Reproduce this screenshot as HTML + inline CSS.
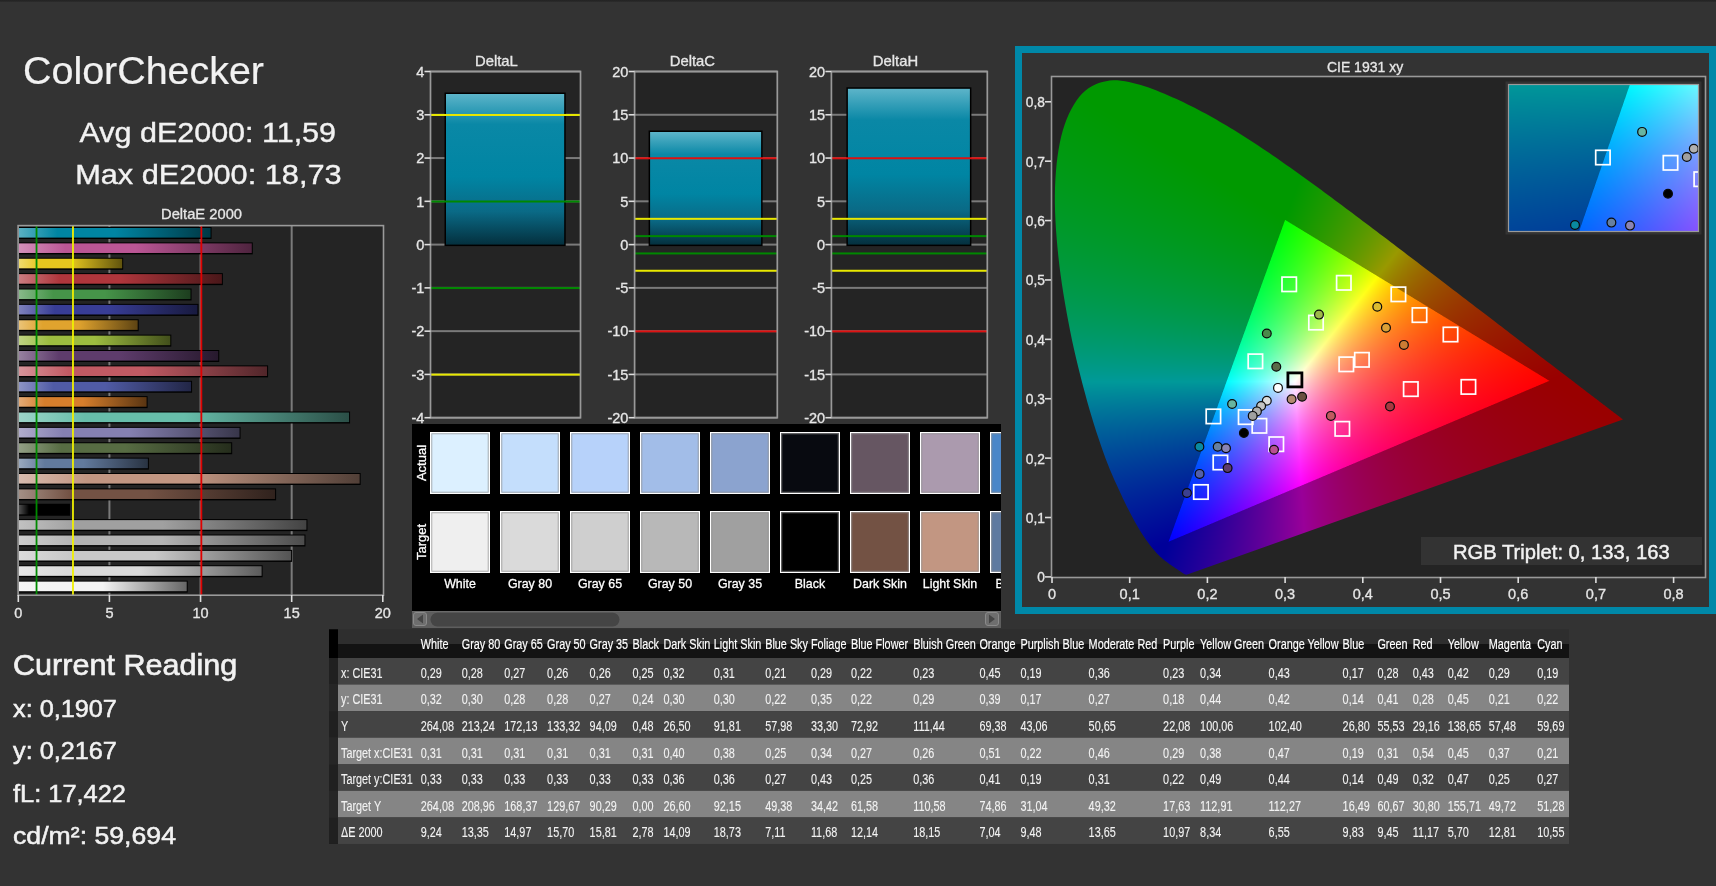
<!DOCTYPE html>
<html><head><meta charset="utf-8">
<style>
html,body{margin:0;padding:0;}
body{width:1716px;height:886px;overflow:hidden;background:#333333;position:relative;font-family:"Liberation Sans",sans-serif;}
#top{position:absolute;left:0;top:0;width:1716px;height:2px;background:linear-gradient(#222,#2c2c2c);}
canvas{position:absolute;display:block;}
#cie{left:1052px;top:77px;width:653px;height:500px;}
#cie2{left:1509px;top:85px;width:189px;height:146px;}
svg{position:absolute;left:0;top:0;}
text{font-family:"Liberation Sans",sans-serif;}
</style></head><body>
<div id="top"></div>
<svg style="position:absolute;left:1052px;top:77px" width="653" height="500"><defs><clipPath id="fbc1052"><path d="M135.3 497.5 L135.3 497.5 L135.2 497.5 L135.2 497.5 L135.2 497.5 L135.2 497.6 L135.1 497.6 L135.1 497.6 L135.0 497.6 L135.0 497.6 L135.0 497.6 L134.9 497.6 L134.9 497.6 L134.8 497.6 L134.8 497.6 L134.7 497.6 L134.7 497.6 L134.6 497.6 L134.5 497.6 L134.5 497.7 L134.4 497.7 L134.4 497.7 L134.3 497.7 L134.2 497.7 L134.1 497.6 L134.0 497.6 L133.9 497.6 L133.8 497.6 L133.7 497.6 L133.5 497.5 L133.4 497.5 L133.3 497.5 L133.2 497.5 L133.1 497.4 L133.0 497.4 L132.9 497.3 L132.8 497.3 L132.7 497.2 L132.5 497.2 L132.4 497.1 L132.3 497.0 L132.2 497.0 L132.1 496.9 L132.0 496.8 L131.8 496.8 L131.7 496.7 L131.5 496.6 L131.4 496.5 L131.2 496.4 L131.1 496.3 L130.9 496.2 L130.7 496.0 L130.5 495.9 L130.3 495.8 L130.1 495.7 L129.9 495.5 L129.7 495.4 L129.5 495.2 L129.2 495.1 L129.0 494.9 L128.8 494.7 L128.5 494.6 L128.3 494.4 L128.0 494.2 L127.7 494.0 L127.5 493.8 L127.2 493.6 L126.9 493.4 L126.5 493.2 L126.2 493.0 L125.9 492.8 L125.5 492.5 L125.2 492.3 L124.8 492.0 L124.4 491.8 L124.0 491.5 L123.5 491.2 L123.1 490.9 L122.6 490.6 L122.2 490.3 L121.7 490.0 L121.2 489.6 L120.7 489.3 L120.2 488.9 L119.6 488.6 L119.1 488.2 L118.5 487.8 L117.9 487.4 L117.3 487.0 L116.7 486.5 L116.1 486.1 L115.4 485.6 L114.7 485.1 L114.1 484.6 L113.4 484.0 L112.6 483.4 L111.9 482.8 L111.1 482.2 L110.4 481.5 L109.6 480.9 L108.8 480.2 L108.0 479.4 L107.1 478.6 L106.2 477.7 L105.3 476.7 L104.3 475.7 L103.3 474.5 L102.2 473.3 L101.1 472.1 L100.0 470.7 L98.9 469.3 L97.7 467.7 L96.4 466.1 L95.2 464.3 L93.8 462.4 L92.5 460.5 L91.1 458.5 L89.7 456.3 L88.2 454.0 L86.7 451.5 L85.2 448.8 L83.5 445.9 L81.9 442.9 L80.2 439.8 L78.4 436.5 L76.6 433.1 L74.8 429.4 L72.9 425.5 L70.9 421.4 L68.9 417.1 L66.8 412.6 L64.6 407.9 L62.4 403.0 L60.2 397.8 L57.9 392.4 L55.6 386.8 L53.4 380.9 L51.1 374.7 L48.9 368.3 L46.6 361.6 L44.3 354.6 L42.0 347.5 L39.7 340.1 L37.5 332.5 L35.3 324.7 L33.1 316.6 L30.8 308.2 L28.6 299.6 L26.4 290.8 L24.2 281.8 L22.1 272.7 L20.1 263.6 L18.3 254.5 L16.5 245.4 L14.7 236.0 L13.1 226.5 L11.5 217.0 L10.0 207.5 L8.6 198.1 L7.4 188.7 L6.4 179.6 L5.5 170.6 L4.7 161.6 L4.0 152.6 L3.5 143.8 L3.1 135.1 L2.9 126.6 L2.9 118.3 L3.0 110.2 L3.4 102.4 L3.9 94.7 L4.6 87.1 L5.5 79.8 L6.5 72.7 L7.8 65.9 L9.2 59.4 L10.8 53.4 L12.6 47.7 L14.6 42.2 L16.9 37.1 L19.3 32.2 L21.8 27.7 L24.5 23.6 L27.3 19.9 L30.2 16.5 L33.3 13.7 L36.4 11.2 L39.8 9.2 L43.3 7.5 L46.8 6.1 L50.4 5.0 L54.1 4.2 L57.7 3.6 L61.4 3.2 L65.2 3.3 L69.1 3.6 L73.0 4.3 L76.9 5.1 L80.9 6.0 L84.8 7.0 L88.7 8.1 L92.7 9.2 L96.6 10.5 L100.6 12.0 L104.6 13.5 L108.5 15.1 L112.4 16.8 L116.3 18.5 L120.2 20.2 L124.0 21.9 L127.8 23.6 L131.5 25.4 L135.2 27.2 L138.9 29.0 L142.6 30.9 L146.2 32.8 L149.9 34.7 L153.5 36.6 L157.1 38.6 L160.7 40.6 L164.2 42.6 L167.8 44.6 L171.3 46.7 L174.9 48.8 L178.4 50.9 L181.9 53.1 L185.5 55.3 L189.0 57.5 L192.5 59.7 L196.0 62.0 L199.5 64.2 L203.0 66.5 L206.5 68.8 L210.0 71.1 L213.5 73.5 L217.0 75.8 L220.5 78.2 L223.9 80.6 L227.4 83.0 L230.9 85.5 L234.3 87.9 L237.8 90.3 L241.3 92.8 L244.7 95.3 L248.2 97.8 L251.7 100.3 L255.1 102.8 L258.6 105.3 L262.1 107.8 L265.6 110.3 L269.0 112.9 L272.5 115.4 L276.0 118.0 L279.5 120.6 L283.0 123.1 L286.4 125.7 L289.9 128.3 L293.4 130.9 L296.8 133.5 L300.3 136.1 L303.8 138.7 L307.2 141.3 L310.7 143.9 L314.1 146.5 L317.6 149.1 L321.0 151.7 L324.5 154.3 L327.9 156.9 L331.4 159.5 L334.8 162.1 L338.2 164.7 L341.7 167.3 L345.1 169.9 L348.5 172.5 L351.9 175.1 L355.3 177.7 L358.6 180.2 L362.0 182.8 L365.4 185.4 L368.7 187.9 L372.0 190.5 L375.3 193.0 L378.7 195.5 L381.9 198.0 L385.2 200.6 L388.5 203.1 L391.8 205.6 L395.0 208.0 L398.2 210.5 L401.4 212.9 L404.6 215.4 L407.8 217.8 L410.9 220.2 L414.1 222.6 L417.2 225.0 L420.2 227.3 L423.3 229.7 L426.3 232.0 L429.4 234.3 L432.4 236.6 L435.3 238.8 L438.3 241.1 L441.2 243.3 L444.1 245.5 L446.9 247.7 L449.7 249.8 L452.5 252.0 L455.3 254.1 L458.0 256.2 L460.7 258.2 L463.3 260.2 L465.9 262.2 L468.5 264.2 L470.9 266.1 L473.4 268.0 L475.8 269.8 L478.1 271.6 L480.4 273.4 L482.7 275.1 L485.0 276.8 L487.2 278.5 L489.4 280.2 L491.5 281.8 L493.6 283.4 L495.7 285.0 L497.8 286.6 L499.8 288.1 L501.7 289.6 L503.7 291.1 L505.5 292.5 L507.3 293.9 L509.1 295.2 L510.8 296.5 L512.5 297.8 L514.2 299.0 L515.8 300.2 L517.3 301.4 L518.9 302.6 L520.3 303.7 L521.8 304.8 L523.2 305.9 L524.5 307.0 L525.9 308.0 L527.2 309.0 L528.4 310.0 L529.7 310.9 L530.9 311.8 L532.0 312.7 L533.1 313.6 L534.2 314.4 L535.3 315.2 L536.3 316.0 L537.3 316.8 L538.3 317.5 L539.2 318.2 L540.1 318.9 L541.0 319.6 L541.9 320.2 L542.7 320.9 L543.6 321.5 L544.4 322.1 L545.2 322.7 L545.9 323.3 L546.6 323.9 L547.3 324.4 L548.0 324.9 L548.7 325.5 L549.4 326.0 L550.0 326.5 L550.7 327.0 L551.3 327.4 L551.9 327.9 L552.5 328.4 L553.1 328.8 L553.7 329.3 L554.2 329.7 L554.8 330.1 L555.3 330.5 L555.8 330.9 L556.3 331.3 L556.8 331.7 L557.3 332.0 L557.8 332.4 L558.2 332.7 L558.7 333.1 L559.1 333.4 L559.5 333.7 L559.9 334.0 L560.3 334.3 L560.7 334.6 L561.1 334.9 L561.4 335.1 L561.8 335.4 L562.1 335.7 L562.4 335.9 L562.7 336.1 L563.0 336.4 L563.3 336.6 L563.6 336.8 L563.8 337.0 L564.1 337.2 L564.4 337.4 L564.6 337.6 L564.8 337.8 L565.1 337.9 L565.3 338.1 L565.5 338.3 L565.7 338.4 L565.9 338.6 L566.1 338.7 L566.2 338.8 L566.4 339.0 L566.6 339.1 L566.7 339.2 L566.9 339.3 L567.0 339.4 L567.2 339.6 L567.4 339.7 L567.6 339.9 L567.8 340.0 L567.9 340.1 L568.1 340.3 L568.3 340.4 L568.5 340.6 L568.8 340.8 L569.0 341.0 L569.3 341.2 L569.6 341.4 L569.9 341.7 L570.2 341.9 L570.5 342.1 L570.7 342.3 L570.9 342.4Z"/></clipPath><clipPath id="fbc1052t"><path d="M497.3 303.8 L233.1 142.9 L116.5 464.7Z"/></clipPath></defs><rect width="653" height="500" fill="#242424"/><g clip-path="url(#fbc1052)"><rect x="40" y="0" width="48" height="8" fill="#009c00"/><rect x="24" y="8" width="88" height="8" fill="#009c00"/><rect x="24" y="16" width="104" height="8" fill="#009c00"/><rect x="16" y="24" width="136" height="8" fill="#009c00"/><rect x="8" y="32" width="8" height="8" fill="#009c0c"/><rect x="16" y="32" width="144" height="8" fill="#009c00"/><rect x="8" y="40" width="16" height="8" fill="#009c0c"/><rect x="24" y="40" width="152" height="8" fill="#009c00"/><rect x="8" y="48" width="32" height="8" fill="#009c0c"/><rect x="40" y="48" width="152" height="8" fill="#009c00"/><rect x="8" y="56" width="48" height="8" fill="#009c0c"/><rect x="56" y="56" width="144" height="8" fill="#009c00"/><rect x="0" y="64" width="72" height="8" fill="#009c0c"/><rect x="72" y="64" width="144" height="8" fill="#009c00"/><rect x="0" y="72" width="88" height="8" fill="#009c0c"/><rect x="88" y="72" width="136" height="8" fill="#009c00"/><rect x="0" y="80" width="16" height="8" fill="#009c18"/><rect x="16" y="80" width="88" height="8" fill="#009c0c"/><rect x="104" y="80" width="136" height="8" fill="#009c00"/><rect x="0" y="88" width="32" height="8" fill="#009c18"/><rect x="32" y="88" width="80" height="8" fill="#009c0c"/><rect x="112" y="88" width="136" height="8" fill="#009c00"/><rect x="0" y="96" width="56" height="8" fill="#009c18"/><rect x="56" y="96" width="72" height="8" fill="#009c0c"/><rect x="128" y="96" width="128" height="8" fill="#009c00"/><rect x="256" y="96" width="8" height="8" fill="#0c9c00"/><rect x="0" y="104" width="72" height="8" fill="#009c18"/><rect x="72" y="104" width="72" height="8" fill="#009c0c"/><rect x="144" y="104" width="112" height="8" fill="#009c00"/><rect x="256" y="104" width="8" height="8" fill="#0c9c00"/><rect x="264" y="104" width="8" height="8" fill="#189c00"/><rect x="0" y="112" width="88" height="8" fill="#009c18"/><rect x="88" y="112" width="72" height="8" fill="#009c0c"/><rect x="160" y="112" width="88" height="8" fill="#009c00"/><rect x="248" y="112" width="16" height="8" fill="#0c9c00"/><rect x="264" y="112" width="16" height="8" fill="#189c00"/><rect x="0" y="120" width="24" height="8" fill="#009c24"/><rect x="24" y="120" width="80" height="8" fill="#009c18"/><rect x="104" y="120" width="72" height="8" fill="#009c0c"/><rect x="176" y="120" width="72" height="8" fill="#009c00"/><rect x="248" y="120" width="16" height="8" fill="#0c9c00"/><rect x="264" y="120" width="8" height="8" fill="#189c00"/><rect x="272" y="120" width="16" height="8" fill="#249c00"/><rect x="288" y="120" width="8" height="8" fill="#309c00"/><rect x="0" y="128" width="48" height="8" fill="#009c24"/><rect x="48" y="128" width="72" height="8" fill="#009c18"/><rect x="120" y="128" width="64" height="8" fill="#009c0c"/><rect x="184" y="128" width="64" height="8" fill="#009c00"/><rect x="248" y="128" width="8" height="8" fill="#0c9c00"/><rect x="256" y="128" width="16" height="8" fill="#189c00"/><rect x="272" y="128" width="8" height="8" fill="#249c00"/><rect x="280" y="128" width="16" height="8" fill="#309c00"/><rect x="296" y="128" width="8" height="8" fill="#3c9c00"/><rect x="0" y="136" width="64" height="8" fill="#009c24"/><rect x="64" y="136" width="72" height="8" fill="#009c18"/><rect x="136" y="136" width="64" height="8" fill="#009c0c"/><rect x="200" y="136" width="40" height="8" fill="#009c00"/><rect x="240" y="136" width="16" height="8" fill="#0c9c00"/><rect x="256" y="136" width="8" height="8" fill="#189c00"/><rect x="264" y="136" width="16" height="8" fill="#249c00"/><rect x="280" y="136" width="8" height="8" fill="#309c00"/><rect x="288" y="136" width="16" height="8" fill="#3c9c00"/><rect x="304" y="136" width="8" height="8" fill="#489c00"/><rect x="0" y="144" width="88" height="8" fill="#009c24"/><rect x="88" y="144" width="72" height="8" fill="#009c18"/><rect x="160" y="144" width="56" height="8" fill="#009c0c"/><rect x="216" y="144" width="24" height="8" fill="#009c00"/><rect x="240" y="144" width="8" height="8" fill="#0c9c00"/><rect x="248" y="144" width="16" height="8" fill="#189c00"/><rect x="264" y="144" width="8" height="8" fill="#249c00"/><rect x="272" y="144" width="16" height="8" fill="#309c00"/><rect x="288" y="144" width="8" height="8" fill="#3c9c00"/><rect x="296" y="144" width="16" height="8" fill="#489c00"/><rect x="312" y="144" width="8" height="8" fill="#549c00"/><rect x="320" y="144" width="8" height="8" fill="#609c00"/><rect x="0" y="152" width="24" height="8" fill="#009c30"/><rect x="24" y="152" width="88" height="8" fill="#009c24"/><rect x="112" y="152" width="64" height="8" fill="#009c18"/><rect x="176" y="152" width="56" height="8" fill="#009c0c"/><rect x="248" y="152" width="8" height="8" fill="#189c00"/><rect x="256" y="152" width="16" height="8" fill="#249c00"/><rect x="272" y="152" width="8" height="8" fill="#309c00"/><rect x="280" y="152" width="16" height="8" fill="#3c9c00"/><rect x="296" y="152" width="8" height="8" fill="#489c00"/><rect x="304" y="152" width="8" height="8" fill="#549c00"/><rect x="312" y="152" width="8" height="8" fill="#609c00"/><rect x="320" y="152" width="16" height="8" fill="#6c9c00"/><rect x="0" y="160" width="56" height="8" fill="#009c30"/><rect x="56" y="160" width="72" height="8" fill="#009c24"/><rect x="128" y="160" width="64" height="8" fill="#009c18"/><rect x="192" y="160" width="40" height="8" fill="#009c0c"/><rect x="264" y="160" width="16" height="8" fill="#309c00"/><rect x="280" y="160" width="8" height="8" fill="#3c9c00"/><rect x="288" y="160" width="8" height="8" fill="#489c00"/><rect x="296" y="160" width="16" height="8" fill="#549c00"/><rect x="312" y="160" width="8" height="8" fill="#609c00"/><rect x="320" y="160" width="8" height="8" fill="#6c9c00"/><rect x="328" y="160" width="8" height="8" fill="#789c00"/><rect x="336" y="160" width="8" height="8" fill="#849c00"/><rect x="0" y="168" width="80" height="8" fill="#009c30"/><rect x="80" y="168" width="72" height="8" fill="#009c24"/><rect x="152" y="168" width="56" height="8" fill="#009c18"/><rect x="208" y="168" width="16" height="8" fill="#009c0c"/><rect x="272" y="168" width="8" height="8" fill="#3c9c00"/><rect x="280" y="168" width="16" height="8" fill="#489c00"/><rect x="296" y="168" width="8" height="8" fill="#549c00"/><rect x="304" y="168" width="8" height="8" fill="#609c00"/><rect x="312" y="168" width="8" height="8" fill="#6c9c00"/><rect x="320" y="168" width="8" height="8" fill="#789c00"/><rect x="328" y="168" width="8" height="8" fill="#849c00"/><rect x="336" y="168" width="8" height="8" fill="#909c00"/><rect x="344" y="168" width="8" height="8" fill="#9c9c00"/><rect x="0" y="176" width="16" height="8" fill="#009c3c"/><rect x="16" y="176" width="88" height="8" fill="#009c30"/><rect x="104" y="176" width="64" height="8" fill="#009c24"/><rect x="168" y="176" width="56" height="8" fill="#009c18"/><rect x="288" y="176" width="8" height="8" fill="#549c00"/><rect x="296" y="176" width="8" height="8" fill="#609c00"/><rect x="304" y="176" width="8" height="8" fill="#6c9c00"/><rect x="312" y="176" width="8" height="8" fill="#789c00"/><rect x="320" y="176" width="8" height="8" fill="#849c00"/><rect x="328" y="176" width="8" height="8" fill="#909c00"/><rect x="336" y="176" width="8" height="8" fill="#9c9c00"/><rect x="344" y="176" width="8" height="8" fill="#9c9000"/><rect x="352" y="176" width="8" height="8" fill="#9c8400"/><rect x="360" y="176" width="8" height="8" fill="#9c7800"/><rect x="0" y="184" width="48" height="8" fill="#009c3c"/><rect x="48" y="184" width="80" height="8" fill="#009c30"/><rect x="128" y="184" width="64" height="8" fill="#009c24"/><rect x="192" y="184" width="32" height="8" fill="#009c18"/><rect x="296" y="184" width="8" height="8" fill="#609c00"/><rect x="304" y="184" width="8" height="8" fill="#6c9c00"/><rect x="312" y="184" width="8" height="8" fill="#789c00"/><rect x="320" y="184" width="8" height="8" fill="#849c00"/><rect x="328" y="184" width="8" height="8" fill="#909c00"/><rect x="336" y="184" width="8" height="8" fill="#9c9000"/><rect x="344" y="184" width="8" height="8" fill="#9c8400"/><rect x="352" y="184" width="16" height="8" fill="#9c7800"/><rect x="368" y="184" width="8" height="8" fill="#9c6c00"/><rect x="0" y="192" width="80" height="8" fill="#009c3c"/><rect x="80" y="192" width="72" height="8" fill="#009c30"/><rect x="152" y="192" width="64" height="8" fill="#009c24"/><rect x="312" y="192" width="8" height="8" fill="#849c00"/><rect x="320" y="192" width="8" height="8" fill="#909c00"/><rect x="328" y="192" width="8" height="8" fill="#9c9000"/><rect x="336" y="192" width="8" height="8" fill="#9c8400"/><rect x="344" y="192" width="16" height="8" fill="#9c7800"/><rect x="360" y="192" width="8" height="8" fill="#9c6c00"/><rect x="368" y="192" width="16" height="8" fill="#9c6000"/><rect x="8" y="200" width="16" height="8" fill="#009c48"/><rect x="24" y="200" width="88" height="8" fill="#009c3c"/><rect x="112" y="200" width="72" height="8" fill="#009c30"/><rect x="184" y="200" width="32" height="8" fill="#009c24"/><rect x="328" y="200" width="16" height="8" fill="#9c8400"/><rect x="344" y="200" width="8" height="8" fill="#9c7800"/><rect x="352" y="200" width="8" height="8" fill="#9c6c00"/><rect x="360" y="200" width="16" height="8" fill="#9c6000"/><rect x="376" y="200" width="16" height="8" fill="#9c5400"/><rect x="392" y="200" width="8" height="8" fill="#9c4800"/><rect x="8" y="208" width="56" height="8" fill="#009c48"/><rect x="64" y="208" width="80" height="8" fill="#009c3c"/><rect x="144" y="208" width="64" height="8" fill="#009c30"/><rect x="208" y="208" width="8" height="8" fill="#009c24"/><rect x="336" y="208" width="8" height="8" fill="#9c7800"/><rect x="344" y="208" width="8" height="8" fill="#9c6c00"/><rect x="352" y="208" width="16" height="8" fill="#9c6000"/><rect x="368" y="208" width="16" height="8" fill="#9c5400"/><rect x="384" y="208" width="16" height="8" fill="#9c4800"/><rect x="400" y="208" width="8" height="8" fill="#9c3c00"/><rect x="8" y="216" width="96" height="8" fill="#009c48"/><rect x="104" y="216" width="72" height="8" fill="#009c3c"/><rect x="176" y="216" width="32" height="8" fill="#009c30"/><rect x="352" y="216" width="8" height="8" fill="#9c6000"/><rect x="360" y="216" width="16" height="8" fill="#9c5400"/><rect x="376" y="216" width="16" height="8" fill="#9c4800"/><rect x="392" y="216" width="24" height="8" fill="#9c3c00"/><rect x="8" y="224" width="40" height="8" fill="#009c54"/><rect x="48" y="224" width="88" height="8" fill="#009c48"/><rect x="136" y="224" width="72" height="8" fill="#009c3c"/><rect x="368" y="224" width="16" height="8" fill="#9c4800"/><rect x="384" y="224" width="24" height="8" fill="#9c3c00"/><rect x="408" y="224" width="24" height="8" fill="#9c3000"/><rect x="8" y="232" width="88" height="8" fill="#009c54"/><rect x="96" y="232" width="80" height="8" fill="#009c48"/><rect x="176" y="232" width="24" height="8" fill="#009c3c"/><rect x="376" y="232" width="24" height="8" fill="#9c3c00"/><rect x="400" y="232" width="24" height="8" fill="#9c3000"/><rect x="424" y="232" width="16" height="8" fill="#9c2400"/><rect x="8" y="240" width="40" height="8" fill="#009c60"/><rect x="48" y="240" width="96" height="8" fill="#009c54"/><rect x="144" y="240" width="56" height="8" fill="#009c48"/><rect x="392" y="240" width="24" height="8" fill="#9c3000"/><rect x="416" y="240" width="32" height="8" fill="#9c2400"/><rect x="16" y="248" width="96" height="8" fill="#009c60"/><rect x="112" y="248" width="80" height="8" fill="#009c54"/><rect x="192" y="248" width="8" height="8" fill="#009c48"/><rect x="408" y="248" width="32" height="8" fill="#9c2400"/><rect x="440" y="248" width="24" height="8" fill="#9c1800"/><rect x="16" y="256" width="48" height="8" fill="#009c6c"/><rect x="64" y="256" width="104" height="8" fill="#009c60"/><rect x="168" y="256" width="24" height="8" fill="#009c54"/><rect x="416" y="256" width="16" height="8" fill="#9c2400"/><rect x="432" y="256" width="40" height="8" fill="#9c1800"/><rect x="16" y="264" width="128" height="8" fill="#009c6c"/><rect x="144" y="264" width="48" height="8" fill="#009c60"/><rect x="432" y="264" width="32" height="8" fill="#9c1800"/><rect x="464" y="264" width="16" height="8" fill="#9c0c00"/><rect x="16" y="272" width="96" height="8" fill="#009c78"/><rect x="112" y="272" width="80" height="8" fill="#009c6c"/><rect x="440" y="272" width="8" height="8" fill="#9c1800"/><rect x="448" y="272" width="48" height="8" fill="#9c0c00"/><rect x="24" y="280" width="48" height="8" fill="#009c84"/><rect x="72" y="280" width="112" height="8" fill="#009c78"/><rect x="456" y="280" width="40" height="8" fill="#9c0c00"/><rect x="496" y="280" width="8" height="8" fill="#9c0000"/><rect x="24" y="288" width="160" height="8" fill="#009c84"/><rect x="472" y="288" width="8" height="8" fill="#9c0c00"/><rect x="480" y="288" width="32" height="8" fill="#9c0000"/><rect x="24" y="296" width="152" height="8" fill="#009c90"/><rect x="176" y="296" width="8" height="8" fill="#0c9c90"/><rect x="480" y="296" width="48" height="8" fill="#9c0000"/><rect x="24" y="304" width="152" height="8" fill="#00909c"/><rect x="472" y="304" width="64" height="8" fill="#9c0000"/><rect x="32" y="312" width="24" height="8" fill="#00909c"/><rect x="56" y="312" width="120" height="8" fill="#00849c"/><rect x="456" y="312" width="16" height="8" fill="#9c000c"/><rect x="472" y="312" width="72" height="8" fill="#9c0000"/><rect x="32" y="320" width="56" height="8" fill="#00849c"/><rect x="88" y="320" width="80" height="8" fill="#00789c"/><rect x="440" y="320" width="48" height="8" fill="#9c000c"/><rect x="488" y="320" width="64" height="8" fill="#9c0000"/><rect x="32" y="328" width="80" height="8" fill="#00789c"/><rect x="112" y="328" width="56" height="8" fill="#006c9c"/><rect x="416" y="328" width="8" height="8" fill="#9c0018"/><rect x="424" y="328" width="72" height="8" fill="#9c000c"/><rect x="496" y="328" width="72" height="8" fill="#9c0000"/><rect x="32" y="336" width="96" height="8" fill="#006c9c"/><rect x="128" y="336" width="40" height="8" fill="#00609c"/><rect x="400" y="336" width="40" height="8" fill="#9c0018"/><rect x="440" y="336" width="64" height="8" fill="#9c000c"/><rect x="504" y="336" width="72" height="8" fill="#9c0000"/><rect x="40" y="344" width="8" height="8" fill="#006c9c"/><rect x="48" y="344" width="96" height="8" fill="#00609c"/><rect x="144" y="344" width="16" height="8" fill="#00549c"/><rect x="384" y="344" width="16" height="8" fill="#9c0024"/><rect x="400" y="344" width="48" height="8" fill="#9c0018"/><rect x="448" y="344" width="72" height="8" fill="#9c000c"/><rect x="520" y="344" width="48" height="8" fill="#9c0000"/><rect x="40" y="352" width="40" height="8" fill="#00609c"/><rect x="80" y="352" width="80" height="8" fill="#00549c"/><rect x="360" y="352" width="8" height="8" fill="#9c0030"/><rect x="368" y="352" width="32" height="8" fill="#9c0024"/><rect x="400" y="352" width="56" height="8" fill="#9c0018"/><rect x="456" y="352" width="72" height="8" fill="#9c000c"/><rect x="528" y="352" width="16" height="8" fill="#9c0000"/><rect x="40" y="360" width="72" height="8" fill="#00549c"/><rect x="112" y="360" width="48" height="8" fill="#00489c"/><rect x="344" y="360" width="24" height="8" fill="#9c0030"/><rect x="368" y="360" width="40" height="8" fill="#9c0024"/><rect x="408" y="360" width="56" height="8" fill="#9c0018"/><rect x="464" y="360" width="56" height="8" fill="#9c000c"/><rect x="48" y="368" width="8" height="8" fill="#00549c"/><rect x="56" y="368" width="80" height="8" fill="#00489c"/><rect x="136" y="368" width="16" height="8" fill="#003c9c"/><rect x="328" y="368" width="24" height="8" fill="#9c003c"/><rect x="352" y="368" width="24" height="8" fill="#9c0030"/><rect x="376" y="368" width="40" height="8" fill="#9c0024"/><rect x="416" y="368" width="56" height="8" fill="#9c0018"/><rect x="472" y="368" width="32" height="8" fill="#9c000c"/><rect x="48" y="376" width="40" height="8" fill="#00489c"/><rect x="88" y="376" width="64" height="8" fill="#003c9c"/><rect x="304" y="376" width="8" height="8" fill="#9c0054"/><rect x="312" y="376" width="16" height="8" fill="#9c0048"/><rect x="328" y="376" width="24" height="8" fill="#9c003c"/><rect x="352" y="376" width="32" height="8" fill="#9c0030"/><rect x="384" y="376" width="40" height="8" fill="#9c0024"/><rect x="424" y="376" width="56" height="8" fill="#9c0018"/><rect x="48" y="384" width="72" height="8" fill="#003c9c"/><rect x="120" y="384" width="32" height="8" fill="#00309c"/><rect x="288" y="384" width="8" height="8" fill="#9c0060"/><rect x="296" y="384" width="16" height="8" fill="#9c0054"/><rect x="312" y="384" width="24" height="8" fill="#9c0048"/><rect x="336" y="384" width="24" height="8" fill="#9c003c"/><rect x="360" y="384" width="24" height="8" fill="#9c0030"/><rect x="384" y="384" width="40" height="8" fill="#9c0024"/><rect x="424" y="384" width="32" height="8" fill="#9c0018"/><rect x="56" y="392" width="24" height="8" fill="#003c9c"/><rect x="80" y="392" width="64" height="8" fill="#00309c"/><rect x="264" y="392" width="8" height="8" fill="#9c0078"/><rect x="272" y="392" width="16" height="8" fill="#9c006c"/><rect x="288" y="392" width="16" height="8" fill="#9c0060"/><rect x="304" y="392" width="16" height="8" fill="#9c0054"/><rect x="320" y="392" width="16" height="8" fill="#9c0048"/><rect x="336" y="392" width="24" height="8" fill="#9c003c"/><rect x="360" y="392" width="32" height="8" fill="#9c0030"/><rect x="392" y="392" width="40" height="8" fill="#9c0024"/><rect x="56" y="400" width="56" height="8" fill="#00309c"/><rect x="112" y="400" width="32" height="8" fill="#00249c"/><rect x="248" y="400" width="8" height="8" fill="#9c0090"/><rect x="256" y="400" width="8" height="8" fill="#9c0084"/><rect x="264" y="400" width="16" height="8" fill="#9c0078"/><rect x="280" y="400" width="8" height="8" fill="#9c006c"/><rect x="288" y="400" width="16" height="8" fill="#9c0060"/><rect x="304" y="400" width="16" height="8" fill="#9c0054"/><rect x="320" y="400" width="16" height="8" fill="#9c0048"/><rect x="336" y="400" width="32" height="8" fill="#9c003c"/><rect x="368" y="400" width="32" height="8" fill="#9c0030"/><rect x="400" y="400" width="8" height="8" fill="#9c0024"/><rect x="64" y="408" width="16" height="8" fill="#00309c"/><rect x="80" y="408" width="56" height="8" fill="#00249c"/><rect x="232" y="408" width="8" height="8" fill="#84009c"/><rect x="240" y="408" width="8" height="8" fill="#90009c"/><rect x="248" y="408" width="8" height="8" fill="#9c0090"/><rect x="256" y="408" width="8" height="8" fill="#9c0084"/><rect x="264" y="408" width="16" height="8" fill="#9c0078"/><rect x="280" y="408" width="8" height="8" fill="#9c006c"/><rect x="288" y="408" width="16" height="8" fill="#9c0060"/><rect x="304" y="408" width="16" height="8" fill="#9c0054"/><rect x="320" y="408" width="24" height="8" fill="#9c0048"/><rect x="344" y="408" width="24" height="8" fill="#9c003c"/><rect x="368" y="408" width="24" height="8" fill="#9c0030"/><rect x="64" y="416" width="48" height="8" fill="#00249c"/><rect x="112" y="416" width="24" height="8" fill="#00189c"/><rect x="208" y="416" width="8" height="8" fill="#60009c"/><rect x="216" y="416" width="8" height="8" fill="#6c009c"/><rect x="224" y="416" width="8" height="8" fill="#78009c"/><rect x="232" y="416" width="8" height="8" fill="#84009c"/><rect x="240" y="416" width="8" height="8" fill="#90009c"/><rect x="248" y="416" width="8" height="8" fill="#9c0090"/><rect x="256" y="416" width="16" height="8" fill="#9c0084"/><rect x="272" y="416" width="8" height="8" fill="#9c0078"/><rect x="280" y="416" width="8" height="8" fill="#9c006c"/><rect x="288" y="416" width="16" height="8" fill="#9c0060"/><rect x="304" y="416" width="16" height="8" fill="#9c0054"/><rect x="320" y="416" width="24" height="8" fill="#9c0048"/><rect x="344" y="416" width="24" height="8" fill="#9c003c"/><rect x="72" y="424" width="8" height="8" fill="#00249c"/><rect x="80" y="424" width="56" height="8" fill="#00189c"/><rect x="192" y="424" width="8" height="8" fill="#48009c"/><rect x="200" y="424" width="8" height="8" fill="#54009c"/><rect x="208" y="424" width="8" height="8" fill="#60009c"/><rect x="216" y="424" width="8" height="8" fill="#6c009c"/><rect x="224" y="424" width="8" height="8" fill="#78009c"/><rect x="232" y="424" width="8" height="8" fill="#84009c"/><rect x="240" y="424" width="8" height="8" fill="#90009c"/><rect x="248" y="424" width="8" height="8" fill="#9c009c"/><rect x="256" y="424" width="8" height="8" fill="#9c0090"/><rect x="264" y="424" width="8" height="8" fill="#9c0084"/><rect x="272" y="424" width="8" height="8" fill="#9c0078"/><rect x="280" y="424" width="16" height="8" fill="#9c006c"/><rect x="296" y="424" width="16" height="8" fill="#9c0060"/><rect x="312" y="424" width="16" height="8" fill="#9c0054"/><rect x="328" y="424" width="16" height="8" fill="#9c0048"/><rect x="72" y="432" width="40" height="8" fill="#00189c"/><rect x="112" y="432" width="16" height="8" fill="#000c9c"/><rect x="176" y="432" width="8" height="8" fill="#3c009c"/><rect x="184" y="432" width="16" height="8" fill="#48009c"/><rect x="200" y="432" width="8" height="8" fill="#54009c"/><rect x="208" y="432" width="8" height="8" fill="#60009c"/><rect x="216" y="432" width="8" height="8" fill="#6c009c"/><rect x="224" y="432" width="8" height="8" fill="#78009c"/><rect x="232" y="432" width="8" height="8" fill="#84009c"/><rect x="240" y="432" width="8" height="8" fill="#90009c"/><rect x="248" y="432" width="8" height="8" fill="#9c009c"/><rect x="256" y="432" width="8" height="8" fill="#9c0090"/><rect x="264" y="432" width="8" height="8" fill="#9c0084"/><rect x="272" y="432" width="8" height="8" fill="#9c0078"/><rect x="280" y="432" width="16" height="8" fill="#9c006c"/><rect x="296" y="432" width="16" height="8" fill="#9c0060"/><rect x="312" y="432" width="8" height="8" fill="#9c0054"/><rect x="80" y="440" width="8" height="8" fill="#00189c"/><rect x="88" y="440" width="40" height="8" fill="#000c9c"/><rect x="152" y="440" width="16" height="8" fill="#24009c"/><rect x="168" y="440" width="8" height="8" fill="#30009c"/><rect x="176" y="440" width="8" height="8" fill="#3c009c"/><rect x="184" y="440" width="16" height="8" fill="#48009c"/><rect x="200" y="440" width="8" height="8" fill="#54009c"/><rect x="208" y="440" width="8" height="8" fill="#60009c"/><rect x="216" y="440" width="8" height="8" fill="#6c009c"/><rect x="224" y="440" width="8" height="8" fill="#78009c"/><rect x="232" y="440" width="8" height="8" fill="#84009c"/><rect x="240" y="440" width="8" height="8" fill="#90009c"/><rect x="248" y="440" width="8" height="8" fill="#9c009c"/><rect x="256" y="440" width="8" height="8" fill="#9c0090"/><rect x="264" y="440" width="8" height="8" fill="#9c0084"/><rect x="272" y="440" width="8" height="8" fill="#9c0078"/><rect x="280" y="440" width="16" height="8" fill="#9c006c"/><rect x="80" y="448" width="40" height="8" fill="#000c9c"/><rect x="120" y="448" width="8" height="8" fill="#00009c"/><rect x="136" y="448" width="8" height="8" fill="#0c009c"/><rect x="144" y="448" width="8" height="8" fill="#18009c"/><rect x="152" y="448" width="8" height="8" fill="#24009c"/><rect x="160" y="448" width="16" height="8" fill="#30009c"/><rect x="176" y="448" width="8" height="8" fill="#3c009c"/><rect x="184" y="448" width="8" height="8" fill="#48009c"/><rect x="192" y="448" width="16" height="8" fill="#54009c"/><rect x="208" y="448" width="8" height="8" fill="#60009c"/><rect x="216" y="448" width="8" height="8" fill="#6c009c"/><rect x="224" y="448" width="8" height="8" fill="#78009c"/><rect x="232" y="448" width="8" height="8" fill="#84009c"/><rect x="240" y="448" width="8" height="8" fill="#90009c"/><rect x="248" y="448" width="8" height="8" fill="#9c009c"/><rect x="256" y="448" width="8" height="8" fill="#9c0090"/><rect x="264" y="448" width="8" height="8" fill="#9c0084"/><rect x="272" y="448" width="8" height="8" fill="#9c0078"/><rect x="88" y="456" width="16" height="8" fill="#000c9c"/><rect x="104" y="456" width="24" height="8" fill="#00009c"/><rect x="128" y="456" width="8" height="8" fill="#0c009c"/><rect x="136" y="456" width="16" height="8" fill="#18009c"/><rect x="152" y="456" width="8" height="8" fill="#24009c"/><rect x="160" y="456" width="16" height="8" fill="#30009c"/><rect x="176" y="456" width="8" height="8" fill="#3c009c"/><rect x="184" y="456" width="8" height="8" fill="#48009c"/><rect x="192" y="456" width="16" height="8" fill="#54009c"/><rect x="208" y="456" width="8" height="8" fill="#60009c"/><rect x="216" y="456" width="8" height="8" fill="#6c009c"/><rect x="224" y="456" width="8" height="8" fill="#78009c"/><rect x="232" y="456" width="8" height="8" fill="#84009c"/><rect x="240" y="456" width="8" height="8" fill="#90009c"/><rect x="248" y="456" width="8" height="8" fill="#9c009c"/><rect x="88" y="464" width="32" height="8" fill="#00009c"/><rect x="120" y="464" width="16" height="8" fill="#0c009c"/><rect x="136" y="464" width="8" height="8" fill="#18009c"/><rect x="144" y="464" width="16" height="8" fill="#24009c"/><rect x="160" y="464" width="8" height="8" fill="#30009c"/><rect x="168" y="464" width="16" height="8" fill="#3c009c"/><rect x="184" y="464" width="8" height="8" fill="#48009c"/><rect x="192" y="464" width="16" height="8" fill="#54009c"/><rect x="208" y="464" width="8" height="8" fill="#60009c"/><rect x="216" y="464" width="8" height="8" fill="#6c009c"/><rect x="224" y="464" width="8" height="8" fill="#78009c"/><rect x="96" y="472" width="24" height="8" fill="#00009c"/><rect x="120" y="472" width="16" height="8" fill="#0c009c"/><rect x="136" y="472" width="8" height="8" fill="#18009c"/><rect x="144" y="472" width="16" height="8" fill="#24009c"/><rect x="160" y="472" width="8" height="8" fill="#30009c"/><rect x="168" y="472" width="16" height="8" fill="#3c009c"/><rect x="184" y="472" width="8" height="8" fill="#48009c"/><rect x="192" y="472" width="8" height="8" fill="#54009c"/><rect x="200" y="472" width="8" height="8" fill="#60009c"/><rect x="104" y="480" width="16" height="8" fill="#00009c"/><rect x="120" y="480" width="8" height="8" fill="#0c009c"/><rect x="128" y="480" width="16" height="8" fill="#18009c"/><rect x="144" y="480" width="16" height="8" fill="#24009c"/><rect x="160" y="480" width="8" height="8" fill="#30009c"/><rect x="168" y="480" width="16" height="8" fill="#3c009c"/><rect x="112" y="488" width="16" height="8" fill="#0c009c"/><rect x="128" y="488" width="16" height="8" fill="#18009c"/><rect x="144" y="488" width="8" height="8" fill="#24009c"/><rect x="152" y="488" width="16" height="8" fill="#30009c"/><rect x="128" y="496" width="8" height="8" fill="#18009c"/><rect x="136" y="496" width="8" height="8" fill="#24009c"/></g><g clip-path="url(#fbc1052t)"><rect x="232" y="136" width="8" height="8" fill="#00fc00"/><rect x="224" y="144" width="8" height="8" fill="#00fc00"/><rect x="232" y="144" width="8" height="8" fill="#0cfc00"/><rect x="240" y="144" width="8" height="8" fill="#18fc00"/><rect x="248" y="144" width="8" height="8" fill="#24fc00"/><rect x="224" y="152" width="8" height="8" fill="#00fc0c"/><rect x="232" y="152" width="8" height="8" fill="#0cfc0c"/><rect x="240" y="152" width="8" height="8" fill="#18fc00"/><rect x="248" y="152" width="8" height="8" fill="#24fc00"/><rect x="256" y="152" width="8" height="8" fill="#30fc00"/><rect x="224" y="160" width="8" height="8" fill="#00fc0c"/><rect x="232" y="160" width="8" height="8" fill="#0cfc0c"/><rect x="240" y="160" width="8" height="8" fill="#18fc0c"/><rect x="248" y="160" width="8" height="8" fill="#30fc0c"/><rect x="256" y="160" width="8" height="8" fill="#3cfc00"/><rect x="264" y="160" width="8" height="8" fill="#48fc00"/><rect x="272" y="160" width="8" height="8" fill="#54fc00"/><rect x="216" y="168" width="8" height="8" fill="#00fc18"/><rect x="224" y="168" width="8" height="8" fill="#0cfc18"/><rect x="232" y="168" width="8" height="8" fill="#18fc18"/><rect x="240" y="168" width="8" height="8" fill="#24fc0c"/><rect x="248" y="168" width="8" height="8" fill="#30fc0c"/><rect x="256" y="168" width="8" height="8" fill="#3cfc0c"/><rect x="264" y="168" width="8" height="8" fill="#54fc0c"/><rect x="272" y="168" width="8" height="8" fill="#60fc00"/><rect x="280" y="168" width="8" height="8" fill="#6cfc00"/><rect x="216" y="176" width="8" height="8" fill="#00fc24"/><rect x="224" y="176" width="8" height="8" fill="#0cfc18"/><rect x="232" y="176" width="8" height="8" fill="#18fc18"/><rect x="240" y="176" width="8" height="8" fill="#30fc18"/><rect x="248" y="176" width="8" height="8" fill="#3cfc18"/><rect x="256" y="176" width="8" height="8" fill="#48fc0c"/><rect x="264" y="176" width="8" height="8" fill="#54fc0c"/><rect x="272" y="176" width="8" height="8" fill="#6cfc0c"/><rect x="280" y="176" width="8" height="8" fill="#78fc00"/><rect x="288" y="176" width="8" height="8" fill="#84fc00"/><rect x="296" y="176" width="8" height="8" fill="#9cfc00"/><rect x="208" y="184" width="8" height="8" fill="#00fc30"/><rect x="216" y="184" width="8" height="8" fill="#00fc24"/><rect x="224" y="184" width="8" height="8" fill="#18fc24"/><rect x="232" y="184" width="8" height="8" fill="#24fc24"/><rect x="240" y="184" width="8" height="8" fill="#30fc24"/><rect x="248" y="184" width="8" height="8" fill="#3cfc18"/><rect x="256" y="184" width="8" height="8" fill="#54fc18"/><rect x="264" y="184" width="8" height="8" fill="#60fc18"/><rect x="272" y="184" width="8" height="8" fill="#6cfc0c"/><rect x="280" y="184" width="8" height="8" fill="#84fc0c"/><rect x="288" y="184" width="8" height="8" fill="#90fc0c"/><rect x="296" y="184" width="8" height="8" fill="#a8fc00"/><rect x="304" y="184" width="8" height="8" fill="#b4fc00"/><rect x="312" y="184" width="8" height="8" fill="#ccfc00"/><rect x="208" y="192" width="8" height="8" fill="#00fc30"/><rect x="216" y="192" width="8" height="8" fill="#0cfc30"/><rect x="224" y="192" width="8" height="8" fill="#18fc30"/><rect x="232" y="192" width="8" height="8" fill="#24fc24"/><rect x="240" y="192" width="8" height="8" fill="#3cfc24"/><rect x="248" y="192" width="8" height="8" fill="#48fc24"/><rect x="256" y="192" width="8" height="8" fill="#54fc24"/><rect x="264" y="192" width="8" height="8" fill="#6cfc18"/><rect x="272" y="192" width="8" height="8" fill="#78fc18"/><rect x="280" y="192" width="8" height="8" fill="#90fc18"/><rect x="288" y="192" width="8" height="8" fill="#9cfc0c"/><rect x="296" y="192" width="8" height="8" fill="#b4fc0c"/><rect x="304" y="192" width="8" height="8" fill="#ccfc0c"/><rect x="312" y="192" width="8" height="8" fill="#d8fc00"/><rect x="320" y="192" width="8" height="8" fill="#f0fc00"/><rect x="208" y="200" width="8" height="8" fill="#00fc3c"/><rect x="216" y="200" width="8" height="8" fill="#0cfc3c"/><rect x="224" y="200" width="8" height="8" fill="#24fc30"/><rect x="232" y="200" width="8" height="8" fill="#30fc30"/><rect x="240" y="200" width="8" height="8" fill="#3cfc30"/><rect x="248" y="200" width="8" height="8" fill="#54fc30"/><rect x="256" y="200" width="8" height="8" fill="#60fc24"/><rect x="264" y="200" width="8" height="8" fill="#78fc24"/><rect x="272" y="200" width="8" height="8" fill="#84fc24"/><rect x="280" y="200" width="8" height="8" fill="#9cfc18"/><rect x="288" y="200" width="8" height="8" fill="#a8fc18"/><rect x="296" y="200" width="8" height="8" fill="#c0fc18"/><rect x="304" y="200" width="8" height="8" fill="#d8fc0c"/><rect x="312" y="200" width="8" height="8" fill="#f0fc0c"/><rect x="320" y="200" width="8" height="8" fill="#fcfc00"/><rect x="328" y="200" width="8" height="8" fill="#fce400"/><rect x="336" y="200" width="8" height="8" fill="#fcd800"/><rect x="200" y="208" width="8" height="8" fill="#00fc48"/><rect x="208" y="208" width="8" height="8" fill="#0cfc48"/><rect x="216" y="208" width="8" height="8" fill="#18fc3c"/><rect x="224" y="208" width="8" height="8" fill="#24fc3c"/><rect x="232" y="208" width="8" height="8" fill="#3cfc3c"/><rect x="240" y="208" width="8" height="8" fill="#48fc3c"/><rect x="248" y="208" width="8" height="8" fill="#54fc30"/><rect x="256" y="208" width="8" height="8" fill="#6cfc30"/><rect x="264" y="208" width="8" height="8" fill="#84fc30"/><rect x="272" y="208" width="8" height="8" fill="#90fc24"/><rect x="280" y="208" width="8" height="8" fill="#a8fc24"/><rect x="288" y="208" width="8" height="8" fill="#c0fc24"/><rect x="296" y="208" width="8" height="8" fill="#ccfc18"/><rect x="304" y="208" width="8" height="8" fill="#e4fc18"/><rect x="312" y="208" width="8" height="8" fill="#fcfc18"/><rect x="320" y="208" width="8" height="8" fill="#fce40c"/><rect x="328" y="208" width="8" height="8" fill="#fcd80c"/><rect x="336" y="208" width="8" height="8" fill="#fcc000"/><rect x="344" y="208" width="8" height="8" fill="#fcb400"/><rect x="352" y="208" width="8" height="8" fill="#fca800"/><rect x="200" y="216" width="8" height="8" fill="#00fc54"/><rect x="208" y="216" width="8" height="8" fill="#0cfc48"/><rect x="216" y="216" width="8" height="8" fill="#18fc48"/><rect x="224" y="216" width="8" height="8" fill="#30fc48"/><rect x="232" y="216" width="8" height="8" fill="#3cfc48"/><rect x="240" y="216" width="8" height="8" fill="#54fc3c"/><rect x="248" y="216" width="8" height="8" fill="#60fc3c"/><rect x="256" y="216" width="8" height="8" fill="#78fc3c"/><rect x="264" y="216" width="8" height="8" fill="#90fc3c"/><rect x="272" y="216" width="8" height="8" fill="#9cfc30"/><rect x="280" y="216" width="8" height="8" fill="#b4fc30"/><rect x="288" y="216" width="8" height="8" fill="#ccfc30"/><rect x="296" y="216" width="8" height="8" fill="#e4fc24"/><rect x="304" y="216" width="8" height="8" fill="#fcfc24"/><rect x="312" y="216" width="8" height="8" fill="#fcf018"/><rect x="320" y="216" width="8" height="8" fill="#fcd818"/><rect x="328" y="216" width="8" height="8" fill="#fcc00c"/><rect x="336" y="216" width="8" height="8" fill="#fcb40c"/><rect x="344" y="216" width="8" height="8" fill="#fca800"/><rect x="352" y="216" width="8" height="8" fill="#fc9c00"/><rect x="360" y="216" width="8" height="8" fill="#fc9000"/><rect x="200" y="224" width="8" height="8" fill="#00fc60"/><rect x="208" y="224" width="8" height="8" fill="#18fc54"/><rect x="216" y="224" width="8" height="8" fill="#24fc54"/><rect x="224" y="224" width="8" height="8" fill="#3cfc54"/><rect x="232" y="224" width="8" height="8" fill="#48fc54"/><rect x="240" y="224" width="8" height="8" fill="#60fc48"/><rect x="248" y="224" width="8" height="8" fill="#6cfc48"/><rect x="256" y="224" width="8" height="8" fill="#84fc48"/><rect x="264" y="224" width="8" height="8" fill="#9cfc3c"/><rect x="272" y="224" width="8" height="8" fill="#a8fc3c"/><rect x="280" y="224" width="8" height="8" fill="#c0fc3c"/><rect x="288" y="224" width="8" height="8" fill="#d8fc30"/><rect x="296" y="224" width="8" height="8" fill="#f0fc30"/><rect x="304" y="224" width="8" height="8" fill="#fcf024"/><rect x="312" y="224" width="8" height="8" fill="#fcd824"/><rect x="320" y="224" width="8" height="8" fill="#fccc18"/><rect x="328" y="224" width="8" height="8" fill="#fcb418"/><rect x="336" y="224" width="8" height="8" fill="#fca80c"/><rect x="344" y="224" width="8" height="8" fill="#fc9c0c"/><rect x="352" y="224" width="8" height="8" fill="#fc900c"/><rect x="360" y="224" width="8" height="8" fill="#fc8400"/><rect x="368" y="224" width="16" height="8" fill="#fc7800"/><rect x="192" y="232" width="8" height="8" fill="#00fc6c"/><rect x="200" y="232" width="8" height="8" fill="#0cfc60"/><rect x="208" y="232" width="8" height="8" fill="#18fc60"/><rect x="216" y="232" width="8" height="8" fill="#30fc60"/><rect x="224" y="232" width="8" height="8" fill="#3cfc60"/><rect x="232" y="232" width="8" height="8" fill="#54fc54"/><rect x="240" y="232" width="8" height="8" fill="#60fc54"/><rect x="248" y="232" width="8" height="8" fill="#78fc54"/><rect x="256" y="232" width="8" height="8" fill="#90fc54"/><rect x="264" y="232" width="8" height="8" fill="#a8fc48"/><rect x="272" y="232" width="8" height="8" fill="#c0fc48"/><rect x="280" y="232" width="8" height="8" fill="#d8fc48"/><rect x="288" y="232" width="8" height="8" fill="#f0fc3c"/><rect x="296" y="232" width="8" height="8" fill="#fcf03c"/><rect x="304" y="232" width="8" height="8" fill="#fcd830"/><rect x="312" y="232" width="8" height="8" fill="#fccc24"/><rect x="320" y="232" width="8" height="8" fill="#fcb424"/><rect x="328" y="232" width="8" height="8" fill="#fca818"/><rect x="336" y="232" width="8" height="8" fill="#fc9c18"/><rect x="344" y="232" width="8" height="8" fill="#fc900c"/><rect x="352" y="232" width="8" height="8" fill="#fc840c"/><rect x="360" y="232" width="8" height="8" fill="#fc780c"/><rect x="368" y="232" width="8" height="8" fill="#fc7800"/><rect x="376" y="232" width="8" height="8" fill="#fc6c00"/><rect x="384" y="232" width="16" height="8" fill="#fc6000"/><rect x="192" y="240" width="8" height="8" fill="#00fc78"/><rect x="200" y="240" width="8" height="8" fill="#0cfc6c"/><rect x="208" y="240" width="8" height="8" fill="#24fc6c"/><rect x="216" y="240" width="8" height="8" fill="#30fc6c"/><rect x="224" y="240" width="8" height="8" fill="#48fc6c"/><rect x="232" y="240" width="8" height="8" fill="#60fc6c"/><rect x="240" y="240" width="8" height="8" fill="#6cfc60"/><rect x="248" y="240" width="8" height="8" fill="#84fc60"/><rect x="256" y="240" width="8" height="8" fill="#9cfc60"/><rect x="264" y="240" width="8" height="8" fill="#b4fc54"/><rect x="272" y="240" width="8" height="8" fill="#ccfc54"/><rect x="280" y="240" width="8" height="8" fill="#e4fc54"/><rect x="288" y="240" width="8" height="8" fill="#fcfc48"/><rect x="296" y="240" width="8" height="8" fill="#fce43c"/><rect x="304" y="240" width="8" height="8" fill="#fccc3c"/><rect x="312" y="240" width="8" height="8" fill="#fcc030"/><rect x="320" y="240" width="8" height="8" fill="#fca824"/><rect x="328" y="240" width="8" height="8" fill="#fc9c24"/><rect x="336" y="240" width="8" height="8" fill="#fc9018"/><rect x="344" y="240" width="8" height="8" fill="#fc8418"/><rect x="352" y="240" width="8" height="8" fill="#fc7818"/><rect x="360" y="240" width="16" height="8" fill="#fc6c0c"/><rect x="376" y="240" width="8" height="8" fill="#fc600c"/><rect x="384" y="240" width="8" height="8" fill="#fc6000"/><rect x="392" y="240" width="16" height="8" fill="#fc5400"/><rect x="192" y="248" width="8" height="8" fill="#00fc84"/><rect x="200" y="248" width="8" height="8" fill="#18fc84"/><rect x="208" y="248" width="8" height="8" fill="#30fc78"/><rect x="216" y="248" width="8" height="8" fill="#3cfc78"/><rect x="224" y="248" width="8" height="8" fill="#54fc78"/><rect x="232" y="248" width="8" height="8" fill="#6cfc78"/><rect x="240" y="248" width="8" height="8" fill="#84fc6c"/><rect x="248" y="248" width="8" height="8" fill="#90fc6c"/><rect x="256" y="248" width="8" height="8" fill="#b4fc6c"/><rect x="264" y="248" width="8" height="8" fill="#ccfc6c"/><rect x="272" y="248" width="8" height="8" fill="#e4fc60"/><rect x="280" y="248" width="8" height="8" fill="#fcfc60"/><rect x="288" y="248" width="8" height="8" fill="#fce454"/><rect x="296" y="248" width="8" height="8" fill="#fccc48"/><rect x="304" y="248" width="8" height="8" fill="#fcc03c"/><rect x="312" y="248" width="8" height="8" fill="#fca830"/><rect x="320" y="248" width="8" height="8" fill="#fc9c30"/><rect x="328" y="248" width="8" height="8" fill="#fc9024"/><rect x="336" y="248" width="8" height="8" fill="#fc8424"/><rect x="344" y="248" width="8" height="8" fill="#fc7818"/><rect x="352" y="248" width="16" height="8" fill="#fc6c18"/><rect x="368" y="248" width="8" height="8" fill="#fc600c"/><rect x="376" y="248" width="16" height="8" fill="#fc540c"/><rect x="392" y="248" width="16" height="8" fill="#fc4800"/><rect x="408" y="248" width="16" height="8" fill="#fc3c00"/><rect x="184" y="256" width="8" height="8" fill="#00fc90"/><rect x="192" y="256" width="8" height="8" fill="#0cfc90"/><rect x="200" y="256" width="8" height="8" fill="#24fc90"/><rect x="208" y="256" width="8" height="8" fill="#30fc90"/><rect x="216" y="256" width="8" height="8" fill="#48fc84"/><rect x="224" y="256" width="8" height="8" fill="#60fc84"/><rect x="232" y="256" width="8" height="8" fill="#78fc84"/><rect x="240" y="256" width="8" height="8" fill="#90fc84"/><rect x="248" y="256" width="8" height="8" fill="#a8fc78"/><rect x="256" y="256" width="8" height="8" fill="#c0fc78"/><rect x="264" y="256" width="8" height="8" fill="#d8fc78"/><rect x="272" y="256" width="8" height="8" fill="#fcfc78"/><rect x="280" y="256" width="8" height="8" fill="#fcf06c"/><rect x="288" y="256" width="8" height="8" fill="#fcd854"/><rect x="296" y="256" width="8" height="8" fill="#fcc054"/><rect x="304" y="256" width="8" height="8" fill="#fca848"/><rect x="312" y="256" width="8" height="8" fill="#fc9c3c"/><rect x="320" y="256" width="8" height="8" fill="#fc9030"/><rect x="328" y="256" width="8" height="8" fill="#fc8430"/><rect x="336" y="256" width="8" height="8" fill="#fc7824"/><rect x="344" y="256" width="8" height="8" fill="#fc6c24"/><rect x="352" y="256" width="8" height="8" fill="#fc6c18"/><rect x="360" y="256" width="8" height="8" fill="#fc6018"/><rect x="368" y="256" width="8" height="8" fill="#fc5418"/><rect x="376" y="256" width="8" height="8" fill="#fc540c"/><rect x="384" y="256" width="16" height="8" fill="#fc480c"/><rect x="400" y="256" width="8" height="8" fill="#fc3c0c"/><rect x="408" y="256" width="16" height="8" fill="#fc3c00"/><rect x="424" y="256" width="8" height="8" fill="#fc3000"/><rect x="184" y="264" width="8" height="8" fill="#00fc9c"/><rect x="192" y="264" width="8" height="8" fill="#18fc9c"/><rect x="200" y="264" width="8" height="8" fill="#24fc9c"/><rect x="208" y="264" width="8" height="8" fill="#3cfc9c"/><rect x="216" y="264" width="8" height="8" fill="#54fc9c"/><rect x="224" y="264" width="8" height="8" fill="#6cfc9c"/><rect x="232" y="264" width="8" height="8" fill="#84fc90"/><rect x="240" y="264" width="8" height="8" fill="#9cfc90"/><rect x="248" y="264" width="8" height="8" fill="#b4fc90"/><rect x="256" y="264" width="8" height="8" fill="#d8fc90"/><rect x="264" y="264" width="8" height="8" fill="#f0fc84"/><rect x="272" y="264" width="8" height="8" fill="#fcf078"/><rect x="280" y="264" width="8" height="8" fill="#fcd86c"/><rect x="288" y="264" width="8" height="8" fill="#fcc060"/><rect x="296" y="264" width="8" height="8" fill="#fca854"/><rect x="304" y="264" width="8" height="8" fill="#fc9c48"/><rect x="312" y="264" width="8" height="8" fill="#fc903c"/><rect x="320" y="264" width="8" height="8" fill="#fc843c"/><rect x="328" y="264" width="8" height="8" fill="#fc7830"/><rect x="336" y="264" width="8" height="8" fill="#fc6c30"/><rect x="344" y="264" width="16" height="8" fill="#fc6024"/><rect x="360" y="264" width="16" height="8" fill="#fc5418"/><rect x="376" y="264" width="8" height="8" fill="#fc4818"/><rect x="384" y="264" width="8" height="8" fill="#fc480c"/><rect x="392" y="264" width="16" height="8" fill="#fc3c0c"/><rect x="408" y="264" width="8" height="8" fill="#fc300c"/><rect x="416" y="264" width="16" height="8" fill="#fc3000"/><rect x="432" y="264" width="16" height="8" fill="#fc2400"/><rect x="176" y="272" width="8" height="8" fill="#00fcb4"/><rect x="184" y="272" width="8" height="8" fill="#0cfcb4"/><rect x="192" y="272" width="8" height="8" fill="#18fcb4"/><rect x="200" y="272" width="8" height="8" fill="#30fcb4"/><rect x="208" y="272" width="8" height="8" fill="#48fca8"/><rect x="216" y="272" width="8" height="8" fill="#60fca8"/><rect x="224" y="272" width="8" height="8" fill="#78fca8"/><rect x="232" y="272" width="8" height="8" fill="#90fca8"/><rect x="240" y="272" width="8" height="8" fill="#b4fca8"/><rect x="248" y="272" width="8" height="8" fill="#ccfca8"/><rect x="256" y="272" width="8" height="8" fill="#e4fc9c"/><rect x="264" y="272" width="8" height="8" fill="#fcf09c"/><rect x="272" y="272" width="8" height="8" fill="#fcd884"/><rect x="280" y="272" width="8" height="8" fill="#fcc078"/><rect x="288" y="272" width="8" height="8" fill="#fcb460"/><rect x="296" y="272" width="8" height="8" fill="#fc9c54"/><rect x="304" y="272" width="8" height="8" fill="#fc9054"/><rect x="312" y="272" width="8" height="8" fill="#fc8448"/><rect x="320" y="272" width="8" height="8" fill="#fc783c"/><rect x="328" y="272" width="8" height="8" fill="#fc6c3c"/><rect x="336" y="272" width="16" height="8" fill="#fc6030"/><rect x="352" y="272" width="8" height="8" fill="#fc5424"/><rect x="360" y="272" width="8" height="8" fill="#fc4824"/><rect x="368" y="272" width="8" height="8" fill="#fc4818"/><rect x="376" y="272" width="16" height="8" fill="#fc3c18"/><rect x="392" y="272" width="8" height="8" fill="#fc3c0c"/><rect x="400" y="272" width="16" height="8" fill="#fc300c"/><rect x="416" y="272" width="16" height="8" fill="#fc240c"/><rect x="432" y="272" width="16" height="8" fill="#fc2400"/><rect x="448" y="272" width="16" height="8" fill="#fc1800"/><rect x="176" y="280" width="8" height="8" fill="#00fcc0"/><rect x="184" y="280" width="8" height="8" fill="#0cfcc0"/><rect x="192" y="280" width="8" height="8" fill="#24fcc0"/><rect x="200" y="280" width="8" height="8" fill="#3cfcc0"/><rect x="208" y="280" width="8" height="8" fill="#54fcc0"/><rect x="216" y="280" width="8" height="8" fill="#6cfcc0"/><rect x="224" y="280" width="8" height="8" fill="#84fcc0"/><rect x="232" y="280" width="8" height="8" fill="#a8fcc0"/><rect x="240" y="280" width="8" height="8" fill="#c0fcb4"/><rect x="248" y="280" width="8" height="8" fill="#e4fcb4"/><rect x="256" y="280" width="8" height="8" fill="#fcfcb4"/><rect x="264" y="280" width="8" height="8" fill="#fcd89c"/><rect x="272" y="280" width="8" height="8" fill="#fcc084"/><rect x="280" y="280" width="8" height="8" fill="#fcb478"/><rect x="288" y="280" width="8" height="8" fill="#fc9c6c"/><rect x="296" y="280" width="8" height="8" fill="#fc9060"/><rect x="304" y="280" width="8" height="8" fill="#fc8454"/><rect x="312" y="280" width="8" height="8" fill="#fc7848"/><rect x="320" y="280" width="8" height="8" fill="#fc6c48"/><rect x="328" y="280" width="8" height="8" fill="#fc603c"/><rect x="336" y="280" width="16" height="8" fill="#fc5430"/><rect x="352" y="280" width="8" height="8" fill="#fc4830"/><rect x="360" y="280" width="8" height="8" fill="#fc4824"/><rect x="368" y="280" width="8" height="8" fill="#fc3c24"/><rect x="376" y="280" width="8" height="8" fill="#fc3c18"/><rect x="384" y="280" width="24" height="8" fill="#fc3018"/><rect x="408" y="280" width="24" height="8" fill="#fc240c"/><rect x="432" y="280" width="8" height="8" fill="#fc180c"/><rect x="440" y="280" width="32" height="8" fill="#fc1800"/><rect x="176" y="288" width="8" height="8" fill="#00fcd8"/><rect x="184" y="288" width="8" height="8" fill="#18fcd8"/><rect x="192" y="288" width="8" height="8" fill="#30fcd8"/><rect x="200" y="288" width="8" height="8" fill="#48fcd8"/><rect x="208" y="288" width="8" height="8" fill="#60fcd8"/><rect x="216" y="288" width="8" height="8" fill="#84fcd8"/><rect x="224" y="288" width="8" height="8" fill="#9cfcd8"/><rect x="232" y="288" width="8" height="8" fill="#b4fcd8"/><rect x="240" y="288" width="8" height="8" fill="#d8fcd8"/><rect x="248" y="288" width="8" height="8" fill="#fcfccc"/><rect x="256" y="288" width="8" height="8" fill="#fce4b4"/><rect x="264" y="288" width="8" height="8" fill="#fccc9c"/><rect x="272" y="288" width="8" height="8" fill="#fcb490"/><rect x="280" y="288" width="8" height="8" fill="#fc9c84"/><rect x="288" y="288" width="8" height="8" fill="#fc906c"/><rect x="296" y="288" width="8" height="8" fill="#fc8460"/><rect x="304" y="288" width="8" height="8" fill="#fc7860"/><rect x="312" y="288" width="8" height="8" fill="#fc6c54"/><rect x="320" y="288" width="8" height="8" fill="#fc6048"/><rect x="328" y="288" width="16" height="8" fill="#fc543c"/><rect x="344" y="288" width="8" height="8" fill="#fc4830"/><rect x="352" y="288" width="16" height="8" fill="#fc3c30"/><rect x="368" y="288" width="8" height="8" fill="#fc3c24"/><rect x="376" y="288" width="8" height="8" fill="#fc3024"/><rect x="384" y="288" width="8" height="8" fill="#fc3018"/><rect x="392" y="288" width="24" height="8" fill="#fc2418"/><rect x="416" y="288" width="8" height="8" fill="#fc240c"/><rect x="424" y="288" width="32" height="8" fill="#fc180c"/><rect x="456" y="288" width="32" height="8" fill="#fc0c00"/><rect x="168" y="296" width="8" height="8" fill="#00fcf0"/><rect x="176" y="296" width="8" height="8" fill="#0cfcf0"/><rect x="184" y="296" width="8" height="8" fill="#24fcf0"/><rect x="192" y="296" width="8" height="8" fill="#3cfcf0"/><rect x="200" y="296" width="8" height="8" fill="#54fcf0"/><rect x="208" y="296" width="8" height="8" fill="#78fcf0"/><rect x="216" y="296" width="8" height="8" fill="#90fcf0"/><rect x="224" y="296" width="8" height="8" fill="#b4fcf0"/><rect x="232" y="296" width="8" height="8" fill="#ccfcf0"/><rect x="240" y="296" width="8" height="8" fill="#f0fcf0"/><rect x="248" y="296" width="8" height="8" fill="#fce4d8"/><rect x="256" y="296" width="8" height="8" fill="#fcccc0"/><rect x="264" y="296" width="8" height="8" fill="#fcb4a8"/><rect x="272" y="296" width="8" height="8" fill="#fc9c90"/><rect x="280" y="296" width="8" height="8" fill="#fc9084"/><rect x="288" y="296" width="8" height="8" fill="#fc8478"/><rect x="296" y="296" width="8" height="8" fill="#fc786c"/><rect x="304" y="296" width="8" height="8" fill="#fc6c60"/><rect x="312" y="296" width="8" height="8" fill="#fc6054"/><rect x="320" y="296" width="8" height="8" fill="#fc5448"/><rect x="328" y="296" width="8" height="8" fill="#fc4848"/><rect x="336" y="296" width="8" height="8" fill="#fc483c"/><rect x="344" y="296" width="8" height="8" fill="#fc3c3c"/><rect x="352" y="296" width="8" height="8" fill="#fc3c30"/><rect x="360" y="296" width="8" height="8" fill="#fc3030"/><rect x="368" y="296" width="16" height="8" fill="#fc3024"/><rect x="384" y="296" width="8" height="8" fill="#fc2424"/><rect x="392" y="296" width="16" height="8" fill="#fc2418"/><rect x="408" y="296" width="16" height="8" fill="#fc1818"/><rect x="424" y="296" width="16" height="8" fill="#fc180c"/><rect x="440" y="296" width="24" height="8" fill="#fc0c0c"/><rect x="464" y="296" width="16" height="8" fill="#fc0c00"/><rect x="480" y="296" width="24" height="8" fill="#fc0000"/><rect x="168" y="304" width="8" height="8" fill="#00f0fc"/><rect x="176" y="304" width="8" height="8" fill="#18f0fc"/><rect x="184" y="304" width="8" height="8" fill="#30f0fc"/><rect x="192" y="304" width="8" height="8" fill="#48f0fc"/><rect x="200" y="304" width="8" height="8" fill="#60f0fc"/><rect x="208" y="304" width="8" height="8" fill="#84f0fc"/><rect x="216" y="304" width="8" height="8" fill="#9cf0fc"/><rect x="224" y="304" width="8" height="8" fill="#c0f0fc"/><rect x="232" y="304" width="8" height="8" fill="#e4f0fc"/><rect x="240" y="304" width="8" height="8" fill="#fcf0fc"/><rect x="248" y="304" width="8" height="8" fill="#fcccd8"/><rect x="256" y="304" width="8" height="8" fill="#fcb4c0"/><rect x="264" y="304" width="8" height="8" fill="#fc9ca8"/><rect x="272" y="304" width="8" height="8" fill="#fc909c"/><rect x="280" y="304" width="8" height="8" fill="#fc8484"/><rect x="288" y="304" width="8" height="8" fill="#fc6c78"/><rect x="296" y="304" width="8" height="8" fill="#fc606c"/><rect x="304" y="304" width="8" height="8" fill="#fc6060"/><rect x="312" y="304" width="8" height="8" fill="#fc5460"/><rect x="320" y="304" width="8" height="8" fill="#fc4854"/><rect x="328" y="304" width="8" height="8" fill="#fc4848"/><rect x="336" y="304" width="8" height="8" fill="#fc3c48"/><rect x="344" y="304" width="8" height="8" fill="#fc3c3c"/><rect x="352" y="304" width="8" height="8" fill="#fc303c"/><rect x="360" y="304" width="8" height="8" fill="#fc3030"/><rect x="368" y="304" width="8" height="8" fill="#fc2430"/><rect x="376" y="304" width="16" height="8" fill="#fc2424"/><rect x="392" y="304" width="8" height="8" fill="#fc1824"/><rect x="400" y="304" width="24" height="8" fill="#fc1818"/><rect x="424" y="304" width="8" height="8" fill="#fc0c18"/><rect x="432" y="304" width="32" height="8" fill="#fc0c0c"/><rect x="464" y="304" width="16" height="8" fill="#fc000c"/><rect x="480" y="304" width="16" height="8" fill="#fc0000"/><rect x="168" y="312" width="8" height="8" fill="#00d8fc"/><rect x="176" y="312" width="8" height="8" fill="#18d8fc"/><rect x="184" y="312" width="8" height="8" fill="#30d8fc"/><rect x="192" y="312" width="8" height="8" fill="#48d8fc"/><rect x="200" y="312" width="8" height="8" fill="#6cd8fc"/><rect x="208" y="312" width="8" height="8" fill="#84d8fc"/><rect x="216" y="312" width="8" height="8" fill="#9cd8fc"/><rect x="224" y="312" width="8" height="8" fill="#c0d8fc"/><rect x="232" y="312" width="8" height="8" fill="#e4d8fc"/><rect x="240" y="312" width="8" height="8" fill="#fcd8fc"/><rect x="248" y="312" width="8" height="8" fill="#fcb4e4"/><rect x="256" y="312" width="8" height="8" fill="#fc9cc0"/><rect x="264" y="312" width="8" height="8" fill="#fc90b4"/><rect x="272" y="312" width="8" height="8" fill="#fc789c"/><rect x="280" y="312" width="8" height="8" fill="#fc6c90"/><rect x="288" y="312" width="8" height="8" fill="#fc6084"/><rect x="296" y="312" width="8" height="8" fill="#fc5478"/><rect x="304" y="312" width="8" height="8" fill="#fc546c"/><rect x="312" y="312" width="8" height="8" fill="#fc4860"/><rect x="320" y="312" width="16" height="8" fill="#fc3c54"/><rect x="336" y="312" width="8" height="8" fill="#fc3048"/><rect x="344" y="312" width="8" height="8" fill="#fc303c"/><rect x="352" y="312" width="16" height="8" fill="#fc243c"/><rect x="368" y="312" width="8" height="8" fill="#fc2430"/><rect x="376" y="312" width="8" height="8" fill="#fc1830"/><rect x="384" y="312" width="24" height="8" fill="#fc1824"/><rect x="408" y="312" width="40" height="8" fill="#fc0c18"/><rect x="448" y="312" width="32" height="8" fill="#fc000c"/><rect x="160" y="320" width="8" height="8" fill="#00ccfc"/><rect x="168" y="320" width="8" height="8" fill="#0cccfc"/><rect x="176" y="320" width="8" height="8" fill="#24c0fc"/><rect x="184" y="320" width="8" height="8" fill="#3cc0fc"/><rect x="192" y="320" width="8" height="8" fill="#54c0fc"/><rect x="200" y="320" width="8" height="8" fill="#6cc0fc"/><rect x="208" y="320" width="8" height="8" fill="#84c0fc"/><rect x="216" y="320" width="8" height="8" fill="#9cc0fc"/><rect x="224" y="320" width="8" height="8" fill="#c0c0fc"/><rect x="232" y="320" width="8" height="8" fill="#d8c0fc"/><rect x="240" y="320" width="8" height="8" fill="#fcb4fc"/><rect x="248" y="320" width="8" height="8" fill="#fc9ce4"/><rect x="256" y="320" width="8" height="8" fill="#fc90cc"/><rect x="264" y="320" width="8" height="8" fill="#fc78b4"/><rect x="272" y="320" width="8" height="8" fill="#fc6c9c"/><rect x="280" y="320" width="8" height="8" fill="#fc6090"/><rect x="288" y="320" width="8" height="8" fill="#fc5484"/><rect x="296" y="320" width="8" height="8" fill="#fc4878"/><rect x="304" y="320" width="8" height="8" fill="#fc486c"/><rect x="312" y="320" width="16" height="8" fill="#fc3c60"/><rect x="328" y="320" width="8" height="8" fill="#fc3054"/><rect x="336" y="320" width="8" height="8" fill="#fc3048"/><rect x="344" y="320" width="8" height="8" fill="#fc2448"/><rect x="352" y="320" width="16" height="8" fill="#fc243c"/><rect x="368" y="320" width="24" height="8" fill="#fc1830"/><rect x="392" y="320" width="24" height="8" fill="#fc0c24"/><rect x="416" y="320" width="8" height="8" fill="#fc0c18"/><rect x="424" y="320" width="32" height="8" fill="#fc0018"/><rect x="456" y="320" width="8" height="8" fill="#fc000c"/><rect x="160" y="328" width="8" height="8" fill="#00b4fc"/><rect x="168" y="328" width="8" height="8" fill="#18b4fc"/><rect x="176" y="328" width="8" height="8" fill="#24b4fc"/><rect x="184" y="328" width="8" height="8" fill="#3cb4fc"/><rect x="192" y="328" width="8" height="8" fill="#54a8fc"/><rect x="200" y="328" width="8" height="8" fill="#6ca8fc"/><rect x="208" y="328" width="8" height="8" fill="#84a8fc"/><rect x="216" y="328" width="8" height="8" fill="#a8a8fc"/><rect x="224" y="328" width="8" height="8" fill="#c0a8fc"/><rect x="232" y="328" width="8" height="8" fill="#d8a8fc"/><rect x="240" y="328" width="8" height="8" fill="#fc9cfc"/><rect x="248" y="328" width="8" height="8" fill="#fc90e4"/><rect x="256" y="328" width="8" height="8" fill="#fc78cc"/><rect x="264" y="328" width="8" height="8" fill="#fc6cb4"/><rect x="272" y="328" width="8" height="8" fill="#fc60a8"/><rect x="280" y="328" width="8" height="8" fill="#fc5490"/><rect x="288" y="328" width="8" height="8" fill="#fc4884"/><rect x="296" y="328" width="8" height="8" fill="#fc4878"/><rect x="304" y="328" width="8" height="8" fill="#fc3c6c"/><rect x="312" y="328" width="8" height="8" fill="#fc306c"/><rect x="320" y="328" width="8" height="8" fill="#fc3060"/><rect x="328" y="328" width="16" height="8" fill="#fc2454"/><rect x="344" y="328" width="8" height="8" fill="#fc2448"/><rect x="352" y="328" width="8" height="8" fill="#fc1848"/><rect x="360" y="328" width="16" height="8" fill="#fc183c"/><rect x="376" y="328" width="24" height="8" fill="#fc0c30"/><rect x="400" y="328" width="8" height="8" fill="#fc0c24"/><rect x="408" y="328" width="16" height="8" fill="#fc0024"/><rect x="424" y="328" width="16" height="8" fill="#fc0018"/><rect x="160" y="336" width="8" height="8" fill="#00a8fc"/><rect x="168" y="336" width="8" height="8" fill="#189cfc"/><rect x="176" y="336" width="8" height="8" fill="#309cfc"/><rect x="184" y="336" width="8" height="8" fill="#489cfc"/><rect x="192" y="336" width="8" height="8" fill="#609cfc"/><rect x="200" y="336" width="8" height="8" fill="#789cfc"/><rect x="208" y="336" width="8" height="8" fill="#9090fc"/><rect x="216" y="336" width="8" height="8" fill="#a890fc"/><rect x="224" y="336" width="8" height="8" fill="#c090fc"/><rect x="232" y="336" width="8" height="8" fill="#d890fc"/><rect x="240" y="336" width="8" height="8" fill="#fc90fc"/><rect x="248" y="336" width="8" height="8" fill="#fc78e4"/><rect x="256" y="336" width="8" height="8" fill="#fc6ccc"/><rect x="264" y="336" width="8" height="8" fill="#fc60b4"/><rect x="272" y="336" width="8" height="8" fill="#fc54a8"/><rect x="280" y="336" width="8" height="8" fill="#fc489c"/><rect x="288" y="336" width="8" height="8" fill="#fc3c90"/><rect x="296" y="336" width="8" height="8" fill="#fc3c84"/><rect x="304" y="336" width="8" height="8" fill="#fc3078"/><rect x="312" y="336" width="8" height="8" fill="#fc306c"/><rect x="320" y="336" width="16" height="8" fill="#fc2460"/><rect x="336" y="336" width="8" height="8" fill="#fc1854"/><rect x="344" y="336" width="16" height="8" fill="#fc1848"/><rect x="360" y="336" width="24" height="8" fill="#fc0c3c"/><rect x="384" y="336" width="8" height="8" fill="#fc0c30"/><rect x="392" y="336" width="16" height="8" fill="#fc0030"/><rect x="408" y="336" width="16" height="8" fill="#fc0024"/><rect x="152" y="344" width="8" height="8" fill="#0090fc"/><rect x="160" y="344" width="8" height="8" fill="#0c90fc"/><rect x="168" y="344" width="8" height="8" fill="#2490fc"/><rect x="176" y="344" width="8" height="8" fill="#3090fc"/><rect x="184" y="344" width="8" height="8" fill="#4890fc"/><rect x="192" y="344" width="8" height="8" fill="#6084fc"/><rect x="200" y="344" width="8" height="8" fill="#7884fc"/><rect x="208" y="344" width="8" height="8" fill="#9084fc"/><rect x="216" y="344" width="8" height="8" fill="#a884fc"/><rect x="224" y="344" width="8" height="8" fill="#c078fc"/><rect x="232" y="344" width="8" height="8" fill="#d878fc"/><rect x="240" y="344" width="8" height="8" fill="#fc78fc"/><rect x="248" y="344" width="8" height="8" fill="#fc6ce4"/><rect x="256" y="344" width="8" height="8" fill="#fc60cc"/><rect x="264" y="344" width="8" height="8" fill="#fc54c0"/><rect x="272" y="344" width="8" height="8" fill="#fc48a8"/><rect x="280" y="344" width="8" height="8" fill="#fc3c9c"/><rect x="288" y="344" width="8" height="8" fill="#fc3090"/><rect x="296" y="344" width="8" height="8" fill="#fc3084"/><rect x="304" y="344" width="8" height="8" fill="#fc2478"/><rect x="312" y="344" width="8" height="8" fill="#fc246c"/><rect x="320" y="344" width="16" height="8" fill="#fc1860"/><rect x="336" y="344" width="8" height="8" fill="#fc1854"/><rect x="344" y="344" width="8" height="8" fill="#fc0c54"/><rect x="352" y="344" width="16" height="8" fill="#fc0c48"/><rect x="368" y="344" width="8" height="8" fill="#fc0c3c"/><rect x="376" y="344" width="16" height="8" fill="#fc003c"/><rect x="392" y="344" width="16" height="8" fill="#fc0030"/><rect x="152" y="352" width="8" height="8" fill="#0084fc"/><rect x="160" y="352" width="8" height="8" fill="#1884fc"/><rect x="168" y="352" width="8" height="8" fill="#2484fc"/><rect x="176" y="352" width="8" height="8" fill="#3c78fc"/><rect x="184" y="352" width="8" height="8" fill="#4878fc"/><rect x="192" y="352" width="8" height="8" fill="#6078fc"/><rect x="200" y="352" width="8" height="8" fill="#7878fc"/><rect x="208" y="352" width="8" height="8" fill="#906cfc"/><rect x="216" y="352" width="8" height="8" fill="#a86cfc"/><rect x="224" y="352" width="8" height="8" fill="#c06cfc"/><rect x="232" y="352" width="8" height="8" fill="#d86cfc"/><rect x="240" y="352" width="8" height="8" fill="#fc60fc"/><rect x="248" y="352" width="8" height="8" fill="#fc54f0"/><rect x="256" y="352" width="8" height="8" fill="#fc48d8"/><rect x="264" y="352" width="8" height="8" fill="#fc3cc0"/><rect x="272" y="352" width="8" height="8" fill="#fc3cb4"/><rect x="280" y="352" width="8" height="8" fill="#fc309c"/><rect x="288" y="352" width="8" height="8" fill="#fc2490"/><rect x="296" y="352" width="8" height="8" fill="#fc2484"/><rect x="304" y="352" width="8" height="8" fill="#fc1878"/><rect x="312" y="352" width="16" height="8" fill="#fc186c"/><rect x="328" y="352" width="16" height="8" fill="#fc0c60"/><rect x="344" y="352" width="8" height="8" fill="#fc0c54"/><rect x="352" y="352" width="8" height="8" fill="#fc0c48"/><rect x="360" y="352" width="16" height="8" fill="#fc0048"/><rect x="376" y="352" width="8" height="8" fill="#fc003c"/><rect x="144" y="360" width="8" height="8" fill="#0078fc"/><rect x="152" y="360" width="8" height="8" fill="#0c78fc"/><rect x="160" y="360" width="8" height="8" fill="#186cfc"/><rect x="168" y="360" width="8" height="8" fill="#306cfc"/><rect x="176" y="360" width="8" height="8" fill="#3c6cfc"/><rect x="184" y="360" width="8" height="8" fill="#546cfc"/><rect x="192" y="360" width="8" height="8" fill="#6c6cfc"/><rect x="200" y="360" width="8" height="8" fill="#7860fc"/><rect x="208" y="360" width="8" height="8" fill="#9060fc"/><rect x="216" y="360" width="8" height="8" fill="#a860fc"/><rect x="224" y="360" width="8" height="8" fill="#c054fc"/><rect x="232" y="360" width="8" height="8" fill="#d854fc"/><rect x="240" y="360" width="8" height="8" fill="#fc54fc"/><rect x="248" y="360" width="8" height="8" fill="#fc48f0"/><rect x="256" y="360" width="8" height="8" fill="#fc3cd8"/><rect x="264" y="360" width="8" height="8" fill="#fc30c0"/><rect x="272" y="360" width="8" height="8" fill="#fc30b4"/><rect x="280" y="360" width="8" height="8" fill="#fc24a8"/><rect x="288" y="360" width="8" height="8" fill="#fc2490"/><rect x="296" y="360" width="16" height="8" fill="#fc1884"/><rect x="312" y="360" width="8" height="8" fill="#fc0c78"/><rect x="320" y="360" width="8" height="8" fill="#fc0c6c"/><rect x="328" y="360" width="8" height="8" fill="#fc0c60"/><rect x="336" y="360" width="8" height="8" fill="#fc0060"/><rect x="344" y="360" width="16" height="8" fill="#fc0054"/><rect x="360" y="360" width="8" height="8" fill="#fc0048"/><rect x="144" y="368" width="8" height="8" fill="#006cfc"/><rect x="152" y="368" width="8" height="8" fill="#0c6cfc"/><rect x="160" y="368" width="8" height="8" fill="#1860fc"/><rect x="168" y="368" width="8" height="8" fill="#3060fc"/><rect x="176" y="368" width="8" height="8" fill="#4860fc"/><rect x="184" y="368" width="8" height="8" fill="#5460fc"/><rect x="192" y="368" width="8" height="8" fill="#6c54fc"/><rect x="200" y="368" width="8" height="8" fill="#8454fc"/><rect x="208" y="368" width="8" height="8" fill="#9054fc"/><rect x="216" y="368" width="8" height="8" fill="#a848fc"/><rect x="224" y="368" width="8" height="8" fill="#c048fc"/><rect x="232" y="368" width="8" height="8" fill="#d848fc"/><rect x="240" y="368" width="8" height="8" fill="#f03cfc"/><rect x="248" y="368" width="8" height="8" fill="#fc3cf0"/><rect x="256" y="368" width="8" height="8" fill="#fc30d8"/><rect x="264" y="368" width="8" height="8" fill="#fc24c0"/><rect x="272" y="368" width="8" height="8" fill="#fc24b4"/><rect x="280" y="368" width="8" height="8" fill="#fc18a8"/><rect x="288" y="368" width="8" height="8" fill="#fc189c"/><rect x="296" y="368" width="8" height="8" fill="#fc0c90"/><rect x="304" y="368" width="8" height="8" fill="#fc0c84"/><rect x="312" y="368" width="8" height="8" fill="#fc0c78"/><rect x="320" y="368" width="16" height="8" fill="#fc006c"/><rect x="336" y="368" width="8" height="8" fill="#fc0060"/><rect x="144" y="376" width="8" height="8" fill="#0060fc"/><rect x="152" y="376" width="8" height="8" fill="#0c54fc"/><rect x="160" y="376" width="8" height="8" fill="#2454fc"/><rect x="168" y="376" width="8" height="8" fill="#3054fc"/><rect x="176" y="376" width="8" height="8" fill="#4854fc"/><rect x="184" y="376" width="8" height="8" fill="#5448fc"/><rect x="192" y="376" width="8" height="8" fill="#6c48fc"/><rect x="200" y="376" width="8" height="8" fill="#8448fc"/><rect x="208" y="376" width="8" height="8" fill="#9c3cfc"/><rect x="216" y="376" width="8" height="8" fill="#a83cfc"/><rect x="224" y="376" width="8" height="8" fill="#c03cfc"/><rect x="232" y="376" width="8" height="8" fill="#d83cfc"/><rect x="240" y="376" width="8" height="8" fill="#f030fc"/><rect x="248" y="376" width="8" height="8" fill="#fc30f0"/><rect x="256" y="376" width="8" height="8" fill="#fc24d8"/><rect x="264" y="376" width="8" height="8" fill="#fc18cc"/><rect x="272" y="376" width="8" height="8" fill="#fc18b4"/><rect x="280" y="376" width="8" height="8" fill="#fc0ca8"/><rect x="288" y="376" width="8" height="8" fill="#fc0c9c"/><rect x="296" y="376" width="8" height="8" fill="#fc0c90"/><rect x="304" y="376" width="8" height="8" fill="#fc0084"/><rect x="312" y="376" width="16" height="8" fill="#fc0078"/><rect x="136" y="384" width="8" height="8" fill="#0054fc"/><rect x="144" y="384" width="8" height="8" fill="#0c54fc"/><rect x="152" y="384" width="8" height="8" fill="#1848fc"/><rect x="160" y="384" width="8" height="8" fill="#2448fc"/><rect x="168" y="384" width="8" height="8" fill="#3c48fc"/><rect x="176" y="384" width="8" height="8" fill="#4848fc"/><rect x="184" y="384" width="8" height="8" fill="#603cfc"/><rect x="192" y="384" width="8" height="8" fill="#6c3cfc"/><rect x="200" y="384" width="8" height="8" fill="#843cfc"/><rect x="208" y="384" width="8" height="8" fill="#9c30fc"/><rect x="216" y="384" width="8" height="8" fill="#a830fc"/><rect x="224" y="384" width="8" height="8" fill="#c030fc"/><rect x="232" y="384" width="8" height="8" fill="#d824fc"/><rect x="240" y="384" width="8" height="8" fill="#f024fc"/><rect x="248" y="384" width="8" height="8" fill="#fc18f0"/><rect x="256" y="384" width="8" height="8" fill="#fc18d8"/><rect x="264" y="384" width="8" height="8" fill="#fc0ccc"/><rect x="272" y="384" width="8" height="8" fill="#fc0cc0"/><rect x="280" y="384" width="8" height="8" fill="#fc0ca8"/><rect x="288" y="384" width="8" height="8" fill="#fc009c"/><rect x="296" y="384" width="8" height="8" fill="#fc0090"/><rect x="304" y="384" width="8" height="8" fill="#fc0084"/><rect x="136" y="392" width="8" height="8" fill="#0048fc"/><rect x="144" y="392" width="8" height="8" fill="#0c48fc"/><rect x="152" y="392" width="8" height="8" fill="#183cfc"/><rect x="160" y="392" width="8" height="8" fill="#303cfc"/><rect x="168" y="392" width="8" height="8" fill="#3c3cfc"/><rect x="176" y="392" width="8" height="8" fill="#543cfc"/><rect x="184" y="392" width="8" height="8" fill="#6030fc"/><rect x="192" y="392" width="8" height="8" fill="#7830fc"/><rect x="200" y="392" width="8" height="8" fill="#8430fc"/><rect x="208" y="392" width="8" height="8" fill="#9c24fc"/><rect x="216" y="392" width="8" height="8" fill="#b424fc"/><rect x="224" y="392" width="8" height="8" fill="#c024fc"/><rect x="232" y="392" width="8" height="8" fill="#d818fc"/><rect x="240" y="392" width="8" height="8" fill="#f018fc"/><rect x="248" y="392" width="8" height="8" fill="#fc0cf0"/><rect x="256" y="392" width="8" height="8" fill="#fc0ce4"/><rect x="264" y="392" width="8" height="8" fill="#fc0ccc"/><rect x="272" y="392" width="8" height="8" fill="#fc00c0"/><rect x="280" y="392" width="8" height="8" fill="#fc00b4"/><rect x="136" y="400" width="8" height="8" fill="#003cfc"/><rect x="144" y="400" width="8" height="8" fill="#0c3cfc"/><rect x="152" y="400" width="8" height="8" fill="#2430fc"/><rect x="160" y="400" width="8" height="8" fill="#3030fc"/><rect x="168" y="400" width="8" height="8" fill="#3c30fc"/><rect x="176" y="400" width="8" height="8" fill="#5430fc"/><rect x="184" y="400" width="8" height="8" fill="#6024fc"/><rect x="192" y="400" width="8" height="8" fill="#7824fc"/><rect x="200" y="400" width="8" height="8" fill="#8424fc"/><rect x="208" y="400" width="8" height="8" fill="#9c18fc"/><rect x="216" y="400" width="8" height="8" fill="#b418fc"/><rect x="224" y="400" width="8" height="8" fill="#c018fc"/><rect x="232" y="400" width="8" height="8" fill="#d80cfc"/><rect x="240" y="400" width="8" height="8" fill="#f00cfc"/><rect x="248" y="400" width="8" height="8" fill="#fc00fc"/><rect x="256" y="400" width="8" height="8" fill="#fc00e4"/><rect x="264" y="400" width="8" height="8" fill="#fc00cc"/><rect x="128" y="408" width="8" height="8" fill="#0030fc"/><rect x="136" y="408" width="8" height="8" fill="#0c30fc"/><rect x="144" y="408" width="8" height="8" fill="#1830fc"/><rect x="152" y="408" width="8" height="8" fill="#2430fc"/><rect x="160" y="408" width="8" height="8" fill="#3024fc"/><rect x="168" y="408" width="8" height="8" fill="#4824fc"/><rect x="176" y="408" width="8" height="8" fill="#5424fc"/><rect x="184" y="408" width="8" height="8" fill="#6c18fc"/><rect x="192" y="408" width="8" height="8" fill="#7818fc"/><rect x="200" y="408" width="8" height="8" fill="#9018fc"/><rect x="208" y="408" width="8" height="8" fill="#9c0cfc"/><rect x="216" y="408" width="8" height="8" fill="#b40cfc"/><rect x="224" y="408" width="8" height="8" fill="#c00cfc"/><rect x="232" y="408" width="8" height="8" fill="#d800fc"/><rect x="240" y="408" width="8" height="8" fill="#f000fc"/><rect x="248" y="408" width="8" height="8" fill="#fc00fc"/><rect x="128" y="416" width="8" height="8" fill="#0024fc"/><rect x="136" y="416" width="8" height="8" fill="#0c24fc"/><rect x="144" y="416" width="8" height="8" fill="#1824fc"/><rect x="152" y="416" width="8" height="8" fill="#2424fc"/><rect x="160" y="416" width="8" height="8" fill="#3c18fc"/><rect x="168" y="416" width="8" height="8" fill="#4818fc"/><rect x="176" y="416" width="8" height="8" fill="#5418fc"/><rect x="184" y="416" width="8" height="8" fill="#6c0cfc"/><rect x="192" y="416" width="8" height="8" fill="#780cfc"/><rect x="200" y="416" width="8" height="8" fill="#900cfc"/><rect x="208" y="416" width="8" height="8" fill="#9c00fc"/><rect x="216" y="416" width="8" height="8" fill="#b400fc"/><rect x="224" y="416" width="8" height="8" fill="#c000fc"/><rect x="128" y="424" width="8" height="8" fill="#0024fc"/><rect x="136" y="424" width="8" height="8" fill="#0c18fc"/><rect x="144" y="424" width="8" height="8" fill="#2418fc"/><rect x="152" y="424" width="8" height="8" fill="#3018fc"/><rect x="160" y="424" width="8" height="8" fill="#3c18fc"/><rect x="168" y="424" width="8" height="8" fill="#480cfc"/><rect x="176" y="424" width="8" height="8" fill="#600cfc"/><rect x="184" y="424" width="8" height="8" fill="#6c0cfc"/><rect x="192" y="424" width="8" height="8" fill="#7800fc"/><rect x="200" y="424" width="8" height="8" fill="#9000fc"/><rect x="208" y="424" width="8" height="8" fill="#9c00fc"/><rect x="120" y="432" width="8" height="8" fill="#0018fc"/><rect x="128" y="432" width="8" height="8" fill="#0c18fc"/><rect x="136" y="432" width="8" height="8" fill="#1818fc"/><rect x="144" y="432" width="8" height="8" fill="#240cfc"/><rect x="152" y="432" width="8" height="8" fill="#300cfc"/><rect x="160" y="432" width="8" height="8" fill="#3c0cfc"/><rect x="168" y="432" width="8" height="8" fill="#5400fc"/><rect x="176" y="432" width="8" height="8" fill="#6000fc"/><rect x="184" y="432" width="8" height="8" fill="#6c00fc"/><rect x="192" y="432" width="8" height="8" fill="#8400fc"/><rect x="120" y="440" width="8" height="8" fill="#000cfc"/><rect x="128" y="440" width="8" height="8" fill="#0c0cfc"/><rect x="136" y="440" width="8" height="8" fill="#180cfc"/><rect x="144" y="440" width="8" height="8" fill="#240cfc"/><rect x="152" y="440" width="8" height="8" fill="#3000fc"/><rect x="160" y="440" width="8" height="8" fill="#4800fc"/><rect x="168" y="440" width="8" height="8" fill="#5400fc"/><rect x="112" y="448" width="16" height="8" fill="#000cfc"/><rect x="128" y="448" width="8" height="8" fill="#0c0cfc"/><rect x="136" y="448" width="8" height="8" fill="#1800fc"/><rect x="144" y="448" width="8" height="8" fill="#3000fc"/><rect x="152" y="448" width="8" height="8" fill="#3c00fc"/><rect x="112" y="456" width="8" height="8" fill="#0000fc"/><rect x="120" y="456" width="8" height="8" fill="#0c00fc"/><rect x="128" y="456" width="8" height="8" fill="#1800fc"/><rect x="112" y="464" width="8" height="8" fill="#0000fc"/></g></svg><svg style="position:absolute;left:1509px;top:85px" width="189" height="146"><defs><clipPath id="fbc1509"><path d="M39.6 420.3 L39.6 420.3 L39.5 420.3 L39.5 420.4 L39.4 420.4 L39.3 420.4 L39.3 420.4 L39.2 420.4 L39.1 420.5 L39.0 420.5 L38.9 420.5 L38.8 420.5 L38.7 420.5 L38.6 420.5 L38.5 420.6 L38.4 420.6 L38.3 420.6 L38.2 420.6 L38.0 420.6 L37.9 420.6 L37.8 420.6 L37.7 420.6 L37.5 420.6 L37.3 420.6 L37.1 420.6 L36.9 420.6 L36.7 420.5 L36.5 420.5 L36.2 420.4 L35.9 420.4 L35.7 420.3 L35.4 420.3 L35.2 420.2 L35.0 420.1 L34.7 420.0 L34.5 419.9 L34.3 419.8 L34.1 419.7 L33.9 419.6 L33.6 419.4 L33.4 419.3 L33.1 419.1 L32.9 419.0 L32.6 418.8 L32.4 418.6 L32.1 418.5 L31.8 418.3 L31.5 418.1 L31.1 417.8 L30.8 417.6 L30.4 417.4 L30.0 417.1 L29.6 416.8 L29.2 416.5 L28.8 416.2 L28.3 415.9 L27.9 415.6 L27.4 415.3 L26.9 414.9 L26.4 414.6 L26.0 414.2 L25.4 413.8 L24.9 413.4 L24.4 413.0 L23.8 412.6 L23.2 412.2 L22.6 411.7 L21.9 411.3 L21.3 410.8 L20.6 410.4 L19.9 409.9 L19.2 409.3 L18.4 408.8 L17.6 408.2 L16.8 407.6 L15.9 407.0 L15.0 406.4 L14.0 405.8 L13.1 405.1 L12.1 404.4 L11.1 403.7 L10.0 403.0 L9.0 402.2 L7.9 401.5 L6.8 400.7 L5.6 399.9 L4.4 399.0 L3.2 398.1 L2.0 397.1 L0.7 396.2 L-0.7 395.1 L-2.1 394.1 L-3.5 393.0 L-4.9 391.8 L-6.4 390.6 L-7.9 389.3 L-9.4 388.0 L-11.0 386.6 L-12.6 385.2 L-14.3 383.7 L-15.9 382.2 L-17.6 380.6 L-19.5 378.8 L-21.3 376.8 L-23.3 374.6 L-25.4 372.3 L-27.5 369.8 L-29.7 367.2 L-32.0 364.5 L-34.3 361.5 L-36.8 358.3 L-39.3 354.9 L-41.9 351.2 L-44.5 347.3 L-47.3 343.2 L-50.1 339.0 L-53.0 334.5 L-56.0 329.7 L-59.0 324.6 L-62.2 319.1 L-65.5 313.2 L-68.9 307.0 L-72.4 300.4 L-75.9 293.6 L-79.6 286.4 L-83.4 278.7 L-87.2 270.7 L-91.2 262.2 L-95.3 253.1 L-99.6 243.6 L-104.0 233.7 L-108.6 223.3 L-113.2 212.6 L-117.9 201.3 L-122.7 189.4 L-127.4 177.0 L-132.1 164.1 L-136.8 150.5 L-141.6 136.3 L-146.4 121.6 L-151.2 106.4 L-156.0 90.7 L-160.7 74.4 L-165.5 57.7 L-170.1 40.6 L-174.7 22.9 L-179.4 4.5 L-184.1 -14.5 L-188.8 -33.9 L-193.3 -53.6 L-197.7 -73.5 L-201.9 -93.5 L-205.8 -113.5 L-209.5 -133.7 L-213.2 -154.2 L-216.7 -175.0 L-220.0 -195.9 L-223.2 -216.8 L-226.0 -237.6 L-228.5 -258.1 L-230.7 -278.1 L-232.6 -297.9 L-234.3 -317.7 L-235.7 -337.4 L-236.8 -356.8 L-237.6 -375.9 L-238.0 -394.6 L-238.1 -412.9 L-237.7 -430.5 L-237.0 -447.8 L-235.9 -464.7 L-234.4 -481.3 L-232.6 -497.5 L-230.4 -513.0 L-227.8 -528.0 L-224.8 -542.1 L-221.4 -555.5 L-217.6 -568.0 L-213.4 -580.0 L-208.7 -591.3 L-203.6 -601.9 L-198.3 -611.8 L-192.6 -620.9 L-186.8 -629.1 L-180.7 -636.4 L-174.3 -642.7 L-167.6 -648.1 L-160.6 -652.6 L-153.4 -656.3 L-145.9 -659.3 L-138.3 -661.7 L-130.7 -663.6 L-123.0 -664.9 L-115.2 -665.6 L-107.3 -665.5 L-99.2 -664.7 L-91.0 -663.4 L-82.8 -661.6 L-74.5 -659.5 L-66.2 -657.3 L-58.0 -655.0 L-49.8 -652.5 L-41.5 -649.6 L-33.2 -646.4 L-24.8 -643.0 L-16.5 -639.5 L-8.3 -635.8 L-0.1 -632.1 L8.0 -628.4 L16.0 -624.7 L23.9 -620.9 L31.7 -617.0 L39.5 -613.1 L47.2 -609.0 L54.9 -604.9 L62.6 -600.8 L70.2 -596.6 L77.8 -592.3 L85.4 -588.0 L92.9 -583.6 L100.3 -579.2 L107.8 -574.7 L115.2 -570.1 L122.6 -565.5 L130.0 -560.8 L137.4 -556.1 L144.8 -551.3 L152.2 -546.5 L159.6 -541.6 L167.0 -536.6 L174.3 -531.6 L181.7 -526.6 L189.0 -521.5 L196.3 -516.4 L203.6 -511.3 L210.9 -506.1 L218.2 -500.9 L225.5 -495.6 L232.8 -490.3 L240.0 -485.0 L247.3 -479.6 L254.6 -474.3 L261.9 -468.9 L269.1 -463.4 L276.4 -458.0 L283.7 -452.5 L290.9 -447.0 L298.2 -441.4 L305.5 -435.9 L312.8 -430.3 L320.1 -424.7 L327.4 -419.1 L334.7 -413.5 L342.0 -407.9 L349.3 -402.2 L356.5 -396.5 L363.8 -390.9 L371.1 -385.2 L378.4 -379.5 L385.6 -373.8 L392.9 -368.1 L400.1 -362.3 L407.4 -356.6 L414.6 -350.9 L421.8 -345.2 L429.1 -339.4 L436.3 -333.7 L443.5 -328.0 L450.8 -322.3 L458.0 -316.6 L465.2 -310.9 L472.4 -305.1 L479.5 -299.5 L486.6 -293.8 L493.8 -288.1 L500.9 -282.4 L508.0 -276.8 L515.0 -271.1 L522.0 -265.5 L529.1 -259.9 L536.0 -254.3 L543.0 -248.7 L549.9 -243.2 L556.8 -237.6 L563.7 -232.1 L570.6 -226.6 L577.4 -221.1 L584.2 -215.7 L591.0 -210.3 L597.7 -204.9 L604.3 -199.6 L611.0 -194.2 L617.6 -188.9 L624.2 -183.7 L630.7 -178.4 L637.2 -173.3 L643.6 -168.1 L649.9 -163.0 L656.3 -158.0 L662.6 -153.0 L668.8 -148.0 L675.0 -143.1 L681.1 -138.2 L687.1 -133.4 L693.1 -128.6 L699.0 -123.9 L704.8 -119.2 L710.6 -114.5 L716.3 -109.9 L721.9 -105.4 L727.5 -101.0 L732.9 -96.6 L738.2 -92.3 L743.5 -88.1 L748.6 -84.0 L753.6 -80.0 L758.5 -76.1 L763.4 -72.2 L768.2 -68.4 L772.9 -64.6 L777.5 -60.9 L782.1 -57.2 L786.6 -53.6 L791.1 -50.0 L795.4 -46.5 L799.7 -43.1 L803.9 -39.7 L808.0 -36.5 L812.0 -33.3 L815.9 -30.2 L819.8 -27.1 L823.5 -24.2 L827.1 -21.3 L830.6 -18.5 L834.1 -15.8 L837.4 -13.1 L840.7 -10.5 L843.9 -7.9 L847.0 -5.4 L850.1 -3.0 L853.0 -0.6 L855.9 1.7 L858.7 3.9 L861.4 6.1 L864.0 8.2 L866.6 10.3 L869.1 12.3 L871.5 14.3 L873.8 16.1 L876.1 18.0 L878.3 19.8 L880.5 21.5 L882.6 23.2 L884.7 24.8 L886.6 26.4 L888.6 27.9 L890.4 29.4 L892.2 30.8 L894.0 32.3 L895.7 33.6 L897.4 35.0 L899.1 36.3 L900.7 37.5 L902.2 38.8 L903.7 40.0 L905.1 41.2 L906.5 42.3 L907.9 43.4 L909.3 44.5 L910.7 45.6 L912.0 46.7 L913.3 47.7 L914.5 48.7 L915.8 49.7 L916.9 50.6 L918.1 51.6 L919.3 52.5 L920.4 53.4 L921.5 54.3 L922.5 55.1 L923.5 56.0 L924.6 56.8 L925.5 57.5 L926.5 58.3 L927.4 59.1 L928.3 59.8 L929.2 60.5 L930.0 61.1 L930.9 61.8 L931.7 62.4 L932.4 63.0 L933.2 63.6 L933.9 64.2 L934.6 64.7 L935.3 65.2 L935.9 65.8 L936.5 66.3 L937.1 66.7 L937.7 67.2 L938.3 67.6 L938.8 68.1 L939.3 68.5 L939.9 68.9 L940.3 69.3 L940.8 69.7 L941.3 70.1 L941.7 70.4 L942.1 70.8 L942.6 71.1 L942.9 71.4 L943.3 71.7 L943.6 72.0 L944.0 72.2 L944.3 72.5 L944.6 72.8 L945.0 73.0 L945.3 73.3 L945.7 73.6 L946.1 73.9 L946.5 74.2 L946.9 74.6 L947.3 74.9 L947.7 75.2 L948.1 75.6 L948.6 75.9 L949.1 76.4 L949.7 76.8 L950.3 77.4 L951.0 77.9 L951.6 78.4 L952.2 78.8 L952.6 79.2 L953.0 79.5Z"/></clipPath><clipPath id="fbc1509t"><path d="M798.7 -5.2 L244.7 -358.8 L0.3 348.3Z"/></clipPath></defs><rect width="189" height="146" fill="#242424"/><g clip-path="url(#fbc1509)"><rect x="0" y="0" width="120" height="8" fill="#00909c"/><rect x="0" y="8" width="120" height="8" fill="#00909c"/><rect x="0" y="16" width="120" height="8" fill="#00849c"/><rect x="0" y="24" width="112" height="8" fill="#00849c"/><rect x="0" y="32" width="8" height="8" fill="#00849c"/><rect x="8" y="32" width="104" height="8" fill="#00789c"/><rect x="0" y="40" width="112" height="8" fill="#00789c"/><rect x="0" y="48" width="56" height="8" fill="#00789c"/><rect x="56" y="48" width="48" height="8" fill="#006c9c"/><rect x="0" y="56" width="104" height="8" fill="#006c9c"/><rect x="0" y="64" width="88" height="8" fill="#006c9c"/><rect x="88" y="64" width="16" height="8" fill="#00609c"/><rect x="0" y="72" width="8" height="8" fill="#006c9c"/><rect x="8" y="72" width="88" height="8" fill="#00609c"/><rect x="0" y="80" width="96" height="8" fill="#00609c"/><rect x="0" y="88" width="56" height="8" fill="#00609c"/><rect x="56" y="88" width="40" height="8" fill="#00549c"/><rect x="0" y="96" width="88" height="8" fill="#00549c"/><rect x="0" y="104" width="88" height="8" fill="#00549c"/><rect x="0" y="112" width="48" height="8" fill="#00549c"/><rect x="48" y="112" width="40" height="8" fill="#00489c"/><rect x="0" y="120" width="80" height="8" fill="#00489c"/><rect x="0" y="128" width="80" height="8" fill="#00489c"/><rect x="0" y="136" width="56" height="8" fill="#00489c"/><rect x="56" y="136" width="24" height="8" fill="#003c9c"/><rect x="0" y="144" width="16" height="8" fill="#00489c"/><rect x="16" y="144" width="56" height="8" fill="#003c9c"/></g><g clip-path="url(#fbc1509t)"><rect x="112" y="0" width="8" height="8" fill="#00f0fc"/><rect x="120" y="0" width="16" height="8" fill="#0cf0fc"/><rect x="136" y="0" width="8" height="8" fill="#18f0fc"/><rect x="144" y="0" width="8" height="8" fill="#24f0fc"/><rect x="152" y="0" width="8" height="8" fill="#30f0fc"/><rect x="160" y="0" width="8" height="8" fill="#3cf0fc"/><rect x="168" y="0" width="8" height="8" fill="#54f0fc"/><rect x="176" y="0" width="8" height="8" fill="#60f0fc"/><rect x="184" y="0" width="8" height="8" fill="#6cf0fc"/><rect x="112" y="8" width="8" height="8" fill="#00e4fc"/><rect x="120" y="8" width="8" height="8" fill="#0ce4fc"/><rect x="128" y="8" width="8" height="8" fill="#18e4fc"/><rect x="136" y="8" width="8" height="8" fill="#24e4fc"/><rect x="144" y="8" width="8" height="8" fill="#30e4fc"/><rect x="152" y="8" width="8" height="8" fill="#3ce4fc"/><rect x="160" y="8" width="8" height="8" fill="#48e4fc"/><rect x="168" y="8" width="8" height="8" fill="#54e4fc"/><rect x="176" y="8" width="8" height="8" fill="#60e4fc"/><rect x="184" y="8" width="8" height="8" fill="#6ce4fc"/><rect x="112" y="16" width="8" height="8" fill="#00e4fc"/><rect x="120" y="16" width="8" height="8" fill="#0ce4fc"/><rect x="128" y="16" width="8" height="8" fill="#18e4fc"/><rect x="136" y="16" width="8" height="8" fill="#24d8fc"/><rect x="144" y="16" width="8" height="8" fill="#30d8fc"/><rect x="152" y="16" width="8" height="8" fill="#3cd8fc"/><rect x="160" y="16" width="8" height="8" fill="#48d8fc"/><rect x="168" y="16" width="8" height="8" fill="#54d8fc"/><rect x="176" y="16" width="8" height="8" fill="#60d8fc"/><rect x="184" y="16" width="8" height="8" fill="#6cd8fc"/><rect x="104" y="24" width="8" height="8" fill="#00d8fc"/><rect x="112" y="24" width="16" height="8" fill="#0cd8fc"/><rect x="128" y="24" width="8" height="8" fill="#18d8fc"/><rect x="136" y="24" width="8" height="8" fill="#24d8fc"/><rect x="144" y="24" width="8" height="8" fill="#30d8fc"/><rect x="152" y="24" width="8" height="8" fill="#3cd8fc"/><rect x="160" y="24" width="8" height="8" fill="#48ccfc"/><rect x="168" y="24" width="8" height="8" fill="#54ccfc"/><rect x="176" y="24" width="8" height="8" fill="#60ccfc"/><rect x="184" y="24" width="8" height="8" fill="#6cccfc"/><rect x="104" y="32" width="8" height="8" fill="#00ccfc"/><rect x="112" y="32" width="8" height="8" fill="#0cccfc"/><rect x="120" y="32" width="8" height="8" fill="#18ccfc"/><rect x="128" y="32" width="16" height="8" fill="#24ccfc"/><rect x="144" y="32" width="8" height="8" fill="#30ccfc"/><rect x="152" y="32" width="8" height="8" fill="#3cccfc"/><rect x="160" y="32" width="8" height="8" fill="#48ccfc"/><rect x="168" y="32" width="8" height="8" fill="#54ccfc"/><rect x="176" y="32" width="8" height="8" fill="#60c0fc"/><rect x="184" y="32" width="8" height="8" fill="#6cc0fc"/><rect x="104" y="40" width="8" height="8" fill="#00c0fc"/><rect x="112" y="40" width="8" height="8" fill="#0cc0fc"/><rect x="120" y="40" width="8" height="8" fill="#18c0fc"/><rect x="128" y="40" width="8" height="8" fill="#24c0fc"/><rect x="136" y="40" width="8" height="8" fill="#30c0fc"/><rect x="144" y="40" width="8" height="8" fill="#3cc0fc"/><rect x="152" y="40" width="8" height="8" fill="#48c0fc"/><rect x="160" y="40" width="16" height="8" fill="#54c0fc"/><rect x="176" y="40" width="8" height="8" fill="#60c0fc"/><rect x="184" y="40" width="8" height="8" fill="#78c0fc"/><rect x="96" y="48" width="8" height="8" fill="#00b4fc"/><rect x="104" y="48" width="16" height="8" fill="#0cb4fc"/><rect x="120" y="48" width="8" height="8" fill="#18b4fc"/><rect x="128" y="48" width="8" height="8" fill="#24b4fc"/><rect x="136" y="48" width="8" height="8" fill="#30b4fc"/><rect x="144" y="48" width="8" height="8" fill="#3cb4fc"/><rect x="152" y="48" width="8" height="8" fill="#48b4fc"/><rect x="160" y="48" width="8" height="8" fill="#54b4fc"/><rect x="168" y="48" width="8" height="8" fill="#60b4fc"/><rect x="176" y="48" width="8" height="8" fill="#6cb4fc"/><rect x="184" y="48" width="8" height="8" fill="#78b4fc"/><rect x="96" y="56" width="8" height="8" fill="#00b4fc"/><rect x="104" y="56" width="8" height="8" fill="#0cb4fc"/><rect x="112" y="56" width="16" height="8" fill="#18b4fc"/><rect x="128" y="56" width="8" height="8" fill="#24a8fc"/><rect x="136" y="56" width="8" height="8" fill="#30a8fc"/><rect x="144" y="56" width="8" height="8" fill="#3ca8fc"/><rect x="152" y="56" width="8" height="8" fill="#48a8fc"/><rect x="160" y="56" width="8" height="8" fill="#54a8fc"/><rect x="168" y="56" width="8" height="8" fill="#60a8fc"/><rect x="176" y="56" width="8" height="8" fill="#6ca8fc"/><rect x="184" y="56" width="8" height="8" fill="#78a8fc"/><rect x="96" y="64" width="8" height="8" fill="#00a8fc"/><rect x="104" y="64" width="8" height="8" fill="#0ca8fc"/><rect x="112" y="64" width="8" height="8" fill="#18a8fc"/><rect x="120" y="64" width="8" height="8" fill="#24a8fc"/><rect x="128" y="64" width="16" height="8" fill="#30a8fc"/><rect x="144" y="64" width="8" height="8" fill="#3ca8fc"/><rect x="152" y="64" width="8" height="8" fill="#48a8fc"/><rect x="160" y="64" width="8" height="8" fill="#549cfc"/><rect x="168" y="64" width="8" height="8" fill="#609cfc"/><rect x="176" y="64" width="8" height="8" fill="#6c9cfc"/><rect x="184" y="64" width="8" height="8" fill="#789cfc"/><rect x="88" y="72" width="8" height="8" fill="#009cfc"/><rect x="96" y="72" width="16" height="8" fill="#0c9cfc"/><rect x="112" y="72" width="8" height="8" fill="#189cfc"/><rect x="120" y="72" width="8" height="8" fill="#249cfc"/><rect x="128" y="72" width="8" height="8" fill="#309cfc"/><rect x="136" y="72" width="16" height="8" fill="#3c9cfc"/><rect x="152" y="72" width="8" height="8" fill="#489cfc"/><rect x="160" y="72" width="8" height="8" fill="#549cfc"/><rect x="168" y="72" width="8" height="8" fill="#609cfc"/><rect x="176" y="72" width="8" height="8" fill="#6c9cfc"/><rect x="184" y="72" width="8" height="8" fill="#7890fc"/><rect x="88" y="80" width="8" height="8" fill="#009cfc"/><rect x="96" y="80" width="8" height="8" fill="#0c9cfc"/><rect x="104" y="80" width="16" height="8" fill="#189cfc"/><rect x="120" y="80" width="8" height="8" fill="#2490fc"/><rect x="128" y="80" width="8" height="8" fill="#3090fc"/><rect x="136" y="80" width="8" height="8" fill="#3c90fc"/><rect x="144" y="80" width="8" height="8" fill="#4890fc"/><rect x="152" y="80" width="16" height="8" fill="#5490fc"/><rect x="168" y="80" width="8" height="8" fill="#6090fc"/><rect x="176" y="80" width="8" height="8" fill="#6c90fc"/><rect x="184" y="80" width="8" height="8" fill="#7890fc"/><rect x="80" y="88" width="16" height="8" fill="#0090fc"/><rect x="96" y="88" width="8" height="8" fill="#0c90fc"/><rect x="104" y="88" width="8" height="8" fill="#1890fc"/><rect x="112" y="88" width="16" height="8" fill="#2490fc"/><rect x="128" y="88" width="8" height="8" fill="#3090fc"/><rect x="136" y="88" width="8" height="8" fill="#3c90fc"/><rect x="144" y="88" width="8" height="8" fill="#4890fc"/><rect x="152" y="88" width="8" height="8" fill="#5484fc"/><rect x="160" y="88" width="16" height="8" fill="#6084fc"/><rect x="176" y="88" width="8" height="8" fill="#6c84fc"/><rect x="184" y="88" width="8" height="8" fill="#7884fc"/><rect x="80" y="96" width="8" height="8" fill="#0090fc"/><rect x="88" y="96" width="8" height="8" fill="#0c90fc"/><rect x="96" y="96" width="8" height="8" fill="#0c84fc"/><rect x="104" y="96" width="8" height="8" fill="#1884fc"/><rect x="112" y="96" width="8" height="8" fill="#2484fc"/><rect x="120" y="96" width="16" height="8" fill="#3084fc"/><rect x="136" y="96" width="8" height="8" fill="#3c84fc"/><rect x="144" y="96" width="8" height="8" fill="#4884fc"/><rect x="152" y="96" width="8" height="8" fill="#5484fc"/><rect x="160" y="96" width="8" height="8" fill="#6084fc"/><rect x="168" y="96" width="8" height="8" fill="#6c84fc"/><rect x="176" y="96" width="16" height="8" fill="#7878fc"/><rect x="80" y="104" width="8" height="8" fill="#0084fc"/><rect x="88" y="104" width="8" height="8" fill="#0c84fc"/><rect x="96" y="104" width="16" height="8" fill="#1884fc"/><rect x="112" y="104" width="8" height="8" fill="#2484fc"/><rect x="120" y="104" width="8" height="8" fill="#3084fc"/><rect x="128" y="104" width="16" height="8" fill="#3c78fc"/><rect x="144" y="104" width="8" height="8" fill="#4878fc"/><rect x="152" y="104" width="8" height="8" fill="#5478fc"/><rect x="160" y="104" width="8" height="8" fill="#6078fc"/><rect x="168" y="104" width="8" height="8" fill="#6c78fc"/><rect x="176" y="104" width="8" height="8" fill="#7878fc"/><rect x="184" y="104" width="8" height="8" fill="#8478fc"/><rect x="72" y="112" width="8" height="8" fill="#0084fc"/><rect x="80" y="112" width="8" height="8" fill="#0078fc"/><rect x="88" y="112" width="8" height="8" fill="#0c78fc"/><rect x="96" y="112" width="16" height="8" fill="#1878fc"/><rect x="112" y="112" width="8" height="8" fill="#2478fc"/><rect x="120" y="112" width="8" height="8" fill="#3078fc"/><rect x="128" y="112" width="8" height="8" fill="#3c78fc"/><rect x="136" y="112" width="16" height="8" fill="#4878fc"/><rect x="152" y="112" width="8" height="8" fill="#5478fc"/><rect x="160" y="112" width="8" height="8" fill="#606cfc"/><rect x="168" y="112" width="8" height="8" fill="#6c6cfc"/><rect x="176" y="112" width="8" height="8" fill="#786cfc"/><rect x="184" y="112" width="8" height="8" fill="#846cfc"/><rect x="72" y="120" width="8" height="8" fill="#0078fc"/><rect x="80" y="120" width="16" height="8" fill="#0c78fc"/><rect x="96" y="120" width="8" height="8" fill="#1878fc"/><rect x="104" y="120" width="8" height="8" fill="#2478fc"/><rect x="112" y="120" width="8" height="8" fill="#246cfc"/><rect x="120" y="120" width="8" height="8" fill="#306cfc"/><rect x="128" y="120" width="8" height="8" fill="#3c6cfc"/><rect x="136" y="120" width="8" height="8" fill="#486cfc"/><rect x="144" y="120" width="16" height="8" fill="#546cfc"/><rect x="160" y="120" width="8" height="8" fill="#606cfc"/><rect x="168" y="120" width="8" height="8" fill="#6c6cfc"/><rect x="176" y="120" width="8" height="8" fill="#786cfc"/><rect x="184" y="120" width="8" height="8" fill="#8460fc"/><rect x="72" y="128" width="8" height="8" fill="#006cfc"/><rect x="80" y="128" width="16" height="8" fill="#0c6cfc"/><rect x="96" y="128" width="8" height="8" fill="#186cfc"/><rect x="104" y="128" width="8" height="8" fill="#246cfc"/><rect x="112" y="128" width="16" height="8" fill="#306cfc"/><rect x="128" y="128" width="8" height="8" fill="#3c6cfc"/><rect x="136" y="128" width="8" height="8" fill="#486cfc"/><rect x="144" y="128" width="16" height="8" fill="#5460fc"/><rect x="160" y="128" width="8" height="8" fill="#6060fc"/><rect x="168" y="128" width="8" height="8" fill="#6c60fc"/><rect x="176" y="128" width="8" height="8" fill="#7860fc"/><rect x="184" y="128" width="8" height="8" fill="#8460fc"/><rect x="64" y="136" width="16" height="8" fill="#006cfc"/><rect x="80" y="136" width="8" height="8" fill="#0c6cfc"/><rect x="88" y="136" width="16" height="8" fill="#186cfc"/><rect x="104" y="136" width="8" height="8" fill="#2460fc"/><rect x="112" y="136" width="8" height="8" fill="#3060fc"/><rect x="120" y="136" width="16" height="8" fill="#3c60fc"/><rect x="136" y="136" width="8" height="8" fill="#4860fc"/><rect x="144" y="136" width="8" height="8" fill="#5460fc"/><rect x="152" y="136" width="16" height="8" fill="#6060fc"/><rect x="168" y="136" width="8" height="8" fill="#6c60fc"/><rect x="176" y="136" width="8" height="8" fill="#7854fc"/><rect x="184" y="136" width="8" height="8" fill="#8454fc"/><rect x="64" y="144" width="8" height="8" fill="#0060fc"/><rect x="72" y="144" width="16" height="8" fill="#0c60fc"/><rect x="88" y="144" width="8" height="8" fill="#1860fc"/><rect x="96" y="144" width="16" height="8" fill="#2460fc"/><rect x="112" y="144" width="8" height="8" fill="#3060fc"/><rect x="120" y="144" width="16" height="8" fill="#3c60fc"/><rect x="136" y="144" width="8" height="8" fill="#4854fc"/><rect x="144" y="144" width="8" height="8" fill="#5454fc"/><rect x="152" y="144" width="8" height="8" fill="#6054fc"/><rect x="160" y="144" width="16" height="8" fill="#6c54fc"/><rect x="176" y="144" width="8" height="8" fill="#7854fc"/><rect x="184" y="144" width="8" height="8" fill="#8454fc"/></g></svg>
<canvas id="cie" width="653" height="500"></canvas>
<canvas id="cie2" width="189" height="146"></canvas>
<svg width="1716" height="886" viewBox="0 0 1716 886">
<defs><linearGradient id="bg0" x1="0" x2="1" y1="0" y2="0"><stop offset="0" stop-color="#59b0c3"/><stop offset="0.2" stop-color="#0085a3"/><stop offset="0.5" stop-color="#0085a3"/><stop offset="1" stop-color="#003844"/></linearGradient>
<linearGradient id="bg1" x1="0" x2="1" y1="0" y2="0"><stop offset="0" stop-color="#d391ba"/><stop offset="0.2" stop-color="#bb5695"/><stop offset="0.5" stop-color="#bb5695"/><stop offset="1" stop-color="#4f243f"/></linearGradient>
<linearGradient id="bg2" x1="0" x2="1" y1="0" y2="0"><stop offset="0" stop-color="#efdb6d"/><stop offset="0.2" stop-color="#e7c71f"/><stop offset="0.5" stop-color="#e7c71f"/><stop offset="1" stop-color="#61540d"/></linearGradient>
<linearGradient id="bg3" x1="0" x2="1" y1="0" y2="0"><stop offset="0" stop-color="#cb7c80"/><stop offset="0.2" stop-color="#af363c"/><stop offset="0.5" stop-color="#af363c"/><stop offset="1" stop-color="#4a1719"/></linearGradient>
<linearGradient id="bg4" x1="0" x2="1" y1="0" y2="0"><stop offset="0" stop-color="#87b989"/><stop offset="0.2" stop-color="#469449"/><stop offset="0.5" stop-color="#469449"/><stop offset="1" stop-color="#1d3e1f"/></linearGradient>
<linearGradient id="bg5" x1="0" x2="1" y1="0" y2="0"><stop offset="0" stop-color="#7e81bb"/><stop offset="0.2" stop-color="#383d96"/><stop offset="0.5" stop-color="#383d96"/><stop offset="1" stop-color="#181a3f"/></linearGradient>
<linearGradient id="bg6" x1="0" x2="1" y1="0" y2="0"><stop offset="0" stop-color="#ebc377"/><stop offset="0.2" stop-color="#e0a32e"/><stop offset="0.5" stop-color="#e0a32e"/><stop offset="1" stop-color="#5e4413"/></linearGradient>
<linearGradient id="bg7" x1="0" x2="1" y1="0" y2="0"><stop offset="0" stop-color="#bfd383"/><stop offset="0.2" stop-color="#9dbc40"/><stop offset="0.5" stop-color="#9dbc40"/><stop offset="1" stop-color="#424f1b"/></linearGradient>
<linearGradient id="bg8" x1="0" x2="1" y1="0" y2="0"><stop offset="0" stop-color="#96809f"/><stop offset="0.2" stop-color="#5e3c6c"/><stop offset="0.5" stop-color="#5e3c6c"/><stop offset="1" stop-color="#27192d"/></linearGradient>
<linearGradient id="bg9" x1="0" x2="1" y1="0" y2="0"><stop offset="0" stop-color="#d7949a"/><stop offset="0.2" stop-color="#c15a63"/><stop offset="0.5" stop-color="#c15a63"/><stop offset="1" stop-color="#51262a"/></linearGradient>
<linearGradient id="bg10" x1="0" x2="1" y1="0" y2="0"><stop offset="0" stop-color="#8d94c5"/><stop offset="0.2" stop-color="#505ba6"/><stop offset="0.5" stop-color="#505ba6"/><stop offset="1" stop-color="#222646"/></linearGradient>
<linearGradient id="bg11" x1="0" x2="1" y1="0" y2="0"><stop offset="0" stop-color="#e4ab76"/><stop offset="0.2" stop-color="#d67e2c"/><stop offset="0.5" stop-color="#d67e2c"/><stop offset="1" stop-color="#5a3512"/></linearGradient>
<linearGradient id="bg12" x1="0" x2="1" y1="0" y2="0"><stop offset="0" stop-color="#9cd4c8"/><stop offset="0.2" stop-color="#67bdaa"/><stop offset="0.5" stop-color="#67bdaa"/><stop offset="1" stop-color="#2b4f47"/></linearGradient>
<linearGradient id="bg13" x1="0" x2="1" y1="0" y2="0"><stop offset="0" stop-color="#b0accc"/><stop offset="0.2" stop-color="#8580b1"/><stop offset="0.5" stop-color="#8580b1"/><stop offset="1" stop-color="#38364a"/></linearGradient>
<linearGradient id="bg14" x1="0" x2="1" y1="0" y2="0"><stop offset="0" stop-color="#929f85"/><stop offset="0.2" stop-color="#576c43"/><stop offset="0.5" stop-color="#576c43"/><stop offset="1" stop-color="#252d1c"/></linearGradient>
<linearGradient id="bg15" x1="0" x2="1" y1="0" y2="0"><stop offset="0" stop-color="#99a9bf"/><stop offset="0.2" stop-color="#627a9d"/><stop offset="0.5" stop-color="#627a9d"/><stop offset="1" stop-color="#293342"/></linearGradient>
<linearGradient id="bg16" x1="0" x2="1" y1="0" y2="0"><stop offset="0" stop-color="#d7bbae"/><stop offset="0.2" stop-color="#c29682"/><stop offset="0.5" stop-color="#c29682"/><stop offset="1" stop-color="#513f37"/></linearGradient>
<linearGradient id="bg17" x1="0" x2="1" y1="0" y2="0"><stop offset="0" stop-color="#a48f85"/><stop offset="0.2" stop-color="#735244"/><stop offset="0.5" stop-color="#735244"/><stop offset="1" stop-color="#30221d"/></linearGradient>
<linearGradient id="bg18" x1="0" x2="1" y1="0" y2="0"><stop offset="0" stop-color="#505050"/><stop offset="0.2" stop-color="#000000"/><stop offset="0.5" stop-color="#000000"/><stop offset="1" stop-color="#000000"/></linearGradient>
<linearGradient id="bg19" x1="0" x2="1" y1="0" y2="0"><stop offset="0" stop-color="#c1c1c1"/><stop offset="0.2" stop-color="#a0a0a0"/><stop offset="0.5" stop-color="#a0a0a0"/><stop offset="1" stop-color="#434343"/></linearGradient>
<linearGradient id="bg20" x1="0" x2="1" y1="0" y2="0"><stop offset="0" stop-color="#cecece"/><stop offset="0.2" stop-color="#b4b4b4"/><stop offset="0.5" stop-color="#b4b4b4"/><stop offset="1" stop-color="#4c4c4c"/></linearGradient>
<linearGradient id="bg21" x1="0" x2="1" y1="0" y2="0"><stop offset="0" stop-color="#dbdbdb"/><stop offset="0.2" stop-color="#c8c8c8"/><stop offset="0.5" stop-color="#c8c8c8"/><stop offset="1" stop-color="#545454"/></linearGradient>
<linearGradient id="bg22" x1="0" x2="1" y1="0" y2="0"><stop offset="0" stop-color="#e7e7e7"/><stop offset="0.2" stop-color="#dadada"/><stop offset="0.5" stop-color="#dadada"/><stop offset="1" stop-color="#5c5c5c"/></linearGradient>
<linearGradient id="bg23" x1="0" x2="1" y1="0" y2="0"><stop offset="0" stop-color="#f7f7f7"/><stop offset="0.2" stop-color="#f3f3f3"/><stop offset="0.5" stop-color="#f3f3f3"/><stop offset="1" stop-color="#666666"/></linearGradient>
<linearGradient id="dbar" x1="0" x2="0" y1="0" y2="1"><stop offset="0" stop-color="#5cb4c9"/><stop offset="0.2" stop-color="#0a88a6"/><stop offset="0.55" stop-color="#0085a3"/><stop offset="0.78" stop-color="#0a6a86"/><stop offset="1" stop-color="#04303e"/></linearGradient></defs>
<text transform="translate(23.00 83.50) scale(1.0240 1)" font-size="38.50" fill="#f2f2f2" stroke="#f2f2f2" stroke-width="0.23">ColorChecker</text>
<text transform="translate(79.50 141.50) scale(1.0703 1)" font-size="28.50" fill="#f2f2f2" stroke="#f2f2f2" stroke-width="0.40">Avg dE2000: 11,59</text>
<text transform="translate(75.20 183.80) scale(1.0782 1)" font-size="28.50" fill="#f2f2f2" stroke="#f2f2f2" stroke-width="0.40">Max dE2000: 18,73</text>
<text transform="translate(201.50 218.50) scale(1.0512 1)" font-size="14.00" fill="#e6e6e6" stroke="#e6e6e6" stroke-width="0.31" text-anchor="middle">DeltaE 2000</text>
<rect x="19" y="226" width="364" height="369" fill="#242424"/>
<rect x="108.42" y="226" width="2" height="369" fill="#7a7a7a"/>
<rect x="199.55" y="226" width="2" height="369" fill="#7a7a7a"/>
<rect x="290.68" y="226" width="2" height="369" fill="#7a7a7a"/>
<rect x="19" y="227.00" width="192.57" height="12" fill="#000"/>
<rect x="19" y="228.00" width="191.57" height="9.6" fill="url(#bg0)"/>
<rect x="19" y="242.38" width="233.76" height="12" fill="#000"/>
<rect x="19" y="243.38" width="232.76" height="9.6" fill="url(#bg1)"/>
<rect x="19" y="257.75" width="104.18" height="12" fill="#000"/>
<rect x="19" y="258.75" width="103.18" height="9.6" fill="url(#bg2)"/>
<rect x="19" y="273.12" width="203.87" height="12" fill="#000"/>
<rect x="19" y="274.12" width="202.87" height="9.6" fill="url(#bg3)"/>
<rect x="19" y="288.50" width="172.53" height="12" fill="#000"/>
<rect x="19" y="289.50" width="171.53" height="9.6" fill="url(#bg4)"/>
<rect x="19" y="303.88" width="179.45" height="12" fill="#000"/>
<rect x="19" y="304.88" width="178.45" height="9.6" fill="url(#bg5)"/>
<rect x="19" y="319.25" width="119.67" height="12" fill="#000"/>
<rect x="19" y="320.25" width="118.67" height="9.6" fill="url(#bg6)"/>
<rect x="19" y="334.62" width="152.30" height="12" fill="#000"/>
<rect x="19" y="335.62" width="151.30" height="9.6" fill="url(#bg7)"/>
<rect x="19" y="350.00" width="200.23" height="12" fill="#000"/>
<rect x="19" y="351.00" width="199.23" height="9.6" fill="url(#bg8)"/>
<rect x="19" y="365.38" width="249.07" height="12" fill="#000"/>
<rect x="19" y="366.38" width="248.07" height="9.6" fill="url(#bg9)"/>
<rect x="19" y="380.75" width="173.07" height="12" fill="#000"/>
<rect x="19" y="381.75" width="172.07" height="9.6" fill="url(#bg10)"/>
<rect x="19" y="396.12" width="128.60" height="12" fill="#000"/>
<rect x="19" y="397.12" width="127.60" height="9.6" fill="url(#bg11)"/>
<rect x="19" y="411.50" width="331.08" height="12" fill="#000"/>
<rect x="19" y="412.50" width="330.08" height="9.6" fill="url(#bg12)"/>
<rect x="19" y="426.88" width="221.55" height="12" fill="#000"/>
<rect x="19" y="427.88" width="220.55" height="9.6" fill="url(#bg13)"/>
<rect x="19" y="442.25" width="213.17" height="12" fill="#000"/>
<rect x="19" y="443.25" width="212.17" height="9.6" fill="url(#bg14)"/>
<rect x="19" y="457.62" width="129.88" height="12" fill="#000"/>
<rect x="19" y="458.62" width="128.88" height="9.6" fill="url(#bg15)"/>
<rect x="19" y="473.00" width="341.65" height="12" fill="#000"/>
<rect x="19" y="474.00" width="340.65" height="9.6" fill="url(#bg16)"/>
<rect x="19" y="488.38" width="257.09" height="12" fill="#000"/>
<rect x="19" y="489.38" width="256.09" height="9.6" fill="url(#bg17)"/>
<rect x="19" y="503.75" width="50.97" height="12" fill="#000"/>
<rect x="19" y="504.75" width="49.97" height="9.6" fill="url(#bg18)"/>
<rect x="19" y="519.12" width="288.44" height="12" fill="#000"/>
<rect x="19" y="520.12" width="287.44" height="9.6" fill="url(#bg19)"/>
<rect x="19" y="534.50" width="286.43" height="12" fill="#000"/>
<rect x="19" y="535.50" width="285.43" height="9.6" fill="url(#bg20)"/>
<rect x="19" y="549.88" width="273.13" height="12" fill="#000"/>
<rect x="19" y="550.88" width="272.13" height="9.6" fill="url(#bg21)"/>
<rect x="19" y="565.25" width="243.60" height="12" fill="#000"/>
<rect x="19" y="566.25" width="242.60" height="9.6" fill="url(#bg22)"/>
<rect x="19" y="580.62" width="168.70" height="12" fill="#000"/>
<rect x="19" y="581.62" width="167.70" height="9.6" fill="url(#bg23)"/>
<rect x="35.63" y="225" width="1.8" height="371" fill="#008a00"/>
<rect x="72.08" y="225" width="1.8" height="371" fill="#f0f000"/>
<rect x="200.45" y="225" width="1.8" height="371" fill="#e00000"/>
<rect x="18.1" y="225.6" width="365.4" height="369.6" fill="none" stroke="#9a9a9a" stroke-width="1.6"/>
<rect x="17.50" y="595" width="1.6" height="7" fill="#dddddd"/>
<text transform="translate(18.30 618.00) scale(1.0000 1)" font-size="14.50" fill="#e6e6e6" stroke="#e6e6e6" stroke-width="0.32" text-anchor="middle">0</text>
<rect x="108.62" y="595" width="1.6" height="7" fill="#dddddd"/>
<text transform="translate(109.42 618.00) scale(1.0000 1)" font-size="14.50" fill="#e6e6e6" stroke="#e6e6e6" stroke-width="0.32" text-anchor="middle">5</text>
<rect x="199.75" y="595" width="1.6" height="7" fill="#dddddd"/>
<text transform="translate(200.55 618.00) scale(1.0000 1)" font-size="14.50" fill="#e6e6e6" stroke="#e6e6e6" stroke-width="0.32" text-anchor="middle">10</text>
<rect x="290.88" y="595" width="1.6" height="7" fill="#dddddd"/>
<text transform="translate(291.68 618.00) scale(1.0000 1)" font-size="14.50" fill="#e6e6e6" stroke="#e6e6e6" stroke-width="0.32" text-anchor="middle">15</text>
<rect x="382.00" y="595" width="1.6" height="7" fill="#dddddd"/>
<text transform="translate(382.80 618.00) scale(1.0000 1)" font-size="14.50" fill="#e6e6e6" stroke="#e6e6e6" stroke-width="0.32" text-anchor="middle">20</text>
<rect x="430.50" y="71.50" width="150.00" height="346.20" fill="#242424"/>
<rect x="430.50" y="70.50" width="150.00" height="2" fill="#7a7a7a"/>
<rect x="430.50" y="113.78" width="150.00" height="2" fill="#7a7a7a"/>
<rect x="430.50" y="157.05" width="150.00" height="2" fill="#7a7a7a"/>
<rect x="430.50" y="200.32" width="150.00" height="2" fill="#7a7a7a"/>
<rect x="430.50" y="243.60" width="150.00" height="2" fill="#7a7a7a"/>
<rect x="430.50" y="286.88" width="150.00" height="2" fill="#7a7a7a"/>
<rect x="430.50" y="330.15" width="150.00" height="2" fill="#7a7a7a"/>
<rect x="430.50" y="373.42" width="150.00" height="2" fill="#7a7a7a"/>
<rect x="430.50" y="416.70" width="150.00" height="2" fill="#7a7a7a"/>
<rect x="444.50" y="92.50" width="121.20" height="153.60" fill="#000"/>
<rect x="446.00" y="94.00" width="118.20" height="150.60" fill="url(#dbar)"/>
<rect x="430.00" y="113.98" width="151.00" height="2" fill="#e8e800"/>
<rect x="430.00" y="200.52" width="151.00" height="2" fill="#008800"/>
<rect x="430.00" y="287.07" width="151.00" height="2" fill="#008800"/>
<rect x="430.00" y="373.62" width="151.00" height="2" fill="#e8e800"/>
<rect x="430.50" y="71.50" width="150.00" height="346.20" fill="none" stroke="#999999" stroke-width="1.7"/>
<rect x="424.50" y="70.70" width="6" height="1.6" fill="#dddddd"/>
<text transform="translate(424.30 76.70) scale(1.0000 1)" font-size="14.50" fill="#e6e6e6" stroke="#e6e6e6" stroke-width="0.32" text-anchor="end">4</text>
<rect x="424.50" y="113.98" width="6" height="1.6" fill="#dddddd"/>
<text transform="translate(424.30 119.98) scale(1.0000 1)" font-size="14.50" fill="#e6e6e6" stroke="#e6e6e6" stroke-width="0.32" text-anchor="end">3</text>
<rect x="424.50" y="157.25" width="6" height="1.6" fill="#dddddd"/>
<text transform="translate(424.30 163.25) scale(1.0000 1)" font-size="14.50" fill="#e6e6e6" stroke="#e6e6e6" stroke-width="0.32" text-anchor="end">2</text>
<rect x="424.50" y="200.52" width="6" height="1.6" fill="#dddddd"/>
<text transform="translate(424.30 206.52) scale(1.0000 1)" font-size="14.50" fill="#e6e6e6" stroke="#e6e6e6" stroke-width="0.32" text-anchor="end">1</text>
<rect x="424.50" y="243.80" width="6" height="1.6" fill="#dddddd"/>
<text transform="translate(424.30 249.80) scale(1.0000 1)" font-size="14.50" fill="#e6e6e6" stroke="#e6e6e6" stroke-width="0.32" text-anchor="end">0</text>
<rect x="424.50" y="287.07" width="6" height="1.6" fill="#dddddd"/>
<text transform="translate(424.30 293.07) scale(1.0000 1)" font-size="14.50" fill="#e6e6e6" stroke="#e6e6e6" stroke-width="0.32" text-anchor="end">-1</text>
<rect x="424.50" y="330.35" width="6" height="1.6" fill="#dddddd"/>
<text transform="translate(424.30 336.35) scale(1.0000 1)" font-size="14.50" fill="#e6e6e6" stroke="#e6e6e6" stroke-width="0.32" text-anchor="end">-2</text>
<rect x="424.50" y="373.62" width="6" height="1.6" fill="#dddddd"/>
<text transform="translate(424.30 379.62) scale(1.0000 1)" font-size="14.50" fill="#e6e6e6" stroke="#e6e6e6" stroke-width="0.32" text-anchor="end">-3</text>
<rect x="424.50" y="416.90" width="6" height="1.6" fill="#dddddd"/>
<text transform="translate(424.30 422.90) scale(1.0000 1)" font-size="14.50" fill="#e6e6e6" stroke="#e6e6e6" stroke-width="0.32" text-anchor="end">-4</text>
<text transform="translate(496.40 66.00) scale(1.0600 1)" font-size="14.00" fill="#e6e6e6" stroke="#e6e6e6" stroke-width="0.31" text-anchor="middle">DeltaL</text>
<rect x="634.60" y="71.50" width="142.70" height="346.20" fill="#242424"/>
<rect x="634.60" y="70.50" width="142.70" height="2" fill="#7a7a7a"/>
<rect x="634.60" y="113.78" width="142.70" height="2" fill="#7a7a7a"/>
<rect x="634.60" y="157.05" width="142.70" height="2" fill="#7a7a7a"/>
<rect x="634.60" y="200.32" width="142.70" height="2" fill="#7a7a7a"/>
<rect x="634.60" y="243.60" width="142.70" height="2" fill="#7a7a7a"/>
<rect x="634.60" y="286.88" width="142.70" height="2" fill="#7a7a7a"/>
<rect x="634.60" y="330.15" width="142.70" height="2" fill="#7a7a7a"/>
<rect x="634.60" y="373.42" width="142.70" height="2" fill="#7a7a7a"/>
<rect x="634.60" y="416.70" width="142.70" height="2" fill="#7a7a7a"/>
<rect x="648.60" y="130.50" width="114.00" height="115.60" fill="#000"/>
<rect x="650.10" y="132.00" width="111.00" height="112.60" fill="url(#dbar)"/>
<rect x="634.10" y="157.25" width="143.70" height="2" fill="#dd1111"/>
<rect x="634.10" y="217.83" width="143.70" height="2" fill="#e8e800"/>
<rect x="634.10" y="235.14" width="143.70" height="2" fill="#008800"/>
<rect x="634.10" y="252.45" width="143.70" height="2" fill="#008800"/>
<rect x="634.10" y="269.76" width="143.70" height="2" fill="#e8e800"/>
<rect x="634.10" y="330.35" width="143.70" height="2" fill="#dd1111"/>
<rect x="634.60" y="71.50" width="142.70" height="346.20" fill="none" stroke="#999999" stroke-width="1.7"/>
<rect x="628.60" y="70.70" width="6" height="1.6" fill="#dddddd"/>
<text transform="translate(628.40 76.70) scale(1.0000 1)" font-size="14.50" fill="#e6e6e6" stroke="#e6e6e6" stroke-width="0.32" text-anchor="end">20</text>
<rect x="628.60" y="113.98" width="6" height="1.6" fill="#dddddd"/>
<text transform="translate(628.40 119.98) scale(1.0000 1)" font-size="14.50" fill="#e6e6e6" stroke="#e6e6e6" stroke-width="0.32" text-anchor="end">15</text>
<rect x="628.60" y="157.25" width="6" height="1.6" fill="#dddddd"/>
<text transform="translate(628.40 163.25) scale(1.0000 1)" font-size="14.50" fill="#e6e6e6" stroke="#e6e6e6" stroke-width="0.32" text-anchor="end">10</text>
<rect x="628.60" y="200.52" width="6" height="1.6" fill="#dddddd"/>
<text transform="translate(628.40 206.52) scale(1.0000 1)" font-size="14.50" fill="#e6e6e6" stroke="#e6e6e6" stroke-width="0.32" text-anchor="end">5</text>
<rect x="628.60" y="243.80" width="6" height="1.6" fill="#dddddd"/>
<text transform="translate(628.40 249.80) scale(1.0000 1)" font-size="14.50" fill="#e6e6e6" stroke="#e6e6e6" stroke-width="0.32" text-anchor="end">0</text>
<rect x="628.60" y="287.07" width="6" height="1.6" fill="#dddddd"/>
<text transform="translate(628.40 293.07) scale(1.0000 1)" font-size="14.50" fill="#e6e6e6" stroke="#e6e6e6" stroke-width="0.32" text-anchor="end">-5</text>
<rect x="628.60" y="330.35" width="6" height="1.6" fill="#dddddd"/>
<text transform="translate(628.40 336.35) scale(1.0000 1)" font-size="14.50" fill="#e6e6e6" stroke="#e6e6e6" stroke-width="0.32" text-anchor="end">-10</text>
<rect x="628.60" y="373.62" width="6" height="1.6" fill="#dddddd"/>
<text transform="translate(628.40 379.62) scale(1.0000 1)" font-size="14.50" fill="#e6e6e6" stroke="#e6e6e6" stroke-width="0.32" text-anchor="end">-15</text>
<rect x="628.60" y="416.90" width="6" height="1.6" fill="#dddddd"/>
<text transform="translate(628.40 422.90) scale(1.0000 1)" font-size="14.50" fill="#e6e6e6" stroke="#e6e6e6" stroke-width="0.32" text-anchor="end">-20</text>
<text transform="translate(692.40 66.00) scale(1.0600 1)" font-size="14.00" fill="#e6e6e6" stroke="#e6e6e6" stroke-width="0.31" text-anchor="middle">DeltaC</text>
<rect x="831.40" y="71.50" width="155.90" height="346.20" fill="#242424"/>
<rect x="831.40" y="70.50" width="155.90" height="2" fill="#7a7a7a"/>
<rect x="831.40" y="113.78" width="155.90" height="2" fill="#7a7a7a"/>
<rect x="831.40" y="157.05" width="155.90" height="2" fill="#7a7a7a"/>
<rect x="831.40" y="200.32" width="155.90" height="2" fill="#7a7a7a"/>
<rect x="831.40" y="243.60" width="155.90" height="2" fill="#7a7a7a"/>
<rect x="831.40" y="286.88" width="155.90" height="2" fill="#7a7a7a"/>
<rect x="831.40" y="330.15" width="155.90" height="2" fill="#7a7a7a"/>
<rect x="831.40" y="373.42" width="155.90" height="2" fill="#7a7a7a"/>
<rect x="831.40" y="416.70" width="155.90" height="2" fill="#7a7a7a"/>
<rect x="846.40" y="87.30" width="125.00" height="158.80" fill="#000"/>
<rect x="847.90" y="88.80" width="122.00" height="155.80" fill="url(#dbar)"/>
<rect x="830.90" y="157.25" width="156.90" height="2" fill="#dd1111"/>
<rect x="830.90" y="217.83" width="156.90" height="2" fill="#e8e800"/>
<rect x="830.90" y="235.14" width="156.90" height="2" fill="#008800"/>
<rect x="830.90" y="252.45" width="156.90" height="2" fill="#008800"/>
<rect x="830.90" y="269.76" width="156.90" height="2" fill="#e8e800"/>
<rect x="830.90" y="330.35" width="156.90" height="2" fill="#dd1111"/>
<rect x="831.40" y="71.50" width="155.90" height="346.20" fill="none" stroke="#999999" stroke-width="1.7"/>
<rect x="825.40" y="70.70" width="6" height="1.6" fill="#dddddd"/>
<text transform="translate(825.20 76.70) scale(1.0000 1)" font-size="14.50" fill="#e6e6e6" stroke="#e6e6e6" stroke-width="0.32" text-anchor="end">20</text>
<rect x="825.40" y="113.98" width="6" height="1.6" fill="#dddddd"/>
<text transform="translate(825.20 119.98) scale(1.0000 1)" font-size="14.50" fill="#e6e6e6" stroke="#e6e6e6" stroke-width="0.32" text-anchor="end">15</text>
<rect x="825.40" y="157.25" width="6" height="1.6" fill="#dddddd"/>
<text transform="translate(825.20 163.25) scale(1.0000 1)" font-size="14.50" fill="#e6e6e6" stroke="#e6e6e6" stroke-width="0.32" text-anchor="end">10</text>
<rect x="825.40" y="200.52" width="6" height="1.6" fill="#dddddd"/>
<text transform="translate(825.20 206.52) scale(1.0000 1)" font-size="14.50" fill="#e6e6e6" stroke="#e6e6e6" stroke-width="0.32" text-anchor="end">5</text>
<rect x="825.40" y="243.80" width="6" height="1.6" fill="#dddddd"/>
<text transform="translate(825.20 249.80) scale(1.0000 1)" font-size="14.50" fill="#e6e6e6" stroke="#e6e6e6" stroke-width="0.32" text-anchor="end">0</text>
<rect x="825.40" y="287.07" width="6" height="1.6" fill="#dddddd"/>
<text transform="translate(825.20 293.07) scale(1.0000 1)" font-size="14.50" fill="#e6e6e6" stroke="#e6e6e6" stroke-width="0.32" text-anchor="end">-5</text>
<rect x="825.40" y="330.35" width="6" height="1.6" fill="#dddddd"/>
<text transform="translate(825.20 336.35) scale(1.0000 1)" font-size="14.50" fill="#e6e6e6" stroke="#e6e6e6" stroke-width="0.32" text-anchor="end">-10</text>
<rect x="825.40" y="373.62" width="6" height="1.6" fill="#dddddd"/>
<text transform="translate(825.20 379.62) scale(1.0000 1)" font-size="14.50" fill="#e6e6e6" stroke="#e6e6e6" stroke-width="0.32" text-anchor="end">-15</text>
<rect x="825.40" y="416.90" width="6" height="1.6" fill="#dddddd"/>
<text transform="translate(825.20 422.90) scale(1.0000 1)" font-size="14.50" fill="#e6e6e6" stroke="#e6e6e6" stroke-width="0.32" text-anchor="end">-20</text>
<text transform="translate(895.50 66.00) scale(1.0600 1)" font-size="14.00" fill="#e6e6e6" stroke="#e6e6e6" stroke-width="0.31" text-anchor="middle">DeltaH</text>
<rect x="412" y="424" width="589" height="187" fill="#000"/>
<clipPath id="pclip"><rect x="412" y="424" width="589" height="187"/></clipPath>
<g clip-path="url(#pclip)">
<rect x="430.60" y="432.60" width="58.8" height="60.8" fill="#dcf0ff" stroke="#ffffff" stroke-width="1.2"/>
<rect x="431.80" y="433.80" width="56.4" height="58.4" fill="none" stroke="rgba(140,140,140,0.75)" stroke-width="0.9"/>
<rect x="430.60" y="511.60" width="58.8" height="60.8" fill="#efefef" stroke="#ffffff" stroke-width="1.2"/>
<rect x="431.80" y="512.80" width="56.4" height="58.4" fill="none" stroke="rgba(140,140,140,0.75)" stroke-width="0.9"/>
<text transform="translate(460.00 588.00) scale(0.9200 1)" font-size="13.50" fill="#ffffff" stroke="#ffffff" stroke-width="0.30" text-anchor="middle">White</text>
<rect x="500.60" y="432.60" width="58.8" height="60.8" fill="#c4defc" stroke="#ffffff" stroke-width="1.2"/>
<rect x="501.80" y="433.80" width="56.4" height="58.4" fill="none" stroke="rgba(140,140,140,0.75)" stroke-width="0.9"/>
<rect x="500.60" y="511.60" width="58.8" height="60.8" fill="#dadada" stroke="#ffffff" stroke-width="1.2"/>
<rect x="501.80" y="512.80" width="56.4" height="58.4" fill="none" stroke="rgba(140,140,140,0.75)" stroke-width="0.9"/>
<text transform="translate(530.00 588.00) scale(0.9200 1)" font-size="13.50" fill="#ffffff" stroke="#ffffff" stroke-width="0.30" text-anchor="middle">Gray 80</text>
<rect x="570.60" y="432.60" width="58.8" height="60.8" fill="#b7d2fa" stroke="#ffffff" stroke-width="1.2"/>
<rect x="571.80" y="433.80" width="56.4" height="58.4" fill="none" stroke="rgba(140,140,140,0.75)" stroke-width="0.9"/>
<rect x="570.60" y="511.60" width="58.8" height="60.8" fill="#cfcfcf" stroke="#ffffff" stroke-width="1.2"/>
<rect x="571.80" y="512.80" width="56.4" height="58.4" fill="none" stroke="rgba(140,140,140,0.75)" stroke-width="0.9"/>
<text transform="translate(600.00 588.00) scale(0.9200 1)" font-size="13.50" fill="#ffffff" stroke="#ffffff" stroke-width="0.30" text-anchor="middle">Gray 65</text>
<rect x="640.60" y="432.60" width="58.8" height="60.8" fill="#a2bde8" stroke="#ffffff" stroke-width="1.2"/>
<rect x="641.80" y="433.80" width="56.4" height="58.4" fill="none" stroke="rgba(140,140,140,0.75)" stroke-width="0.9"/>
<rect x="640.60" y="511.60" width="58.8" height="60.8" fill="#b8b8b8" stroke="#ffffff" stroke-width="1.2"/>
<rect x="641.80" y="512.80" width="56.4" height="58.4" fill="none" stroke="rgba(140,140,140,0.75)" stroke-width="0.9"/>
<text transform="translate(670.00 588.00) scale(0.9200 1)" font-size="13.50" fill="#ffffff" stroke="#ffffff" stroke-width="0.30" text-anchor="middle">Gray 50</text>
<rect x="710.60" y="432.60" width="58.8" height="60.8" fill="#8ba3cf" stroke="#ffffff" stroke-width="1.2"/>
<rect x="711.80" y="433.80" width="56.4" height="58.4" fill="none" stroke="rgba(140,140,140,0.75)" stroke-width="0.9"/>
<rect x="710.60" y="511.60" width="58.8" height="60.8" fill="#a0a0a0" stroke="#ffffff" stroke-width="1.2"/>
<rect x="711.80" y="512.80" width="56.4" height="58.4" fill="none" stroke="rgba(140,140,140,0.75)" stroke-width="0.9"/>
<text transform="translate(740.00 588.00) scale(0.9200 1)" font-size="13.50" fill="#ffffff" stroke="#ffffff" stroke-width="0.30" text-anchor="middle">Gray 35</text>
<rect x="780.60" y="432.60" width="58.8" height="60.8" fill="#080a10" stroke="#ffffff" stroke-width="1.2"/>
<rect x="781.80" y="433.80" width="56.4" height="58.4" fill="none" stroke="rgba(140,140,140,0.75)" stroke-width="0.9"/>
<rect x="780.60" y="511.60" width="58.8" height="60.8" fill="#000000" stroke="#ffffff" stroke-width="1.2"/>
<rect x="781.80" y="512.80" width="56.4" height="58.4" fill="none" stroke="rgba(140,140,140,0.75)" stroke-width="0.9"/>
<text transform="translate(810.00 588.00) scale(0.9200 1)" font-size="13.50" fill="#ffffff" stroke="#ffffff" stroke-width="0.30" text-anchor="middle">Black</text>
<rect x="850.60" y="432.60" width="58.8" height="60.8" fill="#665662" stroke="#ffffff" stroke-width="1.2"/>
<rect x="851.80" y="433.80" width="56.4" height="58.4" fill="none" stroke="rgba(140,140,140,0.75)" stroke-width="0.9"/>
<rect x="850.60" y="511.60" width="58.8" height="60.8" fill="#735244" stroke="#ffffff" stroke-width="1.2"/>
<rect x="851.80" y="512.80" width="56.4" height="58.4" fill="none" stroke="rgba(140,140,140,0.75)" stroke-width="0.9"/>
<text transform="translate(880.00 588.00) scale(0.9200 1)" font-size="13.50" fill="#ffffff" stroke="#ffffff" stroke-width="0.30" text-anchor="middle">Dark Skin</text>
<rect x="920.60" y="432.60" width="58.8" height="60.8" fill="#ab9aae" stroke="#ffffff" stroke-width="1.2"/>
<rect x="921.80" y="433.80" width="56.4" height="58.4" fill="none" stroke="rgba(140,140,140,0.75)" stroke-width="0.9"/>
<rect x="920.60" y="511.60" width="58.8" height="60.8" fill="#c29682" stroke="#ffffff" stroke-width="1.2"/>
<rect x="921.80" y="512.80" width="56.4" height="58.4" fill="none" stroke="rgba(140,140,140,0.75)" stroke-width="0.9"/>
<text transform="translate(950.00 588.00) scale(0.9200 1)" font-size="13.50" fill="#ffffff" stroke="#ffffff" stroke-width="0.30" text-anchor="middle">Light Skin</text>
<rect x="990.60" y="432.60" width="58.8" height="60.8" fill="#4a86c8" stroke="#ffffff" stroke-width="1.2"/>
<rect x="991.80" y="433.80" width="56.4" height="58.4" fill="none" stroke="rgba(140,140,140,0.75)" stroke-width="0.9"/>
<rect x="990.60" y="511.60" width="58.8" height="60.8" fill="#5f7aa0" stroke="#ffffff" stroke-width="1.2"/>
<rect x="991.80" y="512.80" width="56.4" height="58.4" fill="none" stroke="rgba(140,140,140,0.75)" stroke-width="0.9"/>
<text transform="translate(1020.00 588.00) scale(0.9200 1)" font-size="13.50" fill="#ffffff" stroke="#ffffff" stroke-width="0.30" text-anchor="middle">Blue Sky</text>
</g>
<text transform="translate(425.6 463) rotate(-90)" font-size="13" fill="#fff" stroke="#fff" stroke-width="0.3" text-anchor="middle">Actual</text>
<text transform="translate(425.6 542) rotate(-90)" font-size="13" fill="#fff" stroke="#fff" stroke-width="0.3" text-anchor="middle">Target</text>
<rect x="412" y="611" width="589" height="17" fill="#5e5e5e"/>
<rect x="412" y="611" width="589" height="1" fill="#6a6a6a"/>
<rect x="413.5" y="612.5" width="13" height="13" rx="2.5" fill="#6e6e6e" stroke="#8a8a8a" stroke-width="1"/>
<path d="M417 619 L423 614.5 L423 623.5 Z" fill="#454545"/>
<rect x="985.5" y="612.5" width="13" height="13" rx="2.5" fill="#6e6e6e" stroke="#8a8a8a" stroke-width="1"/>
<path d="M995 619 L989 614.5 L989 623.5 Z" fill="#454545"/>
<rect x="430.5" y="612.8" width="189" height="13.6" rx="6.8" fill="#454545"/>
<rect x="329" y="629.30" width="1240" height="14.70" fill="#2e2e2e"/>
<rect x="329" y="644" width="1240" height="14.00" fill="#131313"/>
<rect x="329" y="629.30" width="9" height="28.70" fill="#000"/>
<rect x="338" y="658.00" width="1231" height="26.57" fill="#444444"/>
<rect x="329" y="658.00" width="9" height="26.57" fill="#202020"/>
<rect x="338" y="684.57" width="1231" height="26.57" fill="#858585"/>
<rect x="329" y="684.57" width="9" height="26.57" fill="#262626"/>
<rect x="338" y="711.14" width="1231" height="26.57" fill="#444444"/>
<rect x="329" y="711.14" width="9" height="26.57" fill="#202020"/>
<rect x="338" y="737.71" width="1231" height="26.57" fill="#858585"/>
<rect x="329" y="737.71" width="9" height="26.57" fill="#262626"/>
<rect x="338" y="764.28" width="1231" height="26.57" fill="#444444"/>
<rect x="329" y="764.28" width="9" height="26.57" fill="#202020"/>
<rect x="338" y="790.85" width="1231" height="26.57" fill="#858585"/>
<rect x="329" y="790.85" width="9" height="26.57" fill="#262626"/>
<rect x="338" y="817.42" width="1231" height="26.57" fill="#444444"/>
<rect x="329" y="817.42" width="9" height="26.57" fill="#202020"/>
<text transform="translate(420.80 649.30) scale(0.7000 1)" font-size="15.50" fill="#ffffff" stroke="#ffffff" stroke-width="0.19">White</text>
<text transform="translate(461.70 649.30) scale(0.7000 1)" font-size="15.50" fill="#ffffff" stroke="#ffffff" stroke-width="0.19">Gray 80</text>
<text transform="translate(504.30 649.30) scale(0.7000 1)" font-size="15.50" fill="#ffffff" stroke="#ffffff" stroke-width="0.19">Gray 65</text>
<text transform="translate(547.10 649.30) scale(0.7000 1)" font-size="15.50" fill="#ffffff" stroke="#ffffff" stroke-width="0.19">Gray 50</text>
<text transform="translate(589.60 649.30) scale(0.7000 1)" font-size="15.50" fill="#ffffff" stroke="#ffffff" stroke-width="0.19">Gray 35</text>
<text transform="translate(632.50 649.30) scale(0.7000 1)" font-size="15.50" fill="#ffffff" stroke="#ffffff" stroke-width="0.19">Black</text>
<text transform="translate(663.40 649.30) scale(0.7000 1)" font-size="15.50" fill="#ffffff" stroke="#ffffff" stroke-width="0.19">Dark Skin</text>
<text transform="translate(713.80 649.30) scale(0.7000 1)" font-size="15.50" fill="#ffffff" stroke="#ffffff" stroke-width="0.19">Light Skin</text>
<text transform="translate(765.20 649.30) scale(0.7000 1)" font-size="15.50" fill="#ffffff" stroke="#ffffff" stroke-width="0.19">Blue Sky</text>
<text transform="translate(810.90 649.30) scale(0.7000 1)" font-size="15.50" fill="#ffffff" stroke="#ffffff" stroke-width="0.19">Foliage</text>
<text transform="translate(850.90 649.30) scale(0.7000 1)" font-size="15.50" fill="#ffffff" stroke="#ffffff" stroke-width="0.19">Blue Flower</text>
<text transform="translate(913.20 649.30) scale(0.7000 1)" font-size="15.50" fill="#ffffff" stroke="#ffffff" stroke-width="0.19">Bluish Green</text>
<text transform="translate(979.40 649.30) scale(0.7000 1)" font-size="15.50" fill="#ffffff" stroke="#ffffff" stroke-width="0.19">Orange</text>
<text transform="translate(1020.40 649.30) scale(0.7000 1)" font-size="15.50" fill="#ffffff" stroke="#ffffff" stroke-width="0.19">Purplish Blue</text>
<text transform="translate(1088.60 649.30) scale(0.7000 1)" font-size="15.50" fill="#ffffff" stroke="#ffffff" stroke-width="0.19">Moderate Red</text>
<text transform="translate(1163.10 649.30) scale(0.7000 1)" font-size="15.50" fill="#ffffff" stroke="#ffffff" stroke-width="0.19">Purple</text>
<text transform="translate(1200.10 649.30) scale(0.7000 1)" font-size="15.50" fill="#ffffff" stroke="#ffffff" stroke-width="0.19">Yellow Green</text>
<text transform="translate(1268.60 649.30) scale(0.7000 1)" font-size="15.50" fill="#ffffff" stroke="#ffffff" stroke-width="0.19">Orange Yellow</text>
<text transform="translate(1342.60 649.30) scale(0.7000 1)" font-size="15.50" fill="#ffffff" stroke="#ffffff" stroke-width="0.19">Blue</text>
<text transform="translate(1377.40 649.30) scale(0.7000 1)" font-size="15.50" fill="#ffffff" stroke="#ffffff" stroke-width="0.19">Green</text>
<text transform="translate(1412.70 649.30) scale(0.7000 1)" font-size="15.50" fill="#ffffff" stroke="#ffffff" stroke-width="0.19">Red</text>
<text transform="translate(1447.80 649.30) scale(0.7000 1)" font-size="15.50" fill="#ffffff" stroke="#ffffff" stroke-width="0.19">Yellow</text>
<text transform="translate(1488.80 649.30) scale(0.7000 1)" font-size="15.50" fill="#ffffff" stroke="#ffffff" stroke-width="0.19">Magenta</text>
<text transform="translate(1537.30 649.30) scale(0.7000 1)" font-size="15.50" fill="#ffffff" stroke="#ffffff" stroke-width="0.19">Cyan</text>
<text transform="translate(341.00 677.90) scale(0.7000 1)" font-size="15.50" fill="#f2f2f2" stroke="#f2f2f2" stroke-width="0.12">x: CIE31</text>
<text transform="translate(420.80 677.90) scale(0.7000 1)" font-size="15.50" fill="#f2f2f2" stroke="#f2f2f2" stroke-width="0.12">0,29</text>
<text transform="translate(461.70 677.90) scale(0.7000 1)" font-size="15.50" fill="#f2f2f2" stroke="#f2f2f2" stroke-width="0.12">0,28</text>
<text transform="translate(504.30 677.90) scale(0.7000 1)" font-size="15.50" fill="#f2f2f2" stroke="#f2f2f2" stroke-width="0.12">0,27</text>
<text transform="translate(547.10 677.90) scale(0.7000 1)" font-size="15.50" fill="#f2f2f2" stroke="#f2f2f2" stroke-width="0.12">0,26</text>
<text transform="translate(589.60 677.90) scale(0.7000 1)" font-size="15.50" fill="#f2f2f2" stroke="#f2f2f2" stroke-width="0.12">0,26</text>
<text transform="translate(632.50 677.90) scale(0.7000 1)" font-size="15.50" fill="#f2f2f2" stroke="#f2f2f2" stroke-width="0.12">0,25</text>
<text transform="translate(663.40 677.90) scale(0.7000 1)" font-size="15.50" fill="#f2f2f2" stroke="#f2f2f2" stroke-width="0.12">0,32</text>
<text transform="translate(713.80 677.90) scale(0.7000 1)" font-size="15.50" fill="#f2f2f2" stroke="#f2f2f2" stroke-width="0.12">0,31</text>
<text transform="translate(765.20 677.90) scale(0.7000 1)" font-size="15.50" fill="#f2f2f2" stroke="#f2f2f2" stroke-width="0.12">0,21</text>
<text transform="translate(810.90 677.90) scale(0.7000 1)" font-size="15.50" fill="#f2f2f2" stroke="#f2f2f2" stroke-width="0.12">0,29</text>
<text transform="translate(850.90 677.90) scale(0.7000 1)" font-size="15.50" fill="#f2f2f2" stroke="#f2f2f2" stroke-width="0.12">0,22</text>
<text transform="translate(913.20 677.90) scale(0.7000 1)" font-size="15.50" fill="#f2f2f2" stroke="#f2f2f2" stroke-width="0.12">0,23</text>
<text transform="translate(979.40 677.90) scale(0.7000 1)" font-size="15.50" fill="#f2f2f2" stroke="#f2f2f2" stroke-width="0.12">0,45</text>
<text transform="translate(1020.40 677.90) scale(0.7000 1)" font-size="15.50" fill="#f2f2f2" stroke="#f2f2f2" stroke-width="0.12">0,19</text>
<text transform="translate(1088.60 677.90) scale(0.7000 1)" font-size="15.50" fill="#f2f2f2" stroke="#f2f2f2" stroke-width="0.12">0,36</text>
<text transform="translate(1163.10 677.90) scale(0.7000 1)" font-size="15.50" fill="#f2f2f2" stroke="#f2f2f2" stroke-width="0.12">0,23</text>
<text transform="translate(1200.10 677.90) scale(0.7000 1)" font-size="15.50" fill="#f2f2f2" stroke="#f2f2f2" stroke-width="0.12">0,34</text>
<text transform="translate(1268.60 677.90) scale(0.7000 1)" font-size="15.50" fill="#f2f2f2" stroke="#f2f2f2" stroke-width="0.12">0,43</text>
<text transform="translate(1342.60 677.90) scale(0.7000 1)" font-size="15.50" fill="#f2f2f2" stroke="#f2f2f2" stroke-width="0.12">0,17</text>
<text transform="translate(1377.40 677.90) scale(0.7000 1)" font-size="15.50" fill="#f2f2f2" stroke="#f2f2f2" stroke-width="0.12">0,28</text>
<text transform="translate(1412.70 677.90) scale(0.7000 1)" font-size="15.50" fill="#f2f2f2" stroke="#f2f2f2" stroke-width="0.12">0,43</text>
<text transform="translate(1447.80 677.90) scale(0.7000 1)" font-size="15.50" fill="#f2f2f2" stroke="#f2f2f2" stroke-width="0.12">0,42</text>
<text transform="translate(1488.80 677.90) scale(0.7000 1)" font-size="15.50" fill="#f2f2f2" stroke="#f2f2f2" stroke-width="0.12">0,29</text>
<text transform="translate(1537.30 677.90) scale(0.7000 1)" font-size="15.50" fill="#f2f2f2" stroke="#f2f2f2" stroke-width="0.12">0,19</text>
<text transform="translate(341.00 704.47) scale(0.7000 1)" font-size="15.50" fill="#f2f2f2" stroke="#f2f2f2" stroke-width="0.12">y: CIE31</text>
<text transform="translate(420.80 704.47) scale(0.7000 1)" font-size="15.50" fill="#f2f2f2" stroke="#f2f2f2" stroke-width="0.12">0,32</text>
<text transform="translate(461.70 704.47) scale(0.7000 1)" font-size="15.50" fill="#f2f2f2" stroke="#f2f2f2" stroke-width="0.12">0,30</text>
<text transform="translate(504.30 704.47) scale(0.7000 1)" font-size="15.50" fill="#f2f2f2" stroke="#f2f2f2" stroke-width="0.12">0,28</text>
<text transform="translate(547.10 704.47) scale(0.7000 1)" font-size="15.50" fill="#f2f2f2" stroke="#f2f2f2" stroke-width="0.12">0,28</text>
<text transform="translate(589.60 704.47) scale(0.7000 1)" font-size="15.50" fill="#f2f2f2" stroke="#f2f2f2" stroke-width="0.12">0,27</text>
<text transform="translate(632.50 704.47) scale(0.7000 1)" font-size="15.50" fill="#f2f2f2" stroke="#f2f2f2" stroke-width="0.12">0,24</text>
<text transform="translate(663.40 704.47) scale(0.7000 1)" font-size="15.50" fill="#f2f2f2" stroke="#f2f2f2" stroke-width="0.12">0,30</text>
<text transform="translate(713.80 704.47) scale(0.7000 1)" font-size="15.50" fill="#f2f2f2" stroke="#f2f2f2" stroke-width="0.12">0,30</text>
<text transform="translate(765.20 704.47) scale(0.7000 1)" font-size="15.50" fill="#f2f2f2" stroke="#f2f2f2" stroke-width="0.12">0,22</text>
<text transform="translate(810.90 704.47) scale(0.7000 1)" font-size="15.50" fill="#f2f2f2" stroke="#f2f2f2" stroke-width="0.12">0,35</text>
<text transform="translate(850.90 704.47) scale(0.7000 1)" font-size="15.50" fill="#f2f2f2" stroke="#f2f2f2" stroke-width="0.12">0,22</text>
<text transform="translate(913.20 704.47) scale(0.7000 1)" font-size="15.50" fill="#f2f2f2" stroke="#f2f2f2" stroke-width="0.12">0,29</text>
<text transform="translate(979.40 704.47) scale(0.7000 1)" font-size="15.50" fill="#f2f2f2" stroke="#f2f2f2" stroke-width="0.12">0,39</text>
<text transform="translate(1020.40 704.47) scale(0.7000 1)" font-size="15.50" fill="#f2f2f2" stroke="#f2f2f2" stroke-width="0.12">0,17</text>
<text transform="translate(1088.60 704.47) scale(0.7000 1)" font-size="15.50" fill="#f2f2f2" stroke="#f2f2f2" stroke-width="0.12">0,27</text>
<text transform="translate(1163.10 704.47) scale(0.7000 1)" font-size="15.50" fill="#f2f2f2" stroke="#f2f2f2" stroke-width="0.12">0,18</text>
<text transform="translate(1200.10 704.47) scale(0.7000 1)" font-size="15.50" fill="#f2f2f2" stroke="#f2f2f2" stroke-width="0.12">0,44</text>
<text transform="translate(1268.60 704.47) scale(0.7000 1)" font-size="15.50" fill="#f2f2f2" stroke="#f2f2f2" stroke-width="0.12">0,42</text>
<text transform="translate(1342.60 704.47) scale(0.7000 1)" font-size="15.50" fill="#f2f2f2" stroke="#f2f2f2" stroke-width="0.12">0,14</text>
<text transform="translate(1377.40 704.47) scale(0.7000 1)" font-size="15.50" fill="#f2f2f2" stroke="#f2f2f2" stroke-width="0.12">0,41</text>
<text transform="translate(1412.70 704.47) scale(0.7000 1)" font-size="15.50" fill="#f2f2f2" stroke="#f2f2f2" stroke-width="0.12">0,28</text>
<text transform="translate(1447.80 704.47) scale(0.7000 1)" font-size="15.50" fill="#f2f2f2" stroke="#f2f2f2" stroke-width="0.12">0,45</text>
<text transform="translate(1488.80 704.47) scale(0.7000 1)" font-size="15.50" fill="#f2f2f2" stroke="#f2f2f2" stroke-width="0.12">0,21</text>
<text transform="translate(1537.30 704.47) scale(0.7000 1)" font-size="15.50" fill="#f2f2f2" stroke="#f2f2f2" stroke-width="0.12">0,22</text>
<text transform="translate(341.00 731.04) scale(0.7000 1)" font-size="15.50" fill="#f2f2f2" stroke="#f2f2f2" stroke-width="0.12">Y</text>
<text transform="translate(420.80 731.04) scale(0.7000 1)" font-size="15.50" fill="#f2f2f2" stroke="#f2f2f2" stroke-width="0.12">264,08</text>
<text transform="translate(461.70 731.04) scale(0.7000 1)" font-size="15.50" fill="#f2f2f2" stroke="#f2f2f2" stroke-width="0.12">213,24</text>
<text transform="translate(504.30 731.04) scale(0.7000 1)" font-size="15.50" fill="#f2f2f2" stroke="#f2f2f2" stroke-width="0.12">172,13</text>
<text transform="translate(547.10 731.04) scale(0.7000 1)" font-size="15.50" fill="#f2f2f2" stroke="#f2f2f2" stroke-width="0.12">133,32</text>
<text transform="translate(589.60 731.04) scale(0.7000 1)" font-size="15.50" fill="#f2f2f2" stroke="#f2f2f2" stroke-width="0.12">94,09</text>
<text transform="translate(632.50 731.04) scale(0.7000 1)" font-size="15.50" fill="#f2f2f2" stroke="#f2f2f2" stroke-width="0.12">0,48</text>
<text transform="translate(663.40 731.04) scale(0.7000 1)" font-size="15.50" fill="#f2f2f2" stroke="#f2f2f2" stroke-width="0.12">26,50</text>
<text transform="translate(713.80 731.04) scale(0.7000 1)" font-size="15.50" fill="#f2f2f2" stroke="#f2f2f2" stroke-width="0.12">91,81</text>
<text transform="translate(765.20 731.04) scale(0.7000 1)" font-size="15.50" fill="#f2f2f2" stroke="#f2f2f2" stroke-width="0.12">57,98</text>
<text transform="translate(810.90 731.04) scale(0.7000 1)" font-size="15.50" fill="#f2f2f2" stroke="#f2f2f2" stroke-width="0.12">33,30</text>
<text transform="translate(850.90 731.04) scale(0.7000 1)" font-size="15.50" fill="#f2f2f2" stroke="#f2f2f2" stroke-width="0.12">72,92</text>
<text transform="translate(913.20 731.04) scale(0.7000 1)" font-size="15.50" fill="#f2f2f2" stroke="#f2f2f2" stroke-width="0.12">111,44</text>
<text transform="translate(979.40 731.04) scale(0.7000 1)" font-size="15.50" fill="#f2f2f2" stroke="#f2f2f2" stroke-width="0.12">69,38</text>
<text transform="translate(1020.40 731.04) scale(0.7000 1)" font-size="15.50" fill="#f2f2f2" stroke="#f2f2f2" stroke-width="0.12">43,06</text>
<text transform="translate(1088.60 731.04) scale(0.7000 1)" font-size="15.50" fill="#f2f2f2" stroke="#f2f2f2" stroke-width="0.12">50,65</text>
<text transform="translate(1163.10 731.04) scale(0.7000 1)" font-size="15.50" fill="#f2f2f2" stroke="#f2f2f2" stroke-width="0.12">22,08</text>
<text transform="translate(1200.10 731.04) scale(0.7000 1)" font-size="15.50" fill="#f2f2f2" stroke="#f2f2f2" stroke-width="0.12">100,06</text>
<text transform="translate(1268.60 731.04) scale(0.7000 1)" font-size="15.50" fill="#f2f2f2" stroke="#f2f2f2" stroke-width="0.12">102,40</text>
<text transform="translate(1342.60 731.04) scale(0.7000 1)" font-size="15.50" fill="#f2f2f2" stroke="#f2f2f2" stroke-width="0.12">26,80</text>
<text transform="translate(1377.40 731.04) scale(0.7000 1)" font-size="15.50" fill="#f2f2f2" stroke="#f2f2f2" stroke-width="0.12">55,53</text>
<text transform="translate(1412.70 731.04) scale(0.7000 1)" font-size="15.50" fill="#f2f2f2" stroke="#f2f2f2" stroke-width="0.12">29,16</text>
<text transform="translate(1447.80 731.04) scale(0.7000 1)" font-size="15.50" fill="#f2f2f2" stroke="#f2f2f2" stroke-width="0.12">138,65</text>
<text transform="translate(1488.80 731.04) scale(0.7000 1)" font-size="15.50" fill="#f2f2f2" stroke="#f2f2f2" stroke-width="0.12">57,48</text>
<text transform="translate(1537.30 731.04) scale(0.7000 1)" font-size="15.50" fill="#f2f2f2" stroke="#f2f2f2" stroke-width="0.12">59,69</text>
<text transform="translate(341.00 757.61) scale(0.7000 1)" font-size="15.50" fill="#f2f2f2" stroke="#f2f2f2" stroke-width="0.12">Target x:CIE31</text>
<text transform="translate(420.80 757.61) scale(0.7000 1)" font-size="15.50" fill="#f2f2f2" stroke="#f2f2f2" stroke-width="0.12">0,31</text>
<text transform="translate(461.70 757.61) scale(0.7000 1)" font-size="15.50" fill="#f2f2f2" stroke="#f2f2f2" stroke-width="0.12">0,31</text>
<text transform="translate(504.30 757.61) scale(0.7000 1)" font-size="15.50" fill="#f2f2f2" stroke="#f2f2f2" stroke-width="0.12">0,31</text>
<text transform="translate(547.10 757.61) scale(0.7000 1)" font-size="15.50" fill="#f2f2f2" stroke="#f2f2f2" stroke-width="0.12">0,31</text>
<text transform="translate(589.60 757.61) scale(0.7000 1)" font-size="15.50" fill="#f2f2f2" stroke="#f2f2f2" stroke-width="0.12">0,31</text>
<text transform="translate(632.50 757.61) scale(0.7000 1)" font-size="15.50" fill="#f2f2f2" stroke="#f2f2f2" stroke-width="0.12">0,31</text>
<text transform="translate(663.40 757.61) scale(0.7000 1)" font-size="15.50" fill="#f2f2f2" stroke="#f2f2f2" stroke-width="0.12">0,40</text>
<text transform="translate(713.80 757.61) scale(0.7000 1)" font-size="15.50" fill="#f2f2f2" stroke="#f2f2f2" stroke-width="0.12">0,38</text>
<text transform="translate(765.20 757.61) scale(0.7000 1)" font-size="15.50" fill="#f2f2f2" stroke="#f2f2f2" stroke-width="0.12">0,25</text>
<text transform="translate(810.90 757.61) scale(0.7000 1)" font-size="15.50" fill="#f2f2f2" stroke="#f2f2f2" stroke-width="0.12">0,34</text>
<text transform="translate(850.90 757.61) scale(0.7000 1)" font-size="15.50" fill="#f2f2f2" stroke="#f2f2f2" stroke-width="0.12">0,27</text>
<text transform="translate(913.20 757.61) scale(0.7000 1)" font-size="15.50" fill="#f2f2f2" stroke="#f2f2f2" stroke-width="0.12">0,26</text>
<text transform="translate(979.40 757.61) scale(0.7000 1)" font-size="15.50" fill="#f2f2f2" stroke="#f2f2f2" stroke-width="0.12">0,51</text>
<text transform="translate(1020.40 757.61) scale(0.7000 1)" font-size="15.50" fill="#f2f2f2" stroke="#f2f2f2" stroke-width="0.12">0,22</text>
<text transform="translate(1088.60 757.61) scale(0.7000 1)" font-size="15.50" fill="#f2f2f2" stroke="#f2f2f2" stroke-width="0.12">0,46</text>
<text transform="translate(1163.10 757.61) scale(0.7000 1)" font-size="15.50" fill="#f2f2f2" stroke="#f2f2f2" stroke-width="0.12">0,29</text>
<text transform="translate(1200.10 757.61) scale(0.7000 1)" font-size="15.50" fill="#f2f2f2" stroke="#f2f2f2" stroke-width="0.12">0,38</text>
<text transform="translate(1268.60 757.61) scale(0.7000 1)" font-size="15.50" fill="#f2f2f2" stroke="#f2f2f2" stroke-width="0.12">0,47</text>
<text transform="translate(1342.60 757.61) scale(0.7000 1)" font-size="15.50" fill="#f2f2f2" stroke="#f2f2f2" stroke-width="0.12">0,19</text>
<text transform="translate(1377.40 757.61) scale(0.7000 1)" font-size="15.50" fill="#f2f2f2" stroke="#f2f2f2" stroke-width="0.12">0,31</text>
<text transform="translate(1412.70 757.61) scale(0.7000 1)" font-size="15.50" fill="#f2f2f2" stroke="#f2f2f2" stroke-width="0.12">0,54</text>
<text transform="translate(1447.80 757.61) scale(0.7000 1)" font-size="15.50" fill="#f2f2f2" stroke="#f2f2f2" stroke-width="0.12">0,45</text>
<text transform="translate(1488.80 757.61) scale(0.7000 1)" font-size="15.50" fill="#f2f2f2" stroke="#f2f2f2" stroke-width="0.12">0,37</text>
<text transform="translate(1537.30 757.61) scale(0.7000 1)" font-size="15.50" fill="#f2f2f2" stroke="#f2f2f2" stroke-width="0.12">0,21</text>
<text transform="translate(341.00 784.18) scale(0.7000 1)" font-size="15.50" fill="#f2f2f2" stroke="#f2f2f2" stroke-width="0.12">Target y:CIE31</text>
<text transform="translate(420.80 784.18) scale(0.7000 1)" font-size="15.50" fill="#f2f2f2" stroke="#f2f2f2" stroke-width="0.12">0,33</text>
<text transform="translate(461.70 784.18) scale(0.7000 1)" font-size="15.50" fill="#f2f2f2" stroke="#f2f2f2" stroke-width="0.12">0,33</text>
<text transform="translate(504.30 784.18) scale(0.7000 1)" font-size="15.50" fill="#f2f2f2" stroke="#f2f2f2" stroke-width="0.12">0,33</text>
<text transform="translate(547.10 784.18) scale(0.7000 1)" font-size="15.50" fill="#f2f2f2" stroke="#f2f2f2" stroke-width="0.12">0,33</text>
<text transform="translate(589.60 784.18) scale(0.7000 1)" font-size="15.50" fill="#f2f2f2" stroke="#f2f2f2" stroke-width="0.12">0,33</text>
<text transform="translate(632.50 784.18) scale(0.7000 1)" font-size="15.50" fill="#f2f2f2" stroke="#f2f2f2" stroke-width="0.12">0,33</text>
<text transform="translate(663.40 784.18) scale(0.7000 1)" font-size="15.50" fill="#f2f2f2" stroke="#f2f2f2" stroke-width="0.12">0,36</text>
<text transform="translate(713.80 784.18) scale(0.7000 1)" font-size="15.50" fill="#f2f2f2" stroke="#f2f2f2" stroke-width="0.12">0,36</text>
<text transform="translate(765.20 784.18) scale(0.7000 1)" font-size="15.50" fill="#f2f2f2" stroke="#f2f2f2" stroke-width="0.12">0,27</text>
<text transform="translate(810.90 784.18) scale(0.7000 1)" font-size="15.50" fill="#f2f2f2" stroke="#f2f2f2" stroke-width="0.12">0,43</text>
<text transform="translate(850.90 784.18) scale(0.7000 1)" font-size="15.50" fill="#f2f2f2" stroke="#f2f2f2" stroke-width="0.12">0,25</text>
<text transform="translate(913.20 784.18) scale(0.7000 1)" font-size="15.50" fill="#f2f2f2" stroke="#f2f2f2" stroke-width="0.12">0,36</text>
<text transform="translate(979.40 784.18) scale(0.7000 1)" font-size="15.50" fill="#f2f2f2" stroke="#f2f2f2" stroke-width="0.12">0,41</text>
<text transform="translate(1020.40 784.18) scale(0.7000 1)" font-size="15.50" fill="#f2f2f2" stroke="#f2f2f2" stroke-width="0.12">0,19</text>
<text transform="translate(1088.60 784.18) scale(0.7000 1)" font-size="15.50" fill="#f2f2f2" stroke="#f2f2f2" stroke-width="0.12">0,31</text>
<text transform="translate(1163.10 784.18) scale(0.7000 1)" font-size="15.50" fill="#f2f2f2" stroke="#f2f2f2" stroke-width="0.12">0,22</text>
<text transform="translate(1200.10 784.18) scale(0.7000 1)" font-size="15.50" fill="#f2f2f2" stroke="#f2f2f2" stroke-width="0.12">0,49</text>
<text transform="translate(1268.60 784.18) scale(0.7000 1)" font-size="15.50" fill="#f2f2f2" stroke="#f2f2f2" stroke-width="0.12">0,44</text>
<text transform="translate(1342.60 784.18) scale(0.7000 1)" font-size="15.50" fill="#f2f2f2" stroke="#f2f2f2" stroke-width="0.12">0,14</text>
<text transform="translate(1377.40 784.18) scale(0.7000 1)" font-size="15.50" fill="#f2f2f2" stroke="#f2f2f2" stroke-width="0.12">0,49</text>
<text transform="translate(1412.70 784.18) scale(0.7000 1)" font-size="15.50" fill="#f2f2f2" stroke="#f2f2f2" stroke-width="0.12">0,32</text>
<text transform="translate(1447.80 784.18) scale(0.7000 1)" font-size="15.50" fill="#f2f2f2" stroke="#f2f2f2" stroke-width="0.12">0,47</text>
<text transform="translate(1488.80 784.18) scale(0.7000 1)" font-size="15.50" fill="#f2f2f2" stroke="#f2f2f2" stroke-width="0.12">0,25</text>
<text transform="translate(1537.30 784.18) scale(0.7000 1)" font-size="15.50" fill="#f2f2f2" stroke="#f2f2f2" stroke-width="0.12">0,27</text>
<text transform="translate(341.00 810.75) scale(0.7000 1)" font-size="15.50" fill="#f2f2f2" stroke="#f2f2f2" stroke-width="0.12">Target Y</text>
<text transform="translate(420.80 810.75) scale(0.7000 1)" font-size="15.50" fill="#f2f2f2" stroke="#f2f2f2" stroke-width="0.12">264,08</text>
<text transform="translate(461.70 810.75) scale(0.7000 1)" font-size="15.50" fill="#f2f2f2" stroke="#f2f2f2" stroke-width="0.12">208,96</text>
<text transform="translate(504.30 810.75) scale(0.7000 1)" font-size="15.50" fill="#f2f2f2" stroke="#f2f2f2" stroke-width="0.12">168,37</text>
<text transform="translate(547.10 810.75) scale(0.7000 1)" font-size="15.50" fill="#f2f2f2" stroke="#f2f2f2" stroke-width="0.12">129,67</text>
<text transform="translate(589.60 810.75) scale(0.7000 1)" font-size="15.50" fill="#f2f2f2" stroke="#f2f2f2" stroke-width="0.12">90,29</text>
<text transform="translate(632.50 810.75) scale(0.7000 1)" font-size="15.50" fill="#f2f2f2" stroke="#f2f2f2" stroke-width="0.12">0,00</text>
<text transform="translate(663.40 810.75) scale(0.7000 1)" font-size="15.50" fill="#f2f2f2" stroke="#f2f2f2" stroke-width="0.12">26,60</text>
<text transform="translate(713.80 810.75) scale(0.7000 1)" font-size="15.50" fill="#f2f2f2" stroke="#f2f2f2" stroke-width="0.12">92,15</text>
<text transform="translate(765.20 810.75) scale(0.7000 1)" font-size="15.50" fill="#f2f2f2" stroke="#f2f2f2" stroke-width="0.12">49,38</text>
<text transform="translate(810.90 810.75) scale(0.7000 1)" font-size="15.50" fill="#f2f2f2" stroke="#f2f2f2" stroke-width="0.12">34,42</text>
<text transform="translate(850.90 810.75) scale(0.7000 1)" font-size="15.50" fill="#f2f2f2" stroke="#f2f2f2" stroke-width="0.12">61,58</text>
<text transform="translate(913.20 810.75) scale(0.7000 1)" font-size="15.50" fill="#f2f2f2" stroke="#f2f2f2" stroke-width="0.12">110,58</text>
<text transform="translate(979.40 810.75) scale(0.7000 1)" font-size="15.50" fill="#f2f2f2" stroke="#f2f2f2" stroke-width="0.12">74,86</text>
<text transform="translate(1020.40 810.75) scale(0.7000 1)" font-size="15.50" fill="#f2f2f2" stroke="#f2f2f2" stroke-width="0.12">31,04</text>
<text transform="translate(1088.60 810.75) scale(0.7000 1)" font-size="15.50" fill="#f2f2f2" stroke="#f2f2f2" stroke-width="0.12">49,32</text>
<text transform="translate(1163.10 810.75) scale(0.7000 1)" font-size="15.50" fill="#f2f2f2" stroke="#f2f2f2" stroke-width="0.12">17,63</text>
<text transform="translate(1200.10 810.75) scale(0.7000 1)" font-size="15.50" fill="#f2f2f2" stroke="#f2f2f2" stroke-width="0.12">112,91</text>
<text transform="translate(1268.60 810.75) scale(0.7000 1)" font-size="15.50" fill="#f2f2f2" stroke="#f2f2f2" stroke-width="0.12">112,27</text>
<text transform="translate(1342.60 810.75) scale(0.7000 1)" font-size="15.50" fill="#f2f2f2" stroke="#f2f2f2" stroke-width="0.12">16,49</text>
<text transform="translate(1377.40 810.75) scale(0.7000 1)" font-size="15.50" fill="#f2f2f2" stroke="#f2f2f2" stroke-width="0.12">60,67</text>
<text transform="translate(1412.70 810.75) scale(0.7000 1)" font-size="15.50" fill="#f2f2f2" stroke="#f2f2f2" stroke-width="0.12">30,80</text>
<text transform="translate(1447.80 810.75) scale(0.7000 1)" font-size="15.50" fill="#f2f2f2" stroke="#f2f2f2" stroke-width="0.12">155,71</text>
<text transform="translate(1488.80 810.75) scale(0.7000 1)" font-size="15.50" fill="#f2f2f2" stroke="#f2f2f2" stroke-width="0.12">49,72</text>
<text transform="translate(1537.30 810.75) scale(0.7000 1)" font-size="15.50" fill="#f2f2f2" stroke="#f2f2f2" stroke-width="0.12">51,28</text>
<text transform="translate(341.00 837.32) scale(0.7000 1)" font-size="15.50" fill="#f2f2f2" stroke="#f2f2f2" stroke-width="0.12">ΔE 2000</text>
<text transform="translate(420.80 837.32) scale(0.7000 1)" font-size="15.50" fill="#f2f2f2" stroke="#f2f2f2" stroke-width="0.12">9,24</text>
<text transform="translate(461.70 837.32) scale(0.7000 1)" font-size="15.50" fill="#f2f2f2" stroke="#f2f2f2" stroke-width="0.12">13,35</text>
<text transform="translate(504.30 837.32) scale(0.7000 1)" font-size="15.50" fill="#f2f2f2" stroke="#f2f2f2" stroke-width="0.12">14,97</text>
<text transform="translate(547.10 837.32) scale(0.7000 1)" font-size="15.50" fill="#f2f2f2" stroke="#f2f2f2" stroke-width="0.12">15,70</text>
<text transform="translate(589.60 837.32) scale(0.7000 1)" font-size="15.50" fill="#f2f2f2" stroke="#f2f2f2" stroke-width="0.12">15,81</text>
<text transform="translate(632.50 837.32) scale(0.7000 1)" font-size="15.50" fill="#f2f2f2" stroke="#f2f2f2" stroke-width="0.12">2,78</text>
<text transform="translate(663.40 837.32) scale(0.7000 1)" font-size="15.50" fill="#f2f2f2" stroke="#f2f2f2" stroke-width="0.12">14,09</text>
<text transform="translate(713.80 837.32) scale(0.7000 1)" font-size="15.50" fill="#f2f2f2" stroke="#f2f2f2" stroke-width="0.12">18,73</text>
<text transform="translate(765.20 837.32) scale(0.7000 1)" font-size="15.50" fill="#f2f2f2" stroke="#f2f2f2" stroke-width="0.12">7,11</text>
<text transform="translate(810.90 837.32) scale(0.7000 1)" font-size="15.50" fill="#f2f2f2" stroke="#f2f2f2" stroke-width="0.12">11,68</text>
<text transform="translate(850.90 837.32) scale(0.7000 1)" font-size="15.50" fill="#f2f2f2" stroke="#f2f2f2" stroke-width="0.12">12,14</text>
<text transform="translate(913.20 837.32) scale(0.7000 1)" font-size="15.50" fill="#f2f2f2" stroke="#f2f2f2" stroke-width="0.12">18,15</text>
<text transform="translate(979.40 837.32) scale(0.7000 1)" font-size="15.50" fill="#f2f2f2" stroke="#f2f2f2" stroke-width="0.12">7,04</text>
<text transform="translate(1020.40 837.32) scale(0.7000 1)" font-size="15.50" fill="#f2f2f2" stroke="#f2f2f2" stroke-width="0.12">9,48</text>
<text transform="translate(1088.60 837.32) scale(0.7000 1)" font-size="15.50" fill="#f2f2f2" stroke="#f2f2f2" stroke-width="0.12">13,65</text>
<text transform="translate(1163.10 837.32) scale(0.7000 1)" font-size="15.50" fill="#f2f2f2" stroke="#f2f2f2" stroke-width="0.12">10,97</text>
<text transform="translate(1200.10 837.32) scale(0.7000 1)" font-size="15.50" fill="#f2f2f2" stroke="#f2f2f2" stroke-width="0.12">8,34</text>
<text transform="translate(1268.60 837.32) scale(0.7000 1)" font-size="15.50" fill="#f2f2f2" stroke="#f2f2f2" stroke-width="0.12">6,55</text>
<text transform="translate(1342.60 837.32) scale(0.7000 1)" font-size="15.50" fill="#f2f2f2" stroke="#f2f2f2" stroke-width="0.12">9,83</text>
<text transform="translate(1377.40 837.32) scale(0.7000 1)" font-size="15.50" fill="#f2f2f2" stroke="#f2f2f2" stroke-width="0.12">9,45</text>
<text transform="translate(1412.70 837.32) scale(0.7000 1)" font-size="15.50" fill="#f2f2f2" stroke="#f2f2f2" stroke-width="0.12">11,17</text>
<text transform="translate(1447.80 837.32) scale(0.7000 1)" font-size="15.50" fill="#f2f2f2" stroke="#f2f2f2" stroke-width="0.12">5,70</text>
<text transform="translate(1488.80 837.32) scale(0.7000 1)" font-size="15.50" fill="#f2f2f2" stroke="#f2f2f2" stroke-width="0.12">12,81</text>
<text transform="translate(1537.30 837.32) scale(0.7000 1)" font-size="15.50" fill="#f2f2f2" stroke="#f2f2f2" stroke-width="0.12">10,55</text>
<text transform="translate(13.00 674.80) scale(1.0546 1)" font-size="29.00" fill="#f2f2f2" stroke="#f2f2f2" stroke-width="0.64">Current Reading</text>
<text transform="translate(13.00 717.20) scale(1.0532 1)" font-size="24.00" fill="#f2f2f2" stroke="#f2f2f2" stroke-width="0.53">x: 0,1907</text>
<text transform="translate(13.00 758.50) scale(1.0532 1)" font-size="24.00" fill="#f2f2f2" stroke="#f2f2f2" stroke-width="0.53">y: 0,2167</text>
<text transform="translate(13.00 801.80) scale(1.0585 1)" font-size="24.00" fill="#f2f2f2" stroke="#f2f2f2" stroke-width="0.53">fL: 17,422</text>
<text transform="translate(13.00 843.70) scale(1.1108 1)" font-size="24.00" fill="#f2f2f2" stroke="#f2f2f2" stroke-width="0.53">cd/m²: 59,694</text>
<rect x="1018.5" y="49.5" width="694" height="561" fill="none" stroke="#0088a8" stroke-width="7"/>
<rect x="1051.5" y="76.5" width="654" height="501" fill="none" stroke="#999999" stroke-width="1.6"/>
<text transform="translate(1365.00 72.00) scale(1.0000 1)" font-size="14.00" fill="#e6e6e6" stroke="#e6e6e6" stroke-width="0.31" text-anchor="middle">CIE 1931 xy</text>
<rect x="1051.20" y="577" width="1.6" height="6" fill="#dddddd"/>
<text transform="translate(1052.00 599.00) scale(1.0000 1)" font-size="14.50" fill="#e6e6e6" stroke="#e6e6e6" stroke-width="0.32" text-anchor="middle">0</text>
<rect x="1045" y="576.10" width="6" height="1.6" fill="#dddddd"/>
<text transform="translate(1045.00 582.40) scale(0.9500 1)" font-size="14.50" fill="#e6e6e6" stroke="#e6e6e6" stroke-width="0.32" text-anchor="end">0</text>
<rect x="1128.90" y="577" width="1.6" height="6" fill="#dddddd"/>
<text transform="translate(1129.70 599.00) scale(1.0000 1)" font-size="14.50" fill="#e6e6e6" stroke="#e6e6e6" stroke-width="0.32" text-anchor="middle">0,1</text>
<rect x="1045" y="516.71" width="6" height="1.6" fill="#dddddd"/>
<text transform="translate(1045.00 523.01) scale(0.9500 1)" font-size="14.50" fill="#e6e6e6" stroke="#e6e6e6" stroke-width="0.32" text-anchor="end">0,1</text>
<rect x="1206.60" y="577" width="1.6" height="6" fill="#dddddd"/>
<text transform="translate(1207.40 599.00) scale(1.0000 1)" font-size="14.50" fill="#e6e6e6" stroke="#e6e6e6" stroke-width="0.32" text-anchor="middle">0,2</text>
<rect x="1045" y="457.32" width="6" height="1.6" fill="#dddddd"/>
<text transform="translate(1045.00 463.62) scale(0.9500 1)" font-size="14.50" fill="#e6e6e6" stroke="#e6e6e6" stroke-width="0.32" text-anchor="end">0,2</text>
<rect x="1284.30" y="577" width="1.6" height="6" fill="#dddddd"/>
<text transform="translate(1285.10 599.00) scale(1.0000 1)" font-size="14.50" fill="#e6e6e6" stroke="#e6e6e6" stroke-width="0.32" text-anchor="middle">0,3</text>
<rect x="1045" y="397.93" width="6" height="1.6" fill="#dddddd"/>
<text transform="translate(1045.00 404.23) scale(0.9500 1)" font-size="14.50" fill="#e6e6e6" stroke="#e6e6e6" stroke-width="0.32" text-anchor="end">0,3</text>
<rect x="1362.00" y="577" width="1.6" height="6" fill="#dddddd"/>
<text transform="translate(1362.80 599.00) scale(1.0000 1)" font-size="14.50" fill="#e6e6e6" stroke="#e6e6e6" stroke-width="0.32" text-anchor="middle">0,4</text>
<rect x="1045" y="338.54" width="6" height="1.6" fill="#dddddd"/>
<text transform="translate(1045.00 344.84) scale(0.9500 1)" font-size="14.50" fill="#e6e6e6" stroke="#e6e6e6" stroke-width="0.32" text-anchor="end">0,4</text>
<rect x="1439.70" y="577" width="1.6" height="6" fill="#dddddd"/>
<text transform="translate(1440.50 599.00) scale(1.0000 1)" font-size="14.50" fill="#e6e6e6" stroke="#e6e6e6" stroke-width="0.32" text-anchor="middle">0,5</text>
<rect x="1045" y="279.15" width="6" height="1.6" fill="#dddddd"/>
<text transform="translate(1045.00 285.45) scale(0.9500 1)" font-size="14.50" fill="#e6e6e6" stroke="#e6e6e6" stroke-width="0.32" text-anchor="end">0,5</text>
<rect x="1517.40" y="577" width="1.6" height="6" fill="#dddddd"/>
<text transform="translate(1518.20 599.00) scale(1.0000 1)" font-size="14.50" fill="#e6e6e6" stroke="#e6e6e6" stroke-width="0.32" text-anchor="middle">0,6</text>
<rect x="1045" y="219.76" width="6" height="1.6" fill="#dddddd"/>
<text transform="translate(1045.00 226.06) scale(0.9500 1)" font-size="14.50" fill="#e6e6e6" stroke="#e6e6e6" stroke-width="0.32" text-anchor="end">0,6</text>
<rect x="1595.10" y="577" width="1.6" height="6" fill="#dddddd"/>
<text transform="translate(1595.90 599.00) scale(1.0000 1)" font-size="14.50" fill="#e6e6e6" stroke="#e6e6e6" stroke-width="0.32" text-anchor="middle">0,7</text>
<rect x="1045" y="160.37" width="6" height="1.6" fill="#dddddd"/>
<text transform="translate(1045.00 166.67) scale(0.9500 1)" font-size="14.50" fill="#e6e6e6" stroke="#e6e6e6" stroke-width="0.32" text-anchor="end">0,7</text>
<rect x="1672.80" y="577" width="1.6" height="6" fill="#dddddd"/>
<text transform="translate(1673.60 599.00) scale(1.0000 1)" font-size="14.50" fill="#e6e6e6" stroke="#e6e6e6" stroke-width="0.32" text-anchor="middle">0,8</text>
<rect x="1045" y="100.98" width="6" height="1.6" fill="#dddddd"/>
<text transform="translate(1045.00 107.28) scale(0.9500 1)" font-size="14.50" fill="#e6e6e6" stroke="#e6e6e6" stroke-width="0.32" text-anchor="end">0,8</text>
<rect x="1282.00" y="277.10" width="14.4" height="14.4" fill="none" stroke="#fff" stroke-width="1.7"/>
<rect x="1336.60" y="275.60" width="14.4" height="14.4" fill="none" stroke="#fff" stroke-width="1.7"/>
<rect x="1391.20" y="287.10" width="14.4" height="14.4" fill="none" stroke="#fff" stroke-width="1.7"/>
<rect x="1308.80" y="315.40" width="14.4" height="14.4" fill="none" stroke="#fff" stroke-width="1.7"/>
<rect x="1412.30" y="307.90" width="14.4" height="14.4" fill="none" stroke="#fff" stroke-width="1.7"/>
<rect x="1443.30" y="327.30" width="14.4" height="14.4" fill="none" stroke="#fff" stroke-width="1.7"/>
<rect x="1248.20" y="354.10" width="14.4" height="14.4" fill="none" stroke="#fff" stroke-width="1.7"/>
<rect x="1339.10" y="357.10" width="14.4" height="14.4" fill="none" stroke="#fff" stroke-width="1.7"/>
<rect x="1354.70" y="352.60" width="14.4" height="14.4" fill="none" stroke="#fff" stroke-width="1.7"/>
<rect x="1403.60" y="381.90" width="14.4" height="14.4" fill="none" stroke="#fff" stroke-width="1.7"/>
<rect x="1461.20" y="379.70" width="14.4" height="14.4" fill="none" stroke="#fff" stroke-width="1.7"/>
<rect x="1206.20" y="409.20" width="14.4" height="14.4" fill="none" stroke="#fff" stroke-width="1.7"/>
<rect x="1238.50" y="409.90" width="14.4" height="14.4" fill="none" stroke="#fff" stroke-width="1.7"/>
<rect x="1252.20" y="418.60" width="14.4" height="14.4" fill="none" stroke="#fff" stroke-width="1.7"/>
<rect x="1335.10" y="421.60" width="14.4" height="14.4" fill="none" stroke="#fff" stroke-width="1.7"/>
<rect x="1269.10" y="437.00" width="14.4" height="14.4" fill="none" stroke="#fff" stroke-width="1.7"/>
<rect x="1213.20" y="455.30" width="14.4" height="14.4" fill="none" stroke="#fff" stroke-width="1.7"/>
<rect x="1193.70" y="484.80" width="14.4" height="14.4" fill="none" stroke="#fff" stroke-width="1.7"/>
<rect x="1287.90" y="372.90" width="14" height="14" fill="none" stroke="#000" stroke-width="2.8"/>
<circle cx="1319.00" cy="314.60" r="4.4" fill="#9db84a" stroke="#0a0a0a" stroke-width="1.2"/>
<circle cx="1377.30" cy="306.70" r="4.4" fill="#dcbc30" stroke="#0a0a0a" stroke-width="1.2"/>
<circle cx="1386.00" cy="327.80" r="4.4" fill="#dca036" stroke="#0a0a0a" stroke-width="1.2"/>
<circle cx="1403.90" cy="344.90" r="4.4" fill="#cc7c34" stroke="#0a0a0a" stroke-width="1.2"/>
<circle cx="1266.80" cy="333.50" r="4.4" fill="#4a8a4a" stroke="#0a0a0a" stroke-width="1.2"/>
<circle cx="1276.30" cy="366.80" r="4.4" fill="#5a6a48" stroke="#0a0a0a" stroke-width="1.2"/>
<circle cx="1278.00" cy="387.90" r="4.4" fill="#ffffff" stroke="#0a0a0a" stroke-width="1.2"/>
<circle cx="1266.80" cy="400.80" r="4.4" fill="#dddddd" stroke="#0a0a0a" stroke-width="1.2"/>
<circle cx="1261.10" cy="406.00" r="4.4" fill="#c4c4c4" stroke="#0a0a0a" stroke-width="1.2"/>
<circle cx="1256.90" cy="411.40" r="4.4" fill="#b0b0b0" stroke="#0a0a0a" stroke-width="1.2"/>
<circle cx="1252.70" cy="415.90" r="4.4" fill="#a0a0a0" stroke="#0a0a0a" stroke-width="1.2"/>
<circle cx="1291.60" cy="399.30" r="4.4" fill="#b48a72" stroke="#0a0a0a" stroke-width="1.2"/>
<circle cx="1302.10" cy="396.80" r="4.4" fill="#6b5040" stroke="#0a0a0a" stroke-width="1.2"/>
<circle cx="1232.10" cy="404.00" r="4.4" fill="#67b5a2" stroke="#0a0a0a" stroke-width="1.2"/>
<circle cx="1243.90" cy="433.00" r="4.4" fill="#000000" stroke="#0a0a0a" stroke-width="1.2"/>
<circle cx="1330.90" cy="415.90" r="4.4" fill="#c05a60" stroke="#0a0a0a" stroke-width="1.2"/>
<circle cx="1390.00" cy="406.50" r="4.4" fill="#a83840" stroke="#0a0a0a" stroke-width="1.2"/>
<circle cx="1199.40" cy="446.80" r="4.4" fill="#0a8aa0" stroke="#0a0a0a" stroke-width="1.2"/>
<circle cx="1217.70" cy="446.80" r="4.4" fill="#6680a0" stroke="#0a0a0a" stroke-width="1.2"/>
<circle cx="1226.00" cy="448.30" r="4.4" fill="#8a84b4" stroke="#0a0a0a" stroke-width="1.2"/>
<circle cx="1274.00" cy="449.80" r="4.4" fill="#b85090" stroke="#0a0a0a" stroke-width="1.2"/>
<circle cx="1227.60" cy="468.10" r="4.4" fill="#5e3c6c" stroke="#0a0a0a" stroke-width="1.2"/>
<circle cx="1199.60" cy="473.90" r="4.4" fill="#5460a8" stroke="#0a0a0a" stroke-width="1.2"/>
<circle cx="1186.90" cy="493.00" r="4.4" fill="#3c4090" stroke="#0a0a0a" stroke-width="1.2"/>
<rect x="1507" y="83" width="193" height="150" fill="none" stroke="#333" stroke-width="3"/>
<clipPath id="iclip"><rect x="1509" y="85" width="189" height="146"/></clipPath>
<g clip-path="url(#iclip)">
<rect x="1755.12" y="-139.49" width="14.4" height="14.4" fill="none" stroke="#fff" stroke-width="1.7"/>
<rect x="1869.61" y="-142.79" width="14.4" height="14.4" fill="none" stroke="#fff" stroke-width="1.7"/>
<rect x="1984.10" y="-117.52" width="14.4" height="14.4" fill="none" stroke="#fff" stroke-width="1.7"/>
<rect x="1811.32" y="-55.35" width="14.4" height="14.4" fill="none" stroke="#fff" stroke-width="1.7"/>
<rect x="2028.35" y="-71.83" width="14.4" height="14.4" fill="none" stroke="#fff" stroke-width="1.7"/>
<rect x="2093.35" y="-29.20" width="14.4" height="14.4" fill="none" stroke="#fff" stroke-width="1.7"/>
<rect x="1684.24" y="29.68" width="14.4" height="14.4" fill="none" stroke="#fff" stroke-width="1.7"/>
<rect x="1874.85" y="36.27" width="14.4" height="14.4" fill="none" stroke="#fff" stroke-width="1.7"/>
<rect x="1907.57" y="26.38" width="14.4" height="14.4" fill="none" stroke="#fff" stroke-width="1.7"/>
<rect x="2010.11" y="90.75" width="14.4" height="14.4" fill="none" stroke="#fff" stroke-width="1.7"/>
<rect x="2130.89" y="85.92" width="14.4" height="14.4" fill="none" stroke="#fff" stroke-width="1.7"/>
<rect x="1595.70" y="150.30" width="14.4" height="14.4" fill="none" stroke="#fff" stroke-width="1.7"/>
<rect x="1663.30" y="155.60" width="14.4" height="14.4" fill="none" stroke="#fff" stroke-width="1.7"/>
<rect x="1694.10" y="172.00" width="14.4" height="14.4" fill="none" stroke="#fff" stroke-width="1.7"/>
<rect x="1866.47" y="177.97" width="14.4" height="14.4" fill="none" stroke="#fff" stroke-width="1.7"/>
<rect x="1728.07" y="211.81" width="14.4" height="14.4" fill="none" stroke="#fff" stroke-width="1.7"/>
<rect x="1610.85" y="252.01" width="14.4" height="14.4" fill="none" stroke="#fff" stroke-width="1.7"/>
<rect x="1569.96" y="316.83" width="14.4" height="14.4" fill="none" stroke="#fff" stroke-width="1.7"/>
<rect x="1767.27" y="70.74" width="14" height="14" fill="none" stroke="#000" stroke-width="2.8"/>
<circle cx="1824.81" cy="-65.72" r="4.4" fill="#9db84a" stroke="#0a0a0a" stroke-width="1.2"/>
<circle cx="1947.06" cy="-83.08" r="4.4" fill="#dcbc30" stroke="#0a0a0a" stroke-width="1.2"/>
<circle cx="1965.30" cy="-36.72" r="4.4" fill="#dca036" stroke="#0a0a0a" stroke-width="1.2"/>
<circle cx="2002.84" cy="0.85" r="4.4" fill="#cc7c34" stroke="#0a0a0a" stroke-width="1.2"/>
<circle cx="1715.35" cy="-24.20" r="4.4" fill="#4a8a4a" stroke="#0a0a0a" stroke-width="1.2"/>
<circle cx="1735.27" cy="48.96" r="4.4" fill="#5a6a48" stroke="#0a0a0a" stroke-width="1.2"/>
<circle cx="1738.83" cy="95.32" r="4.4" fill="#ffffff" stroke="#0a0a0a" stroke-width="1.2"/>
<circle cx="1715.35" cy="123.66" r="4.4" fill="#dddddd" stroke="#0a0a0a" stroke-width="1.2"/>
<circle cx="1703.40" cy="135.08" r="4.4" fill="#c4c4c4" stroke="#0a0a0a" stroke-width="1.2"/>
<circle cx="1693.80" cy="148.80" r="4.4" fill="#b0b0b0" stroke="#0a0a0a" stroke-width="1.2"/>
<circle cx="1686.80" cy="157.00" r="4.4" fill="#a0a0a0" stroke="#0a0a0a" stroke-width="1.2"/>
<circle cx="1767.35" cy="120.36" r="4.4" fill="#b48a72" stroke="#0a0a0a" stroke-width="1.2"/>
<circle cx="1789.37" cy="114.87" r="4.4" fill="#6b5040" stroke="#0a0a0a" stroke-width="1.2"/>
<circle cx="1642.10" cy="131.90" r="4.4" fill="#67b5a2" stroke="#0a0a0a" stroke-width="1.2"/>
<circle cx="1668.00" cy="193.70" r="4.4" fill="#000000" stroke="#0a0a0a" stroke-width="1.2"/>
<circle cx="1849.76" cy="156.83" r="4.4" fill="#c05a60" stroke="#0a0a0a" stroke-width="1.2"/>
<circle cx="1973.69" cy="136.18" r="4.4" fill="#a83840" stroke="#0a0a0a" stroke-width="1.2"/>
<circle cx="1575.00" cy="225.00" r="4.4" fill="#0a8aa0" stroke="#0a0a0a" stroke-width="1.2"/>
<circle cx="1611.40" cy="222.60" r="4.4" fill="#6680a0" stroke="#0a0a0a" stroke-width="1.2"/>
<circle cx="1630.00" cy="225.60" r="4.4" fill="#8a84b4" stroke="#0a0a0a" stroke-width="1.2"/>
<circle cx="1730.45" cy="231.31" r="4.4" fill="#b85090" stroke="#0a0a0a" stroke-width="1.2"/>
<circle cx="1633.15" cy="271.52" r="4.4" fill="#5e3c6c" stroke="#0a0a0a" stroke-width="1.2"/>
<circle cx="1574.44" cy="284.26" r="4.4" fill="#5460a8" stroke="#0a0a0a" stroke-width="1.2"/>
<circle cx="1547.80" cy="326.22" r="4.4" fill="#3c4090" stroke="#0a0a0a" stroke-width="1.2"/>
</g>
<rect x="1508.5" y="84.5" width="190" height="147" fill="none" stroke="#9a9a9a" stroke-width="1.2"/>
<rect x="1421" y="537" width="281" height="28" fill="#333333"/>
<text transform="translate(1453.00 559.00) scale(1.0108 1)" font-size="20.00" fill="#f2f2f2" stroke="#f2f2f2" stroke-width="0.44">RGB Triplet: 0, 133, 163</text>
</svg>
<script>
(function(){
var C = {"px0": 1052.0, "py0": 577.5, "sx": 777.0, "sy": 596.0, "locus": [[0.1741, 0.005], [0.17408, 0.00499], [0.17405, 0.00498], [0.17402, 0.00497], [0.17398, 0.00496], [0.17394, 0.00494], [0.1739, 0.00493], [0.17385, 0.00491], [0.1738, 0.0049], [0.17375, 0.00489], [0.17369, 0.00487], [0.17364, 0.00486], [0.17358, 0.00484], [0.17351, 0.00483], [0.17344, 0.00482], [0.17337, 0.00481], [0.1733, 0.0048], [0.17323, 0.00479], [0.17315, 0.00479], [0.17307, 0.00478], [0.17299, 0.00477], [0.17291, 0.00477], [0.17281, 0.00478], [0.17271, 0.00478], [0.1726, 0.0048], [0.17247, 0.00482], [0.17233, 0.00484], [0.17218, 0.00487], [0.17203, 0.00491], [0.17186, 0.00495], [0.1717, 0.00499], [0.17155, 0.00504], [0.1714, 0.0051], [0.17126, 0.00517], [0.17112, 0.00524], [0.17099, 0.00532], [0.17086, 0.0054], [0.17073, 0.00549], [0.17059, 0.00559], [0.17045, 0.00569], [0.1703, 0.0058], [0.17014, 0.00591], [0.16999, 0.00603], [0.16982, 0.00616], [0.16966, 0.00629], [0.16948, 0.00643], [0.1693, 0.00657], [0.16911, 0.00673], [0.1689, 0.0069], [0.16868, 0.00708], [0.16845, 0.00727], [0.16822, 0.00747], [0.16797, 0.00767], [0.16771, 0.00789], [0.16745, 0.00812], [0.16718, 0.00835], [0.1669, 0.0086], [0.16662, 0.00885], [0.16633, 0.00912], [0.16603, 0.00939], [0.16573, 0.00968], [0.16542, 0.00997], [0.16509, 0.01027], [0.16475, 0.01058], [0.1644, 0.0109], [0.16403, 0.01123], [0.16366, 0.01156], [0.16327, 0.0119], [0.16287, 0.01225], [0.16246, 0.01261], [0.16203, 0.01299], [0.16158, 0.01339], [0.1611, 0.0138], [0.1606, 0.01423], [0.16009, 0.01468], [0.15955, 0.01514], [0.15899, 0.01562], [0.15842, 0.01611], [0.15783, 0.01662], [0.15722, 0.01715], [0.1566, 0.0177], [0.15596, 0.01826], [0.15531, 0.01883], [0.15464, 0.01941], [0.15396, 0.02001], [0.15325, 0.02063], [0.15252, 0.02128], [0.15177, 0.02197], [0.151, 0.0227], [0.1502, 0.02346], [0.14938, 0.02423], [0.14854, 0.02504], [0.14768, 0.02588], [0.1468, 0.02675], [0.14589, 0.02768], [0.14496, 0.02866], [0.144, 0.0297], [0.14303, 0.03077], [0.14205, 0.03184], [0.14105, 0.03295], [0.14002, 0.03412], [0.13897, 0.03537], [0.13786, 0.03673], [0.13671, 0.03823], [0.1355, 0.0399], [0.13423, 0.04169], [0.13293, 0.04357], [0.13157, 0.04556], [0.13018, 0.04767], [0.12873, 0.04994], [0.12724, 0.05236], [0.12569, 0.05498], [0.1241, 0.0578], [0.12246, 0.06078], [0.12078, 0.06387], [0.11906, 0.06712], [0.11728, 0.07055], [0.11545, 0.0742], [0.11356, 0.0781], [0.11162, 0.08229], [0.1096, 0.0868], [0.10752, 0.09158], [0.10539, 0.09657], [0.1032, 0.1018], [0.10096, 0.10731], [0.09864, 0.11313], [0.09627, 0.11928], [0.09382, 0.12579], [0.0913, 0.1327], [0.08869, 0.13996], [0.08597, 0.14753], [0.08317, 0.15543], [0.08031, 0.16367], [0.07742, 0.1723], [0.0745, 0.18133], [0.07159, 0.19079], [0.0687, 0.2007], [0.06581, 0.21107], [0.06289, 0.22188], [0.05995, 0.23311], [0.05701, 0.24474], [0.05407, 0.25677], [0.05114, 0.26916], [0.04825, 0.28191], [0.0454, 0.295], [0.04255, 0.30854], [0.03967, 0.32259], [0.03679, 0.33707], [0.03395, 0.35189], [0.03117, 0.36695], [0.02848, 0.38216], [0.02591, 0.39744], [0.0235, 0.4127], [0.0212, 0.42809], [0.01895, 0.44378], [0.0168, 0.45966], [0.01475, 0.47563], [0.01284, 0.49159], [0.0111, 0.50744], [0.00954, 0.52308], [0.0082, 0.5384], [0.00704, 0.55354], [0.00602, 0.56865], [0.00515, 0.58365], [0.00447, 0.59849], [0.00398, 0.6131], [0.00371, 0.62739], [0.00368, 0.64132], [0.0039, 0.6548], [0.00436, 0.66796], [0.00504, 0.68091], [0.00594, 0.69359], [0.00707, 0.70591], [0.00842, 0.71781], [0.01001, 0.7292], [0.01183, 0.74003], [0.0139, 0.7502], [0.01624, 0.75981], [0.01885, 0.76895], [0.02172, 0.77759], [0.02481, 0.7857], [0.0281, 0.79323], [0.03157, 0.80015], [0.03517, 0.80642], [0.0389, 0.812], [0.0428, 0.81684], [0.04691, 0.82095], [0.05122, 0.8244], [0.05567, 0.82724], [0.06024, 0.82954], [0.06489, 0.83135], [0.06959, 0.83276], [0.0743, 0.8338], [0.07907, 0.83434], [0.08394, 0.83426], [0.08891, 0.83366], [0.09393, 0.83263], [0.099, 0.83127], [0.10408, 0.82968], [0.10915, 0.82796], [0.1142, 0.8262], [0.11925, 0.8243], [0.12434, 0.82211], [0.12944, 0.81969], [0.13456, 0.81709], [0.13965, 0.81436], [0.14472, 0.81155], [0.14974, 0.80872], [0.1547, 0.8059], [0.1596, 0.80307], [0.16445, 0.80018], [0.16926, 0.79721], [0.17404, 0.79419], [0.17879, 0.79111], [0.18351, 0.78798], [0.18821, 0.78481], [0.1929, 0.7816], [0.19756, 0.77835], [0.20219, 0.77505], [0.20679, 0.7717], [0.21137, 0.76831], [0.21594, 0.76487], [0.2205, 0.76139], [0.22505, 0.75786], [0.2296, 0.7543], [0.23415, 0.75069], [0.23869, 0.74704], [0.24323, 0.74334], [0.24776, 0.73959], [0.25228, 0.73582], [0.25679, 0.732], [0.2613, 0.72816], [0.2658, 0.7243], [0.27029, 0.72041], [0.27478, 0.71647], [0.27926, 0.71251], [0.28373, 0.70851], [0.2882, 0.70449], [0.29267, 0.70045], [0.29713, 0.69638], [0.3016, 0.6923], [0.30607, 0.6882], [0.31053, 0.68407], [0.31499, 0.67992], [0.31945, 0.67575], [0.32391, 0.67156], [0.32837, 0.66735], [0.33283, 0.66313], [0.3373, 0.6589], [0.34177, 0.65465], [0.34625, 0.65038], [0.35073, 0.6461], [0.35521, 0.64179], [0.35969, 0.63748], [0.36416, 0.63316], [0.36863, 0.62883], [0.3731, 0.6245], [0.37756, 0.62016], [0.38202, 0.61581], [0.38647, 0.61145], [0.39093, 0.60708], [0.39537, 0.60271], [0.39982, 0.59834], [0.40426, 0.59397], [0.4087, 0.5896], [0.41314, 0.58523], [0.41758, 0.58087], [0.42202, 0.57649], [0.42646, 0.57212], [0.43089, 0.56776], [0.4353, 0.5634], [0.43971, 0.55904], [0.4441, 0.5547], [0.44848, 0.55036], [0.45285, 0.54603], [0.45721, 0.54169], [0.46156, 0.53737], [0.46589, 0.53305], [0.47021, 0.52875], [0.47452, 0.52447], [0.4788, 0.5202], [0.48307, 0.51595], [0.48733, 0.5117], [0.49157, 0.50747], [0.4958, 0.50326], [0.50001, 0.49906], [0.5042, 0.49488], [0.50836, 0.49073], [0.5125, 0.4866], [0.51662, 0.48249], [0.52072, 0.4784], [0.5248, 0.47433], [0.52886, 0.47029], [0.53289, 0.46627], [0.53689, 0.46228], [0.54086, 0.45832], [0.5448, 0.4544], [0.54871, 0.45051], [0.5526, 0.44665], [0.55646, 0.44282], [0.56029, 0.43902], [0.56408, 0.43525], [0.56783, 0.43153], [0.57154, 0.42784], [0.5752, 0.4242], [0.57882, 0.42059], [0.5824, 0.41701], [0.58594, 0.41347], [0.58944, 0.40996], [0.59289, 0.40651], [0.59629, 0.40311], [0.59963, 0.39977], [0.6029, 0.3965], [0.6061, 0.3933], [0.60925, 0.39017], [0.61233, 0.3871], [0.61536, 0.38409], [0.61833, 0.38112], [0.62126, 0.37821], [0.62415, 0.37534], [0.627, 0.3725], [0.62981, 0.3697], [0.63259, 0.36693], [0.63532, 0.36421], [0.63801, 0.36154], [0.64064, 0.35891], [0.64322, 0.35635], [0.64574, 0.35384], [0.6482, 0.3514], [0.65059, 0.34903], [0.65293, 0.34672], [0.65521, 0.34447], [0.65743, 0.34227], [0.6596, 0.34014], [0.66172, 0.33805], [0.66378, 0.336], [0.6658, 0.334], [0.66777, 0.33204], [0.66968, 0.33014], [0.67153, 0.32828], [0.67334, 0.32648], [0.67509, 0.32471], [0.67681, 0.323], [0.67847, 0.32133], [0.6801, 0.3197], [0.68168, 0.31812], [0.68321, 0.31659], [0.68469, 0.31511], [0.68613, 0.31367], [0.68752, 0.31227], [0.68888, 0.31091], [0.6902, 0.30959], [0.6915, 0.3083], [0.69276, 0.30705], [0.69398, 0.30584], [0.69516, 0.30467], [0.69631, 0.30354], [0.69742, 0.30245], [0.69851, 0.30137], [0.69956, 0.30033], [0.7006, 0.2993], [0.70161, 0.2983], [0.70258, 0.29733], [0.70352, 0.29639], [0.70444, 0.29547], [0.70533, 0.29457], [0.7062, 0.2937], [0.70706, 0.29284], [0.7079, 0.292], [0.70873, 0.29117], [0.70954, 0.29036], [0.71032, 0.28958], [0.71109, 0.28881], [0.71185, 0.28805], [0.71258, 0.28732], [0.7133, 0.2866], [0.714, 0.2859], [0.71468, 0.28521], [0.71535, 0.28455], [0.716, 0.2839], [0.71663, 0.28326], [0.71725, 0.28265], [0.71785, 0.28205], [0.71843, 0.28146], [0.719, 0.2809], [0.71955, 0.28035], [0.72009, 0.27983], [0.72062, 0.27932], [0.72113, 0.27882], [0.72162, 0.27835], [0.72209, 0.27789], [0.72255, 0.27744], [0.723, 0.277], [0.72343, 0.27658], [0.72384, 0.27617], [0.72423, 0.27578], [0.72461, 0.2754], [0.72497, 0.27503], [0.72532, 0.27468], [0.72567, 0.27434], [0.726, 0.274], [0.72633, 0.27367], [0.72664, 0.27336], [0.72694, 0.27306], [0.72723, 0.27277], [0.72751, 0.27249], [0.72778, 0.27222], [0.72805, 0.27195], [0.7283, 0.2717], [0.72854, 0.27146], [0.72876, 0.27124], [0.72897, 0.27103], [0.72917, 0.27083], [0.72937, 0.27063], [0.72957, 0.27043], [0.72978, 0.27022], [0.73, 0.27], [0.73023, 0.26977], [0.73046, 0.26954], [0.7307, 0.2693], [0.73094, 0.26906], [0.73119, 0.26881], [0.73144, 0.26856], [0.73171, 0.26829], [0.732, 0.268], [0.73232, 0.26768], [0.73269, 0.26731], [0.73308, 0.26692], [0.73347, 0.26652], [0.73385, 0.26615], [0.7342, 0.2658], [0.73449, 0.26551], [0.7347, 0.2653]], "main": [1052, 77, 653, 500], "inset": [1509, 85, 189, 146, 0.1498, 0.2658, 0.2145, 0.326]};
function draw(id, x, y, w, h, xr0, xr1, yr0, yr1){
  var cv = document.getElementById(id);
  cv.width = w; cv.height = h;
  cv.style.left = x+'px'; cv.style.top = y+'px'; cv.style.width = w+'px'; cv.style.height = h+'px';
  var ctx = cv.getContext('2d');
  // mask
  var m = document.createElement('canvas'); m.width = w; m.height = h;
  var mc = m.getContext('2d');
  mc.fillStyle = '#fff';
  mc.beginPath();
  for (var i=0;i<C.locus.length;i++){
    var L = C.locus[i];
    var X = (L[0]-xr0)/(xr1-xr0)*w, Y = h-(L[1]-yr0)/(yr1-yr0)*h;
    if(i==0) mc.moveTo(X,Y); else mc.lineTo(X,Y);
  }
  mc.closePath(); mc.fill();
  var md = mc.getImageData(0,0,w,h).data;
  var img = ctx.createImageData(w,h); var d = img.data;
  var bg = [36,36,36]; var SS = 3;
  function g(c){ return c<=0.0031308 ? 12.92*c : 1.055*Math.pow(c,1/2.4)-0.055; }
  for (var py=0; py<h; py++){
    for (var px=0; px<w; px++){
      var idx = (py*w+px)*4;
      var a = md[idx+3]/255;
      var r=bg[0], gg=bg[1], b=bg[2];
      if (a>0){
        var sr=0, sg=0, sb=0;
        for (var sy=0; sy<SS; sy++){ for (var sx=0; sx<SS; sx++){
        var xx = xr0 + (px+(sx+0.5)/SS)/w*(xr1-xr0);
        var yy = yr0 + (h-py-(sy+0.5)/SS)/h*(yr1-yr0);
        if (yy<0.001) yy=0.001;
        var X = xx/yy, Y = 1, Z = (1-xx-yy)/yy;
        var R = 3.2406*X - 1.5372*Y - 0.4986*Z;
        var G = -0.9689*X + 1.8758*Y + 0.0415*Z;
        var B = 0.0557*X - 0.2040*Y + 1.0570*Z;
        var out = (R<0||G<0||B<0);
        R=Math.max(R,0); G=Math.max(G,0); B=Math.max(B,0);
        var mx = Math.max(R,G,B);
        var k = (out ? 0.6 : 1.0)*255/mx;
        sr += R*k; sg += G*k; sb += B*k;
        }}
        var n = SS*SS;
        r = r*(1-a) + sr/n*a; gg = gg*(1-a)+sg/n*a; b = b*(1-a)+sb/n*a;
      }
      d[idx]=r; d[idx+1]=gg; d[idx+2]=b; d[idx+3]=255;
    }
  }
  ctx.putImageData(img,0,0);
}
var M = C.main;
draw('cie', M[0], M[1], M[2], M[3], (M[0]-C.px0)/C.sx, (M[0]+M[2]-C.px0)/C.sx, (C.py0-(M[1]+M[3]))/C.sy, (C.py0-M[1])/C.sy);
var I = C.inset;
draw('cie2', I[0], I[1], I[2], I[3], I[4], I[5], I[6], I[7]);
})();
</script>
</body></html>
